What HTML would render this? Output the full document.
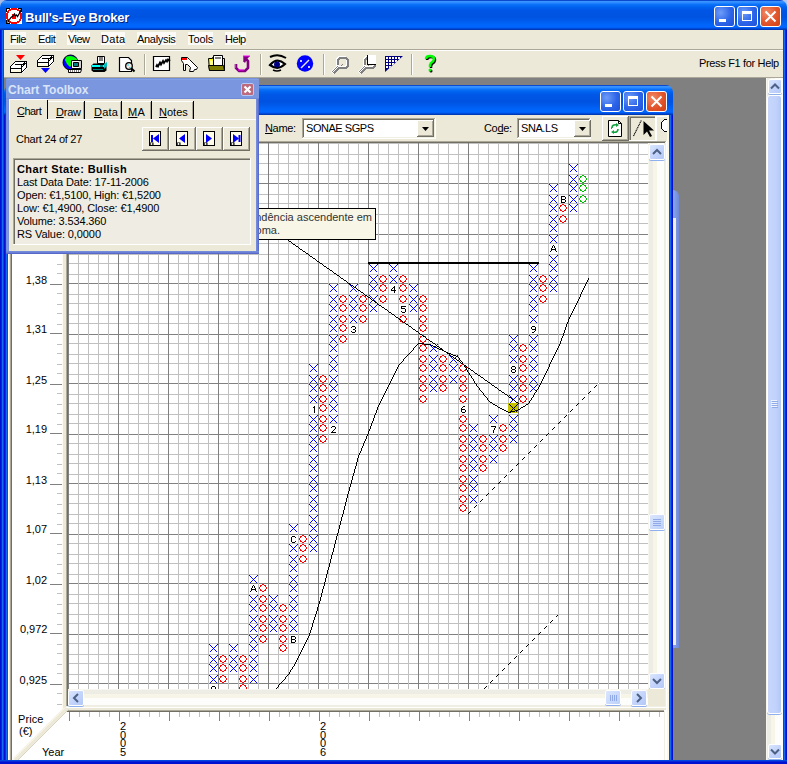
<!DOCTYPE html><html><head><meta charset="utf-8"><style>html,body{margin:0;padding:0}body{width:787px;height:764px;overflow:hidden;position:relative;background:#808080;font-family:"Liberation Sans", sans-serif}div{box-sizing:content-box}</style></head><body>
<div style="position:absolute;left:0px;top:0px;width:8px;height:8px;background:#a8bae6;"></div>
<div style="position:absolute;left:779px;top:0px;width:8px;height:8px;background:#b4c4ec;"></div>
<div style="position:absolute;left:0px;top:0px;width:787px;height:30px;background:linear-gradient(to bottom,#0a4ad0 0px,#0a4ad0 1px,#3d95ff 1px,#2a89ff 3px,#0d74fb 4px,#0062f0 7px,#0056e6 10px,#0053e1 17px,#0059ea 20px,#0064f8 24px,#0066ff 27px,#0058ee 28px,#0040c4 29px,#0033a8 30px);border-radius:7px 7px 0 0"></div>
<div style="position:absolute;left:0px;top:30px;width:4px;height:734px;background:linear-gradient(to right,#0010d0 0,#0010d0 1px,#0828d8 1px,#0828d8 2px,#166af0 2px,#166af0 3px,#0048e0 3px);"></div>
<div style="position:absolute;left:783px;top:30px;width:4px;height:734px;background:linear-gradient(to right,#0048e0 0,#0048e0 1px,#166af0 1px,#166af0 2px,#0828d8 2px,#0828d8 3px,#0010d0 3px);"></div>
<div style="position:absolute;left:0px;top:760px;width:787px;height:4px;background:linear-gradient(to bottom,#0048e0 0,#0048e0 1px,#0828d8 1px,#0828d8 2px,#0010d0 2px);"></div>
<svg style="position:absolute;left:6px;top:8px;" width="16" height="16" viewBox="0 0 16 16"><g shape-rendering="crispEdges"><rect x="0" y="0" width="16" height="16" fill="#fff"/><path d="M0 0h4v1h-3v3h-1z M12 0h4v4h-1v-3h-3z M0 12h1v3h3v1h-4z" fill="#000"/><path d="M5 0h6v1h2v1h1v1h1v2h1v6h-1v2h-1v1h-1v1h-2v1h-6v-1h-2v-1h-1v-1h-1v-2h-1v-6h1v-2h1v-1h1v-1h2z M5 2v1h-2v2h-1v6h1v2h2v1h6v-1h2v-2h1v-6h-1v-2h-2v-1z" fill="#f00" fill-rule="evenodd"/><path d="M6 6h3v2h1v3h-4z" fill="#f00"/></g><path d="M1.5 14.5L5 9.5L7 8L8.5 6L9.5 8L10.5 7L11.5 8.5L13 6L15.5 1" fill="none" stroke="#000" stroke-width="1.3"/></svg>
<div style="position:absolute;left:25.00px;top:11.00px;font-size:13px;line-height:13px;color:#fff;font-weight:bold;white-space:nowrap;letter-spacing:-0.219px;text-shadow:1px 1px 0 #0a1e7a">Bull's-Eye Broker</div>
<div style="position:absolute;left:714px;top:6px;width:21px;height:21px;box-sizing:border-box;border:1px solid #fff;border-radius:3px;background:radial-gradient(circle at 30% 30%,#6d9cf8 0%,#2c64e8 55%,#1f50d8 100%)"></div><div style="position:absolute;left:719px;top:19px;width:7px;height:3px;background:#fff;"></div>
<div style="position:absolute;left:737px;top:6px;width:21px;height:21px;box-sizing:border-box;border:1px solid #fff;border-radius:3px;background:radial-gradient(circle at 30% 30%,#6d9cf8 0%,#2c64e8 55%,#1f50d8 100%)"></div><div style="position:absolute;left:742px;top:11px;width:10px;height:10px;box-sizing:border-box;border:1px solid #fff;border-top-width:3px"></div>
<div style="position:absolute;left:760px;top:6px;width:21px;height:21px;box-sizing:border-box;border:1px solid #fff;border-radius:3px;background:radial-gradient(circle at 30% 30%,#f08a66 0%,#e2542c 55%,#d04010 100%)"></div><svg style="position:absolute;left:760px;top:6px" width="21" height="21"><path d="M5.5 5.5L15.5 15.5M15.5 5.5L5.5 15.5" stroke="#fff" stroke-width="2"/></svg>
<div style="position:absolute;left:4px;top:30px;width:779px;height:48px;background:#ece9d8;"></div>
<div style="position:absolute;left:10px;top:32px;width:16px;height:13px;background:#fbfaf6;"></div>
<div style="position:absolute;left:10.00px;top:33.69px;font-size:11px;line-height:11px;color:#000;font-weight:normal;white-space:nowrap;letter-spacing:-0.467px;">File</div>
<div style="position:absolute;left:38px;top:32px;width:18px;height:13px;background:#fbfaf6;"></div>
<div style="position:absolute;left:38.00px;top:33.69px;font-size:11px;line-height:11px;color:#000;font-weight:normal;white-space:nowrap;letter-spacing:-0.367px;">Edit</div>
<div style="position:absolute;left:67px;top:32px;width:23px;height:13px;background:#fbfaf6;"></div>
<div style="position:absolute;left:68.00px;top:33.69px;font-size:11px;line-height:11px;color:#000;font-weight:normal;white-space:nowrap;letter-spacing:-0.600px;">View</div>
<div style="position:absolute;left:101px;top:32px;width:24px;height:13px;background:#fbfaf6;"></div>
<div style="position:absolute;left:101.00px;top:33.69px;font-size:11px;line-height:11px;color:#000;font-weight:normal;white-space:nowrap;letter-spacing:0.333px;">Data</div>
<div style="position:absolute;left:137px;top:32px;width:39px;height:13px;background:#fbfaf6;"></div>
<div style="position:absolute;left:137.00px;top:33.69px;font-size:11px;line-height:11px;color:#000;font-weight:normal;white-space:nowrap;letter-spacing:-0.300px;">Analysis</div>
<div style="position:absolute;left:188px;top:32px;width:25px;height:13px;background:#fbfaf6;"></div>
<div style="position:absolute;left:188.00px;top:33.69px;font-size:11px;line-height:11px;color:#000;font-weight:normal;white-space:nowrap;letter-spacing:-0.100px;">Tools</div>
<div style="position:absolute;left:225px;top:32px;width:21px;height:13px;background:#fbfaf6;"></div>
<div style="position:absolute;left:225.00px;top:33.69px;font-size:11px;line-height:11px;color:#000;font-weight:normal;white-space:nowrap;letter-spacing:-0.467px;">Help</div>
<div style="position:absolute;left:4px;top:49px;width:779px;height:1px;background:#aca899;"></div>
<div style="position:absolute;left:4px;top:50px;width:779px;height:1px;background:#fff;"></div>
<div style="position:absolute;left:4px;top:77px;width:779px;height:1px;background:#aca899;"></div>
<div style="position:absolute;left:144px;top:54px;width:1px;height:21px;background:#aca899;"></div><div style="position:absolute;left:145px;top:54px;width:1px;height:21px;background:#fff;"></div><div style="position:absolute;left:260px;top:54px;width:1px;height:21px;background:#aca899;"></div><div style="position:absolute;left:261px;top:54px;width:1px;height:21px;background:#fff;"></div><div style="position:absolute;left:323px;top:54px;width:1px;height:21px;background:#aca899;"></div><div style="position:absolute;left:324px;top:54px;width:1px;height:21px;background:#fff;"></div><div style="position:absolute;left:411px;top:54px;width:1px;height:21px;background:#aca899;"></div><div style="position:absolute;left:412px;top:54px;width:1px;height:21px;background:#fff;"></div><svg style="position:absolute;left:0;top:0" width="787" height="80"><defs><clipPath id="tri"><path d="M385 56h18l-18 16z"/></clipPath></defs><path d="M16 55h9l-4.5 5z" fill="#f00"/><g transform="translate(0,0)" shape-rendering="crispEdges"><path d="M15 61h12v7l-5 5h-12v-7z" fill="#fff"/><path d="M11 70h10v2h-10z" fill="#fffbe0"/><path d="M15.5 61.5H26.5V67.5L21.5 72.5H10.5V66.5Z" fill="none" stroke="#000"/><path d="M10.5 68.5H21.5M21.5 65V72M15 64.5H22.5M14.5 62.5L11.5 65.5M26.5 62.5L21.5 67.5M25 62.5L22.5 65" fill="none" stroke="#000"/></g><g transform="translate(27,-6)" shape-rendering="crispEdges"><path d="M15 61h12v7l-5 5h-12v-7z" fill="#fff"/><path d="M11 70h10v2h-10z" fill="#fffbe0"/><path d="M15.5 61.5H26.5V67.5L21.5 72.5H10.5V66.5Z" fill="none" stroke="#000"/><path d="M10.5 68.5H21.5M21.5 65V72M15 64.5H22.5M14.5 62.5L11.5 65.5M26.5 62.5L21.5 67.5M25 62.5L22.5 65" fill="none" stroke="#000"/></g><path d="M41 68h9l-4.5 5z" fill="#00f"/><circle cx="70.5" cy="62.5" r="7.5" fill="#0000ff" stroke="#000"/><path d="M66 57q4-2 8 0q3 1 4 4l-3 1l-2-2l-2 2l1 3l-2 2l-3-3l-2-4z" fill="#00ff00"/><path d="M71.5 60.5h10v8h-10z" fill="#fff" stroke="#000"/><path d="M73.5 62.5h5v4h-5z" fill="#008080" stroke="#000"/><path d="M80 61v7" stroke="#a0a0a0"/><path d="M68.5 69.5h13l-1 3h-12z" fill="#fff" stroke="#000"/><path d="M70 71h10" stroke="#000" stroke-dasharray="1 1"/><path d="M97.5 56.5h7v7h-7z" fill="#fff" stroke="#000"/><path d="M99 58h4M99 60h4" stroke="#000"/><path d="M93.5 63.5h11l2 2v5l-2 1.5h-11l-2-1.5v-5z" fill="#000"/><path d="M92 65h12v2h-12z" fill="#00ffff"/><path d="M100 66h3" stroke="#000"/><path d="M93 69.5h10" stroke="#008080"/><path d="M104 64l3-2v4l-3 3z" fill="#00c0c0"/><path d="M119.5 57.5h9l3 3v11h-12z" fill="#fff" stroke="#000" stroke-width="1.2"/><circle cx="129" cy="66" r="3.3" fill="#f4e8e0" stroke="#000" stroke-width="1.3"/><path d="M127 64.5h2v1h-2zM129 67h1.5v1h-1.5z" fill="#00e0ff"/><path d="M131.5 68.5l3 3" stroke="#000" stroke-width="2"/><path d="M153.5 56.5h16v14h-16z" fill="#fff" stroke="#000" stroke-width="1.2"/><path d="M156 67l1 -2l1 1.5l2 -4l1 2l2 -3.5l1 2l2 -3l1 1.5l1 -2l1 1l1 -1" fill="none" stroke="#000" stroke-width="1.8"/><path d="M181.5 57.5h6l2 2l8 8l-1 2l-2 0l-1 2h-4l1-4l-3-3h-2v6h-2v-7l-2-3z" fill="#fff" stroke="#000"/><path d="M182 58h5v2h-5z" fill="#f00"/><path d="M208.5 58.5h4v-1h3v1h9v12h-15z" fill="#ffff00" stroke="#000"/><path d="M213.5 55.5h9v10h-9z" fill="#fff" stroke="#000"/><path d="M215 58h6" stroke="#000"/><path d="M210.5 60.5h2v5h-2z" fill="#fff"/><path d="M208.5 65.5h15l1 5h-15z" fill="#808000" stroke="#000"/><path d="M236 64v4l3 3h6l3-3v-7l-3-3" fill="none" stroke="#800080" stroke-width="2.6"/><path d="M243 56h7l-3 3l-2 4l-2-2z" fill="#800080"/><path d="M243 56h7" stroke="#ff00ff"/><path d="M243.5 56v6" stroke="#ff00ff"/><path d="M235.5 64v4M238 70h6" stroke="#ff00ff"/><path d="M270 57q8-4 16 1" fill="none" stroke="#000" stroke-width="2"/><path d="M270 65q7-8 15-1q-7 7-15 1z" fill="#fff" stroke="#000" stroke-width="2.2"/><circle cx="277" cy="64.5" r="3" fill="#000080"/><path d="M275 63h1v1h-1z" fill="#0000ff"/><path d="M273 70q4 2 8 0" fill="none" stroke="#000" stroke-width="1.5"/><circle cx="305" cy="63.5" r="8.2" fill="#0000ff"/><path d="M301 68l8-8" stroke="#e8e8e0" stroke-width="1.5"/><path d="M300 60h2v2h-2zM308 66h2v2h-2z" fill="#d0d0c8"/><g transform="translate(329,54)" shape-rendering="crispEdges"><path d="M11 4h6l2 2v6l-2 2h-6l-2-2v-6z" fill="none" stroke="#fff" stroke-width="2" transform="translate(-1,-1)"/><path d="M11 4h6l2 2v6l-2 2h-6l-2-2v-6z" fill="none" stroke="#808080" stroke-width="2"/><path d="M17 3l-2 2M14 10l-2 2" stroke="#808080" stroke-width="1"/><path d="M3 19l7-7" stroke="#fff" stroke-width="3"/><path d="M4.5 19.5l6-6" stroke="#808080" stroke-width="1.5"/><path d="M3 18l6-6" stroke="#808080" stroke-width="1"/></g><g transform="translate(356,54)" shape-rendering="crispEdges"><path d="M11 4h6l2 2v6l-2 2h-6l-2-2v-6z" fill="none" stroke="#fff" stroke-width="2" transform="translate(-1,-1)"/><path d="M11 4h6l2 2v6l-2 2h-6l-2-2v-6z" fill="none" stroke="#808080" stroke-width="2"/><path d="M17 3l-2 2M14 10l-2 2" stroke="#808080" stroke-width="1"/><path d="M3 19l7-7" stroke="#fff" stroke-width="3"/><path d="M4.5 19.5l6-6" stroke="#808080" stroke-width="1.5"/><path d="M3 18l6-6" stroke="#808080" stroke-width="1"/><path d="M12 1h8v9h-8z" fill="#fff"/><path d="M11.5 1v10M11.5 10.5h8" stroke="#000" fill="none"/></g><g clip-path="url(#tri)" shape-rendering="crispEdges"><path d="M385 56h18v16h-18z" fill="#000080"/><path d="M386 57h2v2h-2zM389 57h2v2h-2zM392 57h2v2h-2zM395 57h2v2h-2zM398 57h2v2h-2zM386 60h2v2h-2zM389 60h2v2h-2zM392 60h2v2h-2zM395 60h2v2h-2zM398 60h2v2h-2zM386 63h2v2h-2zM389 63h2v2h-2zM392 63h2v2h-2zM395 63h2v2h-2zM398 63h2v2h-2zM386 66h2v2h-2zM389 66h2v2h-2zM392 66h2v2h-2zM395 66h2v2h-2zM398 66h2v2h-2z" fill="#fff"/></g><path d="M426 59q0-3 4-3q4 0 4 3q0 2-3 4l-1 2v2" fill="none" stroke="#000" stroke-width="2.5" transform="translate(1,1)"/><circle cx="430" cy="70" r="1.5" fill="#000" transform="translate(1,1)"/><path d="M426 59q0-3 4-3q4 0 4 3q0 2-3 4l-1 2v2" fill="none" stroke="#00ff00" stroke-width="2.5"/><circle cx="430" cy="70" r="1.5" fill="#00ff00"/></svg>
<div style="position:absolute;left:699.00px;top:57.69px;font-size:11px;line-height:11px;color:#000;font-weight:normal;white-space:nowrap;letter-spacing:-0.338px;">Press F1 for Help</div>
<div style="position:absolute;left:766px;top:78px;width:17px;height:682px;background:linear-gradient(to right,#f7f6ef 0,#f7f6ef 1px,#eeede5 1px,#eeede5 5px,#f7f5e8 5px,#f7f5e8 9px,#fdfdfb 9px);"></div>
<div style="position:absolute;left:768px;top:79px;width:14px;height:15px;box-sizing:border-box;border:1px solid #fff;border-radius:2px;background:linear-gradient(135deg,#dbe6fd 0%,#c4d5fc 50%,#b3c8f7 100%);box-shadow:0 1px 0 #8fb0ec"></div><svg style="position:absolute;left:0;top:0" width="787" height="764"><path d="M771.0 88.5L775.0 84.5L779.0 88.5" fill="none" stroke="#4d6185" stroke-width="2"/></svg>
<div style="position:absolute;left:767px;top:95px;width:15px;height:619px;box-sizing:border-box;border:1px solid #fff;border-radius:3px;background:linear-gradient(to right,#c8d6fb,#c1d2fb 60%,#b4c8f6);box-shadow:0 1px 0 #8fb0ec"></div>
<div style="position:absolute;left:768px;top:744px;width:14px;height:15px;box-sizing:border-box;border:1px solid #fff;border-radius:2px;background:linear-gradient(135deg,#dbe6fd 0%,#c4d5fc 50%,#b3c8f7 100%);box-shadow:0 1px 0 #8fb0ec"></div><svg style="position:absolute;left:0;top:0" width="787" height="764"><path d="M771.0 749.5L775.0 753.5L779.0 749.5" fill="none" stroke="#4d6185" stroke-width="2"/></svg>
<div style="position:absolute;left:771px;top:400px;width:6px;height:1px;background:#eef3fe;"></div>
<div style="position:absolute;left:772px;top:401px;width:6px;height:1px;background:#8faae6;"></div>
<div style="position:absolute;left:771px;top:402px;width:6px;height:1px;background:#eef3fe;"></div>
<div style="position:absolute;left:772px;top:403px;width:6px;height:1px;background:#8faae6;"></div>
<div style="position:absolute;left:771px;top:404px;width:6px;height:1px;background:#eef3fe;"></div>
<div style="position:absolute;left:772px;top:405px;width:6px;height:1px;background:#8faae6;"></div>
<div style="position:absolute;left:771px;top:406px;width:6px;height:1px;background:#eef3fe;"></div>
<div style="position:absolute;left:772px;top:407px;width:6px;height:1px;background:#8faae6;"></div>
<div style="position:absolute;left:673px;top:190px;width:6px;height:458px;background:linear-gradient(to right,#8aa6e8,#6f88d8);border-radius:0 6px 0 0"></div>
<div style="position:absolute;left:673px;top:218px;width:3px;height:427px;background:#f2efdf;"></div>
<div style="position:absolute;left:4px;top:85px;width:669px;height:30px;background:linear-gradient(to bottom,#0a4ad0 0px,#0a4ad0 1px,#3d95ff 1px,#2a89ff 3px,#0d74fb 4px,#0062f0 7px,#0056e6 10px,#0053e1 17px,#0059ea 20px,#0064f8 24px,#0066ff 27px,#0058ee 28px,#0040c4 29px,#0033a8 30px);border-radius:7px 7px 0 0"></div>
<div style="position:absolute;left:4px;top:115px;width:4px;height:645px;background:linear-gradient(to right,#0010d0 0,#0010d0 1px,#0830d8 1px,#0830d8 2px,#166af0 2px,#166af0 3px,#0050e8 3px);"></div>
<div style="position:absolute;left:669px;top:115px;width:4px;height:645px;background:linear-gradient(to right,#0050e8 0,#0050e8 1px,#166af0 1px,#166af0 2px,#0830d8 2px,#0830d8 3px,#0010d0 3px);"></div>
<div style="position:absolute;left:600px;top:91px;width:21px;height:21px;box-sizing:border-box;border:1px solid #fff;border-radius:3px;background:radial-gradient(circle at 30% 30%,#6d9cf8 0%,#2c64e8 55%,#1f50d8 100%)"></div><div style="position:absolute;left:605px;top:104px;width:7px;height:3px;background:#fff;"></div>
<div style="position:absolute;left:623px;top:91px;width:21px;height:21px;box-sizing:border-box;border:1px solid #fff;border-radius:3px;background:radial-gradient(circle at 30% 30%,#6d9cf8 0%,#2c64e8 55%,#1f50d8 100%)"></div><div style="position:absolute;left:628px;top:96px;width:10px;height:10px;box-sizing:border-box;border:1px solid #fff;border-top-width:3px"></div>
<div style="position:absolute;left:646px;top:91px;width:21px;height:21px;box-sizing:border-box;border:1px solid #fff;border-radius:3px;background:radial-gradient(circle at 30% 30%,#f08a66 0%,#e2542c 55%,#d04010 100%)"></div><svg style="position:absolute;left:646px;top:91px" width="21" height="21"><path d="M5.5 5.5L15.5 15.5M15.5 5.5L5.5 15.5" stroke="#fff" stroke-width="2"/></svg>
<div style="position:absolute;left:8px;top:115px;width:661px;height:645px;background:#ece9d8;"></div>
<div style="position:absolute;left:8px;top:115px;width:1px;height:645px;background:#fffbf0;"></div>
<div style="position:absolute;left:265.00px;top:122.69px;font-size:11px;line-height:11px;color:#000;font-weight:normal;white-space:nowrap;letter-spacing:-0.350px;"><u>N</u>ame:</div>
<div style="position:absolute;left:302px;top:118px;width:134px;height:1px;background:#aca899;"></div><div style="position:absolute;left:302px;top:118px;width:1px;height:21px;background:#aca899;"></div><div style="position:absolute;left:303px;top:119px;width:132px;height:1px;background:#716f64;"></div><div style="position:absolute;left:303px;top:119px;width:1px;height:19px;background:#716f64;"></div><div style="position:absolute;left:302px;top:138px;width:134px;height:1px;background:#fff;"></div><div style="position:absolute;left:435px;top:118px;width:1px;height:21px;background:#fff;"></div><div style="position:absolute;left:303px;top:137px;width:132px;height:1px;background:#f1efe2;"></div><div style="position:absolute;left:434px;top:119px;width:1px;height:19px;background:#f1efe2;"></div>
<div style="position:absolute;left:304px;top:120px;width:130px;height:17px;background:#fff;"></div>
<div style="position:absolute;left:306.00px;top:122.69px;font-size:11px;line-height:11px;color:#000;font-weight:normal;white-space:nowrap;letter-spacing:-0.456px;">SONAE SGPS</div>
<div style="position:absolute;left:417px;top:120px;width:17px;height:17px;background:#ece9d8;"></div><div style="position:absolute;left:417px;top:120px;width:17px;height:1px;background:#fff;"></div><div style="position:absolute;left:417px;top:120px;width:1px;height:17px;background:#fff;"></div><div style="position:absolute;left:417px;top:136px;width:17px;height:1px;background:#716f64;"></div><div style="position:absolute;left:433px;top:120px;width:1px;height:17px;background:#716f64;"></div><div style="position:absolute;left:418px;top:135px;width:15px;height:1px;background:#aca899;"></div><div style="position:absolute;left:432px;top:121px;width:1px;height:15px;background:#aca899;"></div>
<svg style="position:absolute;left:422px;top:127px" width="7" height="4"><path d="M0 0h7L3.5 4z" fill="#000"/></svg>
<div style="position:absolute;left:484.00px;top:122.69px;font-size:11px;line-height:11px;color:#000;font-weight:normal;white-space:nowrap;letter-spacing:-0.350px;">Co<u>d</u>e:</div>
<div style="position:absolute;left:517px;top:118px;width:74px;height:1px;background:#aca899;"></div><div style="position:absolute;left:517px;top:118px;width:1px;height:21px;background:#aca899;"></div><div style="position:absolute;left:518px;top:119px;width:72px;height:1px;background:#716f64;"></div><div style="position:absolute;left:518px;top:119px;width:1px;height:19px;background:#716f64;"></div><div style="position:absolute;left:517px;top:138px;width:74px;height:1px;background:#fff;"></div><div style="position:absolute;left:590px;top:118px;width:1px;height:21px;background:#fff;"></div><div style="position:absolute;left:518px;top:137px;width:72px;height:1px;background:#f1efe2;"></div><div style="position:absolute;left:589px;top:119px;width:1px;height:19px;background:#f1efe2;"></div>
<div style="position:absolute;left:519px;top:120px;width:70px;height:17px;background:#fff;"></div>
<div style="position:absolute;left:521.00px;top:122.69px;font-size:11px;line-height:11px;color:#000;font-weight:normal;white-space:nowrap;letter-spacing:-0.420px;">SNA.LS</div>
<div style="position:absolute;left:574px;top:120px;width:17px;height:17px;background:#ece9d8;"></div><div style="position:absolute;left:574px;top:120px;width:17px;height:1px;background:#fff;"></div><div style="position:absolute;left:574px;top:120px;width:1px;height:17px;background:#fff;"></div><div style="position:absolute;left:574px;top:136px;width:17px;height:1px;background:#716f64;"></div><div style="position:absolute;left:590px;top:120px;width:1px;height:17px;background:#716f64;"></div><div style="position:absolute;left:575px;top:135px;width:15px;height:1px;background:#aca899;"></div><div style="position:absolute;left:589px;top:121px;width:1px;height:15px;background:#aca899;"></div>
<svg style="position:absolute;left:579px;top:127px" width="7" height="4"><path d="M0 0h7L3.5 4z" fill="#000"/></svg>
<div style="position:absolute;left:602px;top:116px;width:27px;height:25px;background:#ece9d8;"></div><div style="position:absolute;left:602px;top:116px;width:27px;height:1px;background:#fff;"></div><div style="position:absolute;left:602px;top:116px;width:1px;height:25px;background:#fff;"></div><div style="position:absolute;left:602px;top:140px;width:27px;height:1px;background:#716f64;"></div><div style="position:absolute;left:628px;top:116px;width:1px;height:25px;background:#716f64;"></div><div style="position:absolute;left:603px;top:139px;width:25px;height:1px;background:#aca899;"></div><div style="position:absolute;left:627px;top:117px;width:1px;height:23px;background:#aca899;"></div><svg style="position:absolute;left:608px;top:120px;" width="14" height="17" viewBox="0 0 14 17"><path d="M0.5 0.5h10l3 3v13h-13z" fill="#fff" stroke="#000"/><path d="M10.5 0.5v3h3" fill="none" stroke="#000"/><path d="M4 8q0-4 5-3" fill="none" stroke="#10a040" stroke-width="1.6"/><path d="M8 3l3 2l-3 2z" fill="#10a040"/><path d="M10 9q0 4-5 3" fill="none" stroke="#10a040" stroke-width="1.6"/><path d="M6 14l-3-2l3-2z" fill="#10a040"/><path d="M3.5 7v2" stroke="#20a0a0"/></svg><div style="position:absolute;left:629px;top:116px;width:27px;height:25px;background:#ece9d8;"></div><div style="position:absolute;left:629px;top:116px;width:27px;height:1px;background:#aca899;"></div><div style="position:absolute;left:629px;top:116px;width:1px;height:25px;background:#aca899;"></div><div style="position:absolute;left:630px;top:117px;width:25px;height:1px;background:#716f64;"></div><div style="position:absolute;left:630px;top:117px;width:1px;height:23px;background:#716f64;"></div><div style="position:absolute;left:629px;top:140px;width:27px;height:1px;background:#fff;"></div><div style="position:absolute;left:655px;top:116px;width:1px;height:25px;background:#fff;"></div><svg style="position:absolute;left:630px;top:118px;" width="26" height="22" viewBox="0 0 26 22"><path d="M3.5 18L11.5 2" stroke="#000" stroke-width="1.1" stroke-dasharray="1.2 0.6"/><path d="M13.5 3v14l3.5 -3.5l3 5.5l2 -1l-3 -5.5h5z" fill="#000"/></svg><div style="position:absolute;left:656px;top:116px;width:13px;height:1px;background:#fff;"></div><div style="position:absolute;left:656px;top:116px;width:1px;height:25px;background:#fff;"></div><div style="position:absolute;left:657px;top:117px;width:12px;height:23px;overflow:hidden"><svg style="position:absolute;left:0px;top:0px;" width="20" height="23" viewBox="0 0 20 23"><path d="M7.5 2.5h5l3 3v6l-3 3h-5l-3-3v-6z" fill="#fff" stroke="#000" shape-rendering="crispEdges"/></svg></div>
<div style="position:absolute;left:667px;top:115px;width:2px;height:645px;background:#fff8e0;"></div>
<div style="position:absolute;left:10px;top:141px;width:657px;height:619px;background:#fff;"></div>
<div style="position:absolute;left:10px;top:141px;width:1px;height:619px;background:#aca899;"></div>
<div style="position:absolute;left:11px;top:142px;width:1px;height:618px;background:#716f64;"></div>
<div style="position:absolute;left:10px;top:141px;width:656px;height:1px;background:#aca899;"></div>
<div style="position:absolute;left:11px;top:142px;width:654px;height:1px;background:#716f64;"></div>
<div style="position:absolute;left:665px;top:142px;width:1px;height:618px;background:#f1efe2;"></div>
<div style="position:absolute;left:666px;top:141px;width:1px;height:619px;background:#fff;"></div>
<div style="position:absolute;left:62px;top:143px;width:1px;height:567px;background:#fffbf0;"></div>
<div style="position:absolute;left:63px;top:143px;width:3px;height:567px;background:#ece9d8;"></div>
<div style="position:absolute;left:66px;top:143px;width:1px;height:564px;background:#aca899;"></div>
<div style="position:absolute;left:67px;top:143px;width:1px;height:564px;background:#716f64;"></div>
<div style="position:absolute;left:66px;top:706px;width:600px;height:1px;background:#f1efe2;"></div>
<div style="position:absolute;left:66px;top:707px;width:600px;height:1px;background:#fff;"></div>
<div style="position:absolute;left:63px;top:708px;width:603px;height:2px;background:#ece9d8;"></div>
<div style="position:absolute;left:66px;top:710px;width:598px;height:1px;background:#aca899;"></div>
<div style="position:absolute;left:67px;top:711px;width:597px;height:1px;background:#716f64;"></div>
<div style="position:absolute;left:664px;top:711px;width:1px;height:49px;background:#f1efe2;"></div>
<div style="position:absolute;left:665px;top:710px;width:1px;height:50px;background:#fff;"></div>
<svg style="position:absolute;left:68px;top:143px" width="580" height="546" viewBox="68 143 580 546" shape-rendering="crispEdges">
<rect x="68" y="143" width="580" height="546" fill="#fff"/>
<path fill="#c0c0c0" d="M68 143h580v1h-580zM68 154h580v1h-580zM68 163h580v1h-580zM68 174h580v1h-580zM68 194h580v1h-580zM68 203h580v1h-580zM68 214h580v1h-580zM68 223h580v1h-580zM68 243h580v1h-580zM68 254h580v1h-580zM68 263h580v1h-580zM68 274h580v1h-580zM68 294h580v1h-580zM68 303h580v1h-580zM68 314h580v1h-580zM68 323h580v1h-580zM68 343h580v1h-580zM68 354h580v1h-580zM68 363h580v1h-580zM68 374h580v1h-580zM68 394h580v1h-580zM68 403h580v1h-580zM68 414h580v1h-580zM68 423h580v1h-580zM68 443h580v1h-580zM68 454h580v1h-580zM68 463h580v1h-580zM68 474h580v1h-580zM68 494h580v1h-580zM68 503h580v1h-580zM68 514h580v1h-580zM68 523h580v1h-580zM68 543h580v1h-580zM68 554h580v1h-580zM68 563h580v1h-580zM68 574h580v1h-580zM68 594h580v1h-580zM68 603h580v1h-580zM68 614h580v1h-580zM68 623h580v1h-580zM68 643h580v1h-580zM68 654h580v1h-580zM68 663h580v1h-580zM68 674h580v1h-580z"/>
<path fill="#808080" d="M68 183h580v1h-580zM68 234h580v1h-580zM68 283h580v1h-580zM68 334h580v1h-580zM68 383h580v1h-580zM68 434h580v1h-580zM68 483h580v1h-580zM68 534h580v1h-580zM68 583h580v1h-580zM68 634h580v1h-580zM68 683h580v1h-580z"/>
<path fill="#c0c0c0" d="M78 143h1v546h-1zM88 143h1v546h-1zM98 143h1v546h-1zM108 143h1v546h-1zM128 143h1v546h-1zM138 143h1v546h-1zM148 143h1v546h-1zM158 143h1v546h-1zM178 143h1v546h-1zM188 143h1v546h-1zM198 143h1v546h-1zM208 143h1v546h-1zM228 143h1v546h-1zM238 143h1v546h-1zM248 143h1v546h-1zM258 143h1v546h-1zM278 143h1v546h-1zM288 143h1v546h-1zM298 143h1v546h-1zM308 143h1v546h-1zM328 143h1v546h-1zM338 143h1v546h-1zM348 143h1v546h-1zM358 143h1v546h-1zM378 143h1v546h-1zM388 143h1v546h-1zM398 143h1v546h-1zM408 143h1v546h-1zM428 143h1v546h-1zM438 143h1v546h-1zM448 143h1v546h-1zM458 143h1v546h-1zM478 143h1v546h-1zM488 143h1v546h-1zM498 143h1v546h-1zM508 143h1v546h-1zM528 143h1v546h-1zM538 143h1v546h-1zM548 143h1v546h-1zM558 143h1v546h-1zM578 143h1v546h-1zM588 143h1v546h-1zM598 143h1v546h-1zM608 143h1v546h-1zM628 143h1v546h-1zM638 143h1v546h-1z"/>
<path fill="#808080" d="M68 143h1v546h-1zM118 143h1v546h-1zM168 143h1v546h-1zM218 143h1v546h-1zM268 143h1v546h-1zM318 143h1v546h-1zM368 143h1v546h-1zM418 143h1v546h-1zM468 143h1v546h-1zM518 143h1v546h-1zM568 143h1v546h-1zM618 143h1v546h-1z"/>
<rect x="508" y="403" width="10" height="10" fill="#c8c400"/>
<path fill="#0000ff" d="M209 644h1v1h-1zM210 645h1v1h-1zM211 646h1v1h-1zM212 647h1v1h-1zM213 648h1v1h-1zM214 649h1v1h-1zM215 650h1v1h-1zM216 651h1v1h-1zM217 644h1v1h-1zM216 645h1v1h-1zM215 646h1v1h-1zM214 647h1v1h-1zM213 648h1v1h-1zM212 649h1v1h-1zM211 650h1v1h-1zM210 651h1v1h-1zM209 655h1v1h-1zM210 656h1v1h-1zM211 657h1v1h-1zM212 658h1v1h-1zM213 659h1v1h-1zM214 660h1v1h-1zM215 661h1v1h-1zM216 662h1v1h-1zM217 655h1v1h-1zM216 656h1v1h-1zM215 657h1v1h-1zM214 658h1v1h-1zM213 659h1v1h-1zM212 660h1v1h-1zM211 661h1v1h-1zM210 662h1v1h-1zM209 664h1v1h-1zM210 665h1v1h-1zM211 666h1v1h-1zM212 667h1v1h-1zM213 668h1v1h-1zM214 669h1v1h-1zM215 670h1v1h-1zM216 671h1v1h-1zM217 664h1v1h-1zM216 665h1v1h-1zM215 666h1v1h-1zM214 667h1v1h-1zM213 668h1v1h-1zM212 669h1v1h-1zM211 670h1v1h-1zM210 671h1v1h-1zM209 675h1v1h-1zM210 676h1v1h-1zM211 677h1v1h-1zM212 678h1v1h-1zM213 679h1v1h-1zM214 680h1v1h-1zM215 681h1v1h-1zM216 682h1v1h-1zM217 675h1v1h-1zM216 676h1v1h-1zM215 677h1v1h-1zM214 678h1v1h-1zM213 679h1v1h-1zM212 680h1v1h-1zM211 681h1v1h-1zM210 682h1v1h-1zM229 644h1v1h-1zM230 645h1v1h-1zM231 646h1v1h-1zM232 647h1v1h-1zM233 648h1v1h-1zM234 649h1v1h-1zM235 650h1v1h-1zM236 651h1v1h-1zM237 644h1v1h-1zM236 645h1v1h-1zM235 646h1v1h-1zM234 647h1v1h-1zM233 648h1v1h-1zM232 649h1v1h-1zM231 650h1v1h-1zM230 651h1v1h-1zM229 655h1v1h-1zM230 656h1v1h-1zM231 657h1v1h-1zM232 658h1v1h-1zM233 659h1v1h-1zM234 660h1v1h-1zM235 661h1v1h-1zM236 662h1v1h-1zM237 655h1v1h-1zM236 656h1v1h-1zM235 657h1v1h-1zM234 658h1v1h-1zM233 659h1v1h-1zM232 660h1v1h-1zM231 661h1v1h-1zM230 662h1v1h-1zM229 664h1v1h-1zM230 665h1v1h-1zM231 666h1v1h-1zM232 667h1v1h-1zM233 668h1v1h-1zM234 669h1v1h-1zM235 670h1v1h-1zM236 671h1v1h-1zM237 664h1v1h-1zM236 665h1v1h-1zM235 666h1v1h-1zM234 667h1v1h-1zM233 668h1v1h-1zM232 669h1v1h-1zM231 670h1v1h-1zM230 671h1v1h-1zM249 575h1v1h-1zM250 576h1v1h-1zM251 577h1v1h-1zM252 578h1v1h-1zM253 579h1v1h-1zM254 580h1v1h-1zM255 581h1v1h-1zM256 582h1v1h-1zM257 575h1v1h-1zM256 576h1v1h-1zM255 577h1v1h-1zM254 578h1v1h-1zM253 579h1v1h-1zM252 580h1v1h-1zM251 581h1v1h-1zM250 582h1v1h-1zM249 595h1v1h-1zM250 596h1v1h-1zM251 597h1v1h-1zM252 598h1v1h-1zM253 599h1v1h-1zM254 600h1v1h-1zM255 601h1v1h-1zM256 602h1v1h-1zM257 595h1v1h-1zM256 596h1v1h-1zM255 597h1v1h-1zM254 598h1v1h-1zM253 599h1v1h-1zM252 600h1v1h-1zM251 601h1v1h-1zM250 602h1v1h-1zM249 604h1v1h-1zM250 605h1v1h-1zM251 606h1v1h-1zM252 607h1v1h-1zM253 608h1v1h-1zM254 609h1v1h-1zM255 610h1v1h-1zM256 611h1v1h-1zM257 604h1v1h-1zM256 605h1v1h-1zM255 606h1v1h-1zM254 607h1v1h-1zM253 608h1v1h-1zM252 609h1v1h-1zM251 610h1v1h-1zM250 611h1v1h-1zM249 615h1v1h-1zM250 616h1v1h-1zM251 617h1v1h-1zM252 618h1v1h-1zM253 619h1v1h-1zM254 620h1v1h-1zM255 621h1v1h-1zM256 622h1v1h-1zM257 615h1v1h-1zM256 616h1v1h-1zM255 617h1v1h-1zM254 618h1v1h-1zM253 619h1v1h-1zM252 620h1v1h-1zM251 621h1v1h-1zM250 622h1v1h-1zM249 624h1v1h-1zM250 625h1v1h-1zM251 626h1v1h-1zM252 627h1v1h-1zM253 628h1v1h-1zM254 629h1v1h-1zM255 630h1v1h-1zM256 631h1v1h-1zM257 624h1v1h-1zM256 625h1v1h-1zM255 626h1v1h-1zM254 627h1v1h-1zM253 628h1v1h-1zM252 629h1v1h-1zM251 630h1v1h-1zM250 631h1v1h-1zM249 635h1v1h-1zM250 636h1v1h-1zM251 637h1v1h-1zM252 638h1v1h-1zM253 639h1v1h-1zM254 640h1v1h-1zM255 641h1v1h-1zM256 642h1v1h-1zM257 635h1v1h-1zM256 636h1v1h-1zM255 637h1v1h-1zM254 638h1v1h-1zM253 639h1v1h-1zM252 640h1v1h-1zM251 641h1v1h-1zM250 642h1v1h-1zM249 644h1v1h-1zM250 645h1v1h-1zM251 646h1v1h-1zM252 647h1v1h-1zM253 648h1v1h-1zM254 649h1v1h-1zM255 650h1v1h-1zM256 651h1v1h-1zM257 644h1v1h-1zM256 645h1v1h-1zM255 646h1v1h-1zM254 647h1v1h-1zM253 648h1v1h-1zM252 649h1v1h-1zM251 650h1v1h-1zM250 651h1v1h-1zM249 655h1v1h-1zM250 656h1v1h-1zM251 657h1v1h-1zM252 658h1v1h-1zM253 659h1v1h-1zM254 660h1v1h-1zM255 661h1v1h-1zM256 662h1v1h-1zM257 655h1v1h-1zM256 656h1v1h-1zM255 657h1v1h-1zM254 658h1v1h-1zM253 659h1v1h-1zM252 660h1v1h-1zM251 661h1v1h-1zM250 662h1v1h-1zM249 664h1v1h-1zM250 665h1v1h-1zM251 666h1v1h-1zM252 667h1v1h-1zM253 668h1v1h-1zM254 669h1v1h-1zM255 670h1v1h-1zM256 671h1v1h-1zM257 664h1v1h-1zM256 665h1v1h-1zM255 666h1v1h-1zM254 667h1v1h-1zM253 668h1v1h-1zM252 669h1v1h-1zM251 670h1v1h-1zM250 671h1v1h-1zM249 675h1v1h-1zM250 676h1v1h-1zM251 677h1v1h-1zM252 678h1v1h-1zM253 679h1v1h-1zM254 680h1v1h-1zM255 681h1v1h-1zM256 682h1v1h-1zM257 675h1v1h-1zM256 676h1v1h-1zM255 677h1v1h-1zM254 678h1v1h-1zM253 679h1v1h-1zM252 680h1v1h-1zM251 681h1v1h-1zM250 682h1v1h-1zM269 595h1v1h-1zM270 596h1v1h-1zM271 597h1v1h-1zM272 598h1v1h-1zM273 599h1v1h-1zM274 600h1v1h-1zM275 601h1v1h-1zM276 602h1v1h-1zM277 595h1v1h-1zM276 596h1v1h-1zM275 597h1v1h-1zM274 598h1v1h-1zM273 599h1v1h-1zM272 600h1v1h-1zM271 601h1v1h-1zM270 602h1v1h-1zM269 604h1v1h-1zM270 605h1v1h-1zM271 606h1v1h-1zM272 607h1v1h-1zM273 608h1v1h-1zM274 609h1v1h-1zM275 610h1v1h-1zM276 611h1v1h-1zM277 604h1v1h-1zM276 605h1v1h-1zM275 606h1v1h-1zM274 607h1v1h-1zM273 608h1v1h-1zM272 609h1v1h-1zM271 610h1v1h-1zM270 611h1v1h-1zM269 615h1v1h-1zM270 616h1v1h-1zM271 617h1v1h-1zM272 618h1v1h-1zM273 619h1v1h-1zM274 620h1v1h-1zM275 621h1v1h-1zM276 622h1v1h-1zM277 615h1v1h-1zM276 616h1v1h-1zM275 617h1v1h-1zM274 618h1v1h-1zM273 619h1v1h-1zM272 620h1v1h-1zM271 621h1v1h-1zM270 622h1v1h-1zM269 624h1v1h-1zM270 625h1v1h-1zM271 626h1v1h-1zM272 627h1v1h-1zM273 628h1v1h-1zM274 629h1v1h-1zM275 630h1v1h-1zM276 631h1v1h-1zM277 624h1v1h-1zM276 625h1v1h-1zM275 626h1v1h-1zM274 627h1v1h-1zM273 628h1v1h-1zM272 629h1v1h-1zM271 630h1v1h-1zM270 631h1v1h-1zM289 524h1v1h-1zM290 525h1v1h-1zM291 526h1v1h-1zM292 527h1v1h-1zM293 528h1v1h-1zM294 529h1v1h-1zM295 530h1v1h-1zM296 531h1v1h-1zM297 524h1v1h-1zM296 525h1v1h-1zM295 526h1v1h-1zM294 527h1v1h-1zM293 528h1v1h-1zM292 529h1v1h-1zM291 530h1v1h-1zM290 531h1v1h-1zM289 544h1v1h-1zM290 545h1v1h-1zM291 546h1v1h-1zM292 547h1v1h-1zM293 548h1v1h-1zM294 549h1v1h-1zM295 550h1v1h-1zM296 551h1v1h-1zM297 544h1v1h-1zM296 545h1v1h-1zM295 546h1v1h-1zM294 547h1v1h-1zM293 548h1v1h-1zM292 549h1v1h-1zM291 550h1v1h-1zM290 551h1v1h-1zM289 555h1v1h-1zM290 556h1v1h-1zM291 557h1v1h-1zM292 558h1v1h-1zM293 559h1v1h-1zM294 560h1v1h-1zM295 561h1v1h-1zM296 562h1v1h-1zM297 555h1v1h-1zM296 556h1v1h-1zM295 557h1v1h-1zM294 558h1v1h-1zM293 559h1v1h-1zM292 560h1v1h-1zM291 561h1v1h-1zM290 562h1v1h-1zM289 564h1v1h-1zM290 565h1v1h-1zM291 566h1v1h-1zM292 567h1v1h-1zM293 568h1v1h-1zM294 569h1v1h-1zM295 570h1v1h-1zM296 571h1v1h-1zM297 564h1v1h-1zM296 565h1v1h-1zM295 566h1v1h-1zM294 567h1v1h-1zM293 568h1v1h-1zM292 569h1v1h-1zM291 570h1v1h-1zM290 571h1v1h-1zM289 575h1v1h-1zM290 576h1v1h-1zM291 577h1v1h-1zM292 578h1v1h-1zM293 579h1v1h-1zM294 580h1v1h-1zM295 581h1v1h-1zM296 582h1v1h-1zM297 575h1v1h-1zM296 576h1v1h-1zM295 577h1v1h-1zM294 578h1v1h-1zM293 579h1v1h-1zM292 580h1v1h-1zM291 581h1v1h-1zM290 582h1v1h-1zM289 584h1v1h-1zM290 585h1v1h-1zM291 586h1v1h-1zM292 587h1v1h-1zM293 588h1v1h-1zM294 589h1v1h-1zM295 590h1v1h-1zM296 591h1v1h-1zM297 584h1v1h-1zM296 585h1v1h-1zM295 586h1v1h-1zM294 587h1v1h-1zM293 588h1v1h-1zM292 589h1v1h-1zM291 590h1v1h-1zM290 591h1v1h-1zM289 595h1v1h-1zM290 596h1v1h-1zM291 597h1v1h-1zM292 598h1v1h-1zM293 599h1v1h-1zM294 600h1v1h-1zM295 601h1v1h-1zM296 602h1v1h-1zM297 595h1v1h-1zM296 596h1v1h-1zM295 597h1v1h-1zM294 598h1v1h-1zM293 599h1v1h-1zM292 600h1v1h-1zM291 601h1v1h-1zM290 602h1v1h-1zM289 604h1v1h-1zM290 605h1v1h-1zM291 606h1v1h-1zM292 607h1v1h-1zM293 608h1v1h-1zM294 609h1v1h-1zM295 610h1v1h-1zM296 611h1v1h-1zM297 604h1v1h-1zM296 605h1v1h-1zM295 606h1v1h-1zM294 607h1v1h-1zM293 608h1v1h-1zM292 609h1v1h-1zM291 610h1v1h-1zM290 611h1v1h-1zM289 615h1v1h-1zM290 616h1v1h-1zM291 617h1v1h-1zM292 618h1v1h-1zM293 619h1v1h-1zM294 620h1v1h-1zM295 621h1v1h-1zM296 622h1v1h-1zM297 615h1v1h-1zM296 616h1v1h-1zM295 617h1v1h-1zM294 618h1v1h-1zM293 619h1v1h-1zM292 620h1v1h-1zM291 621h1v1h-1zM290 622h1v1h-1zM289 624h1v1h-1zM290 625h1v1h-1zM291 626h1v1h-1zM292 627h1v1h-1zM293 628h1v1h-1zM294 629h1v1h-1zM295 630h1v1h-1zM296 631h1v1h-1zM297 624h1v1h-1zM296 625h1v1h-1zM295 626h1v1h-1zM294 627h1v1h-1zM293 628h1v1h-1zM292 629h1v1h-1zM291 630h1v1h-1zM290 631h1v1h-1zM309 364h1v1h-1zM310 365h1v1h-1zM311 366h1v1h-1zM312 367h1v1h-1zM313 368h1v1h-1zM314 369h1v1h-1zM315 370h1v1h-1zM316 371h1v1h-1zM317 364h1v1h-1zM316 365h1v1h-1zM315 366h1v1h-1zM314 367h1v1h-1zM313 368h1v1h-1zM312 369h1v1h-1zM311 370h1v1h-1zM310 371h1v1h-1zM309 375h1v1h-1zM310 376h1v1h-1zM311 377h1v1h-1zM312 378h1v1h-1zM313 379h1v1h-1zM314 380h1v1h-1zM315 381h1v1h-1zM316 382h1v1h-1zM317 375h1v1h-1zM316 376h1v1h-1zM315 377h1v1h-1zM314 378h1v1h-1zM313 379h1v1h-1zM312 380h1v1h-1zM311 381h1v1h-1zM310 382h1v1h-1zM309 384h1v1h-1zM310 385h1v1h-1zM311 386h1v1h-1zM312 387h1v1h-1zM313 388h1v1h-1zM314 389h1v1h-1zM315 390h1v1h-1zM316 391h1v1h-1zM317 384h1v1h-1zM316 385h1v1h-1zM315 386h1v1h-1zM314 387h1v1h-1zM313 388h1v1h-1zM312 389h1v1h-1zM311 390h1v1h-1zM310 391h1v1h-1zM309 395h1v1h-1zM310 396h1v1h-1zM311 397h1v1h-1zM312 398h1v1h-1zM313 399h1v1h-1zM314 400h1v1h-1zM315 401h1v1h-1zM316 402h1v1h-1zM317 395h1v1h-1zM316 396h1v1h-1zM315 397h1v1h-1zM314 398h1v1h-1zM313 399h1v1h-1zM312 400h1v1h-1zM311 401h1v1h-1zM310 402h1v1h-1zM309 415h1v1h-1zM310 416h1v1h-1zM311 417h1v1h-1zM312 418h1v1h-1zM313 419h1v1h-1zM314 420h1v1h-1zM315 421h1v1h-1zM316 422h1v1h-1zM317 415h1v1h-1zM316 416h1v1h-1zM315 417h1v1h-1zM314 418h1v1h-1zM313 419h1v1h-1zM312 420h1v1h-1zM311 421h1v1h-1zM310 422h1v1h-1zM309 424h1v1h-1zM310 425h1v1h-1zM311 426h1v1h-1zM312 427h1v1h-1zM313 428h1v1h-1zM314 429h1v1h-1zM315 430h1v1h-1zM316 431h1v1h-1zM317 424h1v1h-1zM316 425h1v1h-1zM315 426h1v1h-1zM314 427h1v1h-1zM313 428h1v1h-1zM312 429h1v1h-1zM311 430h1v1h-1zM310 431h1v1h-1zM309 435h1v1h-1zM310 436h1v1h-1zM311 437h1v1h-1zM312 438h1v1h-1zM313 439h1v1h-1zM314 440h1v1h-1zM315 441h1v1h-1zM316 442h1v1h-1zM317 435h1v1h-1zM316 436h1v1h-1zM315 437h1v1h-1zM314 438h1v1h-1zM313 439h1v1h-1zM312 440h1v1h-1zM311 441h1v1h-1zM310 442h1v1h-1zM309 444h1v1h-1zM310 445h1v1h-1zM311 446h1v1h-1zM312 447h1v1h-1zM313 448h1v1h-1zM314 449h1v1h-1zM315 450h1v1h-1zM316 451h1v1h-1zM317 444h1v1h-1zM316 445h1v1h-1zM315 446h1v1h-1zM314 447h1v1h-1zM313 448h1v1h-1zM312 449h1v1h-1zM311 450h1v1h-1zM310 451h1v1h-1zM309 455h1v1h-1zM310 456h1v1h-1zM311 457h1v1h-1zM312 458h1v1h-1zM313 459h1v1h-1zM314 460h1v1h-1zM315 461h1v1h-1zM316 462h1v1h-1zM317 455h1v1h-1zM316 456h1v1h-1zM315 457h1v1h-1zM314 458h1v1h-1zM313 459h1v1h-1zM312 460h1v1h-1zM311 461h1v1h-1zM310 462h1v1h-1zM309 464h1v1h-1zM310 465h1v1h-1zM311 466h1v1h-1zM312 467h1v1h-1zM313 468h1v1h-1zM314 469h1v1h-1zM315 470h1v1h-1zM316 471h1v1h-1zM317 464h1v1h-1zM316 465h1v1h-1zM315 466h1v1h-1zM314 467h1v1h-1zM313 468h1v1h-1zM312 469h1v1h-1zM311 470h1v1h-1zM310 471h1v1h-1zM309 475h1v1h-1zM310 476h1v1h-1zM311 477h1v1h-1zM312 478h1v1h-1zM313 479h1v1h-1zM314 480h1v1h-1zM315 481h1v1h-1zM316 482h1v1h-1zM317 475h1v1h-1zM316 476h1v1h-1zM315 477h1v1h-1zM314 478h1v1h-1zM313 479h1v1h-1zM312 480h1v1h-1zM311 481h1v1h-1zM310 482h1v1h-1zM309 484h1v1h-1zM310 485h1v1h-1zM311 486h1v1h-1zM312 487h1v1h-1zM313 488h1v1h-1zM314 489h1v1h-1zM315 490h1v1h-1zM316 491h1v1h-1zM317 484h1v1h-1zM316 485h1v1h-1zM315 486h1v1h-1zM314 487h1v1h-1zM313 488h1v1h-1zM312 489h1v1h-1zM311 490h1v1h-1zM310 491h1v1h-1zM309 495h1v1h-1zM310 496h1v1h-1zM311 497h1v1h-1zM312 498h1v1h-1zM313 499h1v1h-1zM314 500h1v1h-1zM315 501h1v1h-1zM316 502h1v1h-1zM317 495h1v1h-1zM316 496h1v1h-1zM315 497h1v1h-1zM314 498h1v1h-1zM313 499h1v1h-1zM312 500h1v1h-1zM311 501h1v1h-1zM310 502h1v1h-1zM309 504h1v1h-1zM310 505h1v1h-1zM311 506h1v1h-1zM312 507h1v1h-1zM313 508h1v1h-1zM314 509h1v1h-1zM315 510h1v1h-1zM316 511h1v1h-1zM317 504h1v1h-1zM316 505h1v1h-1zM315 506h1v1h-1zM314 507h1v1h-1zM313 508h1v1h-1zM312 509h1v1h-1zM311 510h1v1h-1zM310 511h1v1h-1zM309 515h1v1h-1zM310 516h1v1h-1zM311 517h1v1h-1zM312 518h1v1h-1zM313 519h1v1h-1zM314 520h1v1h-1zM315 521h1v1h-1zM316 522h1v1h-1zM317 515h1v1h-1zM316 516h1v1h-1zM315 517h1v1h-1zM314 518h1v1h-1zM313 519h1v1h-1zM312 520h1v1h-1zM311 521h1v1h-1zM310 522h1v1h-1zM309 524h1v1h-1zM310 525h1v1h-1zM311 526h1v1h-1zM312 527h1v1h-1zM313 528h1v1h-1zM314 529h1v1h-1zM315 530h1v1h-1zM316 531h1v1h-1zM317 524h1v1h-1zM316 525h1v1h-1zM315 526h1v1h-1zM314 527h1v1h-1zM313 528h1v1h-1zM312 529h1v1h-1zM311 530h1v1h-1zM310 531h1v1h-1zM309 535h1v1h-1zM310 536h1v1h-1zM311 537h1v1h-1zM312 538h1v1h-1zM313 539h1v1h-1zM314 540h1v1h-1zM315 541h1v1h-1zM316 542h1v1h-1zM317 535h1v1h-1zM316 536h1v1h-1zM315 537h1v1h-1zM314 538h1v1h-1zM313 539h1v1h-1zM312 540h1v1h-1zM311 541h1v1h-1zM310 542h1v1h-1zM309 544h1v1h-1zM310 545h1v1h-1zM311 546h1v1h-1zM312 547h1v1h-1zM313 548h1v1h-1zM314 549h1v1h-1zM315 550h1v1h-1zM316 551h1v1h-1zM317 544h1v1h-1zM316 545h1v1h-1zM315 546h1v1h-1zM314 547h1v1h-1zM313 548h1v1h-1zM312 549h1v1h-1zM311 550h1v1h-1zM310 551h1v1h-1zM329 284h1v1h-1zM330 285h1v1h-1zM331 286h1v1h-1zM332 287h1v1h-1zM333 288h1v1h-1zM334 289h1v1h-1zM335 290h1v1h-1zM336 291h1v1h-1zM337 284h1v1h-1zM336 285h1v1h-1zM335 286h1v1h-1zM334 287h1v1h-1zM333 288h1v1h-1zM332 289h1v1h-1zM331 290h1v1h-1zM330 291h1v1h-1zM329 295h1v1h-1zM330 296h1v1h-1zM331 297h1v1h-1zM332 298h1v1h-1zM333 299h1v1h-1zM334 300h1v1h-1zM335 301h1v1h-1zM336 302h1v1h-1zM337 295h1v1h-1zM336 296h1v1h-1zM335 297h1v1h-1zM334 298h1v1h-1zM333 299h1v1h-1zM332 300h1v1h-1zM331 301h1v1h-1zM330 302h1v1h-1zM329 304h1v1h-1zM330 305h1v1h-1zM331 306h1v1h-1zM332 307h1v1h-1zM333 308h1v1h-1zM334 309h1v1h-1zM335 310h1v1h-1zM336 311h1v1h-1zM337 304h1v1h-1zM336 305h1v1h-1zM335 306h1v1h-1zM334 307h1v1h-1zM333 308h1v1h-1zM332 309h1v1h-1zM331 310h1v1h-1zM330 311h1v1h-1zM329 315h1v1h-1zM330 316h1v1h-1zM331 317h1v1h-1zM332 318h1v1h-1zM333 319h1v1h-1zM334 320h1v1h-1zM335 321h1v1h-1zM336 322h1v1h-1zM337 315h1v1h-1zM336 316h1v1h-1zM335 317h1v1h-1zM334 318h1v1h-1zM333 319h1v1h-1zM332 320h1v1h-1zM331 321h1v1h-1zM330 322h1v1h-1zM329 324h1v1h-1zM330 325h1v1h-1zM331 326h1v1h-1zM332 327h1v1h-1zM333 328h1v1h-1zM334 329h1v1h-1zM335 330h1v1h-1zM336 331h1v1h-1zM337 324h1v1h-1zM336 325h1v1h-1zM335 326h1v1h-1zM334 327h1v1h-1zM333 328h1v1h-1zM332 329h1v1h-1zM331 330h1v1h-1zM330 331h1v1h-1zM329 335h1v1h-1zM330 336h1v1h-1zM331 337h1v1h-1zM332 338h1v1h-1zM333 339h1v1h-1zM334 340h1v1h-1zM335 341h1v1h-1zM336 342h1v1h-1zM337 335h1v1h-1zM336 336h1v1h-1zM335 337h1v1h-1zM334 338h1v1h-1zM333 339h1v1h-1zM332 340h1v1h-1zM331 341h1v1h-1zM330 342h1v1h-1zM329 344h1v1h-1zM330 345h1v1h-1zM331 346h1v1h-1zM332 347h1v1h-1zM333 348h1v1h-1zM334 349h1v1h-1zM335 350h1v1h-1zM336 351h1v1h-1zM337 344h1v1h-1zM336 345h1v1h-1zM335 346h1v1h-1zM334 347h1v1h-1zM333 348h1v1h-1zM332 349h1v1h-1zM331 350h1v1h-1zM330 351h1v1h-1zM329 355h1v1h-1zM330 356h1v1h-1zM331 357h1v1h-1zM332 358h1v1h-1zM333 359h1v1h-1zM334 360h1v1h-1zM335 361h1v1h-1zM336 362h1v1h-1zM337 355h1v1h-1zM336 356h1v1h-1zM335 357h1v1h-1zM334 358h1v1h-1zM333 359h1v1h-1zM332 360h1v1h-1zM331 361h1v1h-1zM330 362h1v1h-1zM329 364h1v1h-1zM330 365h1v1h-1zM331 366h1v1h-1zM332 367h1v1h-1zM333 368h1v1h-1zM334 369h1v1h-1zM335 370h1v1h-1zM336 371h1v1h-1zM337 364h1v1h-1zM336 365h1v1h-1zM335 366h1v1h-1zM334 367h1v1h-1zM333 368h1v1h-1zM332 369h1v1h-1zM331 370h1v1h-1zM330 371h1v1h-1zM329 375h1v1h-1zM330 376h1v1h-1zM331 377h1v1h-1zM332 378h1v1h-1zM333 379h1v1h-1zM334 380h1v1h-1zM335 381h1v1h-1zM336 382h1v1h-1zM337 375h1v1h-1zM336 376h1v1h-1zM335 377h1v1h-1zM334 378h1v1h-1zM333 379h1v1h-1zM332 380h1v1h-1zM331 381h1v1h-1zM330 382h1v1h-1zM329 384h1v1h-1zM330 385h1v1h-1zM331 386h1v1h-1zM332 387h1v1h-1zM333 388h1v1h-1zM334 389h1v1h-1zM335 390h1v1h-1zM336 391h1v1h-1zM337 384h1v1h-1zM336 385h1v1h-1zM335 386h1v1h-1zM334 387h1v1h-1zM333 388h1v1h-1zM332 389h1v1h-1zM331 390h1v1h-1zM330 391h1v1h-1zM329 395h1v1h-1zM330 396h1v1h-1zM331 397h1v1h-1zM332 398h1v1h-1zM333 399h1v1h-1zM334 400h1v1h-1zM335 401h1v1h-1zM336 402h1v1h-1zM337 395h1v1h-1zM336 396h1v1h-1zM335 397h1v1h-1zM334 398h1v1h-1zM333 399h1v1h-1zM332 400h1v1h-1zM331 401h1v1h-1zM330 402h1v1h-1zM329 404h1v1h-1zM330 405h1v1h-1zM331 406h1v1h-1zM332 407h1v1h-1zM333 408h1v1h-1zM334 409h1v1h-1zM335 410h1v1h-1zM336 411h1v1h-1zM337 404h1v1h-1zM336 405h1v1h-1zM335 406h1v1h-1zM334 407h1v1h-1zM333 408h1v1h-1zM332 409h1v1h-1zM331 410h1v1h-1zM330 411h1v1h-1zM329 415h1v1h-1zM330 416h1v1h-1zM331 417h1v1h-1zM332 418h1v1h-1zM333 419h1v1h-1zM334 420h1v1h-1zM335 421h1v1h-1zM336 422h1v1h-1zM337 415h1v1h-1zM336 416h1v1h-1zM335 417h1v1h-1zM334 418h1v1h-1zM333 419h1v1h-1zM332 420h1v1h-1zM331 421h1v1h-1zM330 422h1v1h-1zM349 284h1v1h-1zM350 285h1v1h-1zM351 286h1v1h-1zM352 287h1v1h-1zM353 288h1v1h-1zM354 289h1v1h-1zM355 290h1v1h-1zM356 291h1v1h-1zM357 284h1v1h-1zM356 285h1v1h-1zM355 286h1v1h-1zM354 287h1v1h-1zM353 288h1v1h-1zM352 289h1v1h-1zM351 290h1v1h-1zM350 291h1v1h-1zM349 295h1v1h-1zM350 296h1v1h-1zM351 297h1v1h-1zM352 298h1v1h-1zM353 299h1v1h-1zM354 300h1v1h-1zM355 301h1v1h-1zM356 302h1v1h-1zM357 295h1v1h-1zM356 296h1v1h-1zM355 297h1v1h-1zM354 298h1v1h-1zM353 299h1v1h-1zM352 300h1v1h-1zM351 301h1v1h-1zM350 302h1v1h-1zM349 304h1v1h-1zM350 305h1v1h-1zM351 306h1v1h-1zM352 307h1v1h-1zM353 308h1v1h-1zM354 309h1v1h-1zM355 310h1v1h-1zM356 311h1v1h-1zM357 304h1v1h-1zM356 305h1v1h-1zM355 306h1v1h-1zM354 307h1v1h-1zM353 308h1v1h-1zM352 309h1v1h-1zM351 310h1v1h-1zM350 311h1v1h-1zM349 315h1v1h-1zM350 316h1v1h-1zM351 317h1v1h-1zM352 318h1v1h-1zM353 319h1v1h-1zM354 320h1v1h-1zM355 321h1v1h-1zM356 322h1v1h-1zM357 315h1v1h-1zM356 316h1v1h-1zM355 317h1v1h-1zM354 318h1v1h-1zM353 319h1v1h-1zM352 320h1v1h-1zM351 321h1v1h-1zM350 322h1v1h-1zM369 264h1v1h-1zM370 265h1v1h-1zM371 266h1v1h-1zM372 267h1v1h-1zM373 268h1v1h-1zM374 269h1v1h-1zM375 270h1v1h-1zM376 271h1v1h-1zM377 264h1v1h-1zM376 265h1v1h-1zM375 266h1v1h-1zM374 267h1v1h-1zM373 268h1v1h-1zM372 269h1v1h-1zM371 270h1v1h-1zM370 271h1v1h-1zM369 275h1v1h-1zM370 276h1v1h-1zM371 277h1v1h-1zM372 278h1v1h-1zM373 279h1v1h-1zM374 280h1v1h-1zM375 281h1v1h-1zM376 282h1v1h-1zM377 275h1v1h-1zM376 276h1v1h-1zM375 277h1v1h-1zM374 278h1v1h-1zM373 279h1v1h-1zM372 280h1v1h-1zM371 281h1v1h-1zM370 282h1v1h-1zM369 284h1v1h-1zM370 285h1v1h-1zM371 286h1v1h-1zM372 287h1v1h-1zM373 288h1v1h-1zM374 289h1v1h-1zM375 290h1v1h-1zM376 291h1v1h-1zM377 284h1v1h-1zM376 285h1v1h-1zM375 286h1v1h-1zM374 287h1v1h-1zM373 288h1v1h-1zM372 289h1v1h-1zM371 290h1v1h-1zM370 291h1v1h-1zM369 295h1v1h-1zM370 296h1v1h-1zM371 297h1v1h-1zM372 298h1v1h-1zM373 299h1v1h-1zM374 300h1v1h-1zM375 301h1v1h-1zM376 302h1v1h-1zM377 295h1v1h-1zM376 296h1v1h-1zM375 297h1v1h-1zM374 298h1v1h-1zM373 299h1v1h-1zM372 300h1v1h-1zM371 301h1v1h-1zM370 302h1v1h-1zM369 304h1v1h-1zM370 305h1v1h-1zM371 306h1v1h-1zM372 307h1v1h-1zM373 308h1v1h-1zM374 309h1v1h-1zM375 310h1v1h-1zM376 311h1v1h-1zM377 304h1v1h-1zM376 305h1v1h-1zM375 306h1v1h-1zM374 307h1v1h-1zM373 308h1v1h-1zM372 309h1v1h-1zM371 310h1v1h-1zM370 311h1v1h-1zM389 264h1v1h-1zM390 265h1v1h-1zM391 266h1v1h-1zM392 267h1v1h-1zM393 268h1v1h-1zM394 269h1v1h-1zM395 270h1v1h-1zM396 271h1v1h-1zM397 264h1v1h-1zM396 265h1v1h-1zM395 266h1v1h-1zM394 267h1v1h-1zM393 268h1v1h-1zM392 269h1v1h-1zM391 270h1v1h-1zM390 271h1v1h-1zM389 275h1v1h-1zM390 276h1v1h-1zM391 277h1v1h-1zM392 278h1v1h-1zM393 279h1v1h-1zM394 280h1v1h-1zM395 281h1v1h-1zM396 282h1v1h-1zM397 275h1v1h-1zM396 276h1v1h-1zM395 277h1v1h-1zM394 278h1v1h-1zM393 279h1v1h-1zM392 280h1v1h-1zM391 281h1v1h-1zM390 282h1v1h-1zM409 284h1v1h-1zM410 285h1v1h-1zM411 286h1v1h-1zM412 287h1v1h-1zM413 288h1v1h-1zM414 289h1v1h-1zM415 290h1v1h-1zM416 291h1v1h-1zM417 284h1v1h-1zM416 285h1v1h-1zM415 286h1v1h-1zM414 287h1v1h-1zM413 288h1v1h-1zM412 289h1v1h-1zM411 290h1v1h-1zM410 291h1v1h-1zM409 295h1v1h-1zM410 296h1v1h-1zM411 297h1v1h-1zM412 298h1v1h-1zM413 299h1v1h-1zM414 300h1v1h-1zM415 301h1v1h-1zM416 302h1v1h-1zM417 295h1v1h-1zM416 296h1v1h-1zM415 297h1v1h-1zM414 298h1v1h-1zM413 299h1v1h-1zM412 300h1v1h-1zM411 301h1v1h-1zM410 302h1v1h-1zM409 304h1v1h-1zM410 305h1v1h-1zM411 306h1v1h-1zM412 307h1v1h-1zM413 308h1v1h-1zM414 309h1v1h-1zM415 310h1v1h-1zM416 311h1v1h-1zM417 304h1v1h-1zM416 305h1v1h-1zM415 306h1v1h-1zM414 307h1v1h-1zM413 308h1v1h-1zM412 309h1v1h-1zM411 310h1v1h-1zM410 311h1v1h-1zM429 344h1v1h-1zM430 345h1v1h-1zM431 346h1v1h-1zM432 347h1v1h-1zM433 348h1v1h-1zM434 349h1v1h-1zM435 350h1v1h-1zM436 351h1v1h-1zM437 344h1v1h-1zM436 345h1v1h-1zM435 346h1v1h-1zM434 347h1v1h-1zM433 348h1v1h-1zM432 349h1v1h-1zM431 350h1v1h-1zM430 351h1v1h-1zM429 355h1v1h-1zM430 356h1v1h-1zM431 357h1v1h-1zM432 358h1v1h-1zM433 359h1v1h-1zM434 360h1v1h-1zM435 361h1v1h-1zM436 362h1v1h-1zM437 355h1v1h-1zM436 356h1v1h-1zM435 357h1v1h-1zM434 358h1v1h-1zM433 359h1v1h-1zM432 360h1v1h-1zM431 361h1v1h-1zM430 362h1v1h-1zM429 364h1v1h-1zM430 365h1v1h-1zM431 366h1v1h-1zM432 367h1v1h-1zM433 368h1v1h-1zM434 369h1v1h-1zM435 370h1v1h-1zM436 371h1v1h-1zM437 364h1v1h-1zM436 365h1v1h-1zM435 366h1v1h-1zM434 367h1v1h-1zM433 368h1v1h-1zM432 369h1v1h-1zM431 370h1v1h-1zM430 371h1v1h-1zM429 375h1v1h-1zM430 376h1v1h-1zM431 377h1v1h-1zM432 378h1v1h-1zM433 379h1v1h-1zM434 380h1v1h-1zM435 381h1v1h-1zM436 382h1v1h-1zM437 375h1v1h-1zM436 376h1v1h-1zM435 377h1v1h-1zM434 378h1v1h-1zM433 379h1v1h-1zM432 380h1v1h-1zM431 381h1v1h-1zM430 382h1v1h-1zM429 384h1v1h-1zM430 385h1v1h-1zM431 386h1v1h-1zM432 387h1v1h-1zM433 388h1v1h-1zM434 389h1v1h-1zM435 390h1v1h-1zM436 391h1v1h-1zM437 384h1v1h-1zM436 385h1v1h-1zM435 386h1v1h-1zM434 387h1v1h-1zM433 388h1v1h-1zM432 389h1v1h-1zM431 390h1v1h-1zM430 391h1v1h-1zM449 355h1v1h-1zM450 356h1v1h-1zM451 357h1v1h-1zM452 358h1v1h-1zM453 359h1v1h-1zM454 360h1v1h-1zM455 361h1v1h-1zM456 362h1v1h-1zM457 355h1v1h-1zM456 356h1v1h-1zM455 357h1v1h-1zM454 358h1v1h-1zM453 359h1v1h-1zM452 360h1v1h-1zM451 361h1v1h-1zM450 362h1v1h-1zM449 364h1v1h-1zM450 365h1v1h-1zM451 366h1v1h-1zM452 367h1v1h-1zM453 368h1v1h-1zM454 369h1v1h-1zM455 370h1v1h-1zM456 371h1v1h-1zM457 364h1v1h-1zM456 365h1v1h-1zM455 366h1v1h-1zM454 367h1v1h-1zM453 368h1v1h-1zM452 369h1v1h-1zM451 370h1v1h-1zM450 371h1v1h-1zM449 375h1v1h-1zM450 376h1v1h-1zM451 377h1v1h-1zM452 378h1v1h-1zM453 379h1v1h-1zM454 380h1v1h-1zM455 381h1v1h-1zM456 382h1v1h-1zM457 375h1v1h-1zM456 376h1v1h-1zM455 377h1v1h-1zM454 378h1v1h-1zM453 379h1v1h-1zM452 380h1v1h-1zM451 381h1v1h-1zM450 382h1v1h-1zM469 424h1v1h-1zM470 425h1v1h-1zM471 426h1v1h-1zM472 427h1v1h-1zM473 428h1v1h-1zM474 429h1v1h-1zM475 430h1v1h-1zM476 431h1v1h-1zM477 424h1v1h-1zM476 425h1v1h-1zM475 426h1v1h-1zM474 427h1v1h-1zM473 428h1v1h-1zM472 429h1v1h-1zM471 430h1v1h-1zM470 431h1v1h-1zM469 435h1v1h-1zM470 436h1v1h-1zM471 437h1v1h-1zM472 438h1v1h-1zM473 439h1v1h-1zM474 440h1v1h-1zM475 441h1v1h-1zM476 442h1v1h-1zM477 435h1v1h-1zM476 436h1v1h-1zM475 437h1v1h-1zM474 438h1v1h-1zM473 439h1v1h-1zM472 440h1v1h-1zM471 441h1v1h-1zM470 442h1v1h-1zM469 444h1v1h-1zM470 445h1v1h-1zM471 446h1v1h-1zM472 447h1v1h-1zM473 448h1v1h-1zM474 449h1v1h-1zM475 450h1v1h-1zM476 451h1v1h-1zM477 444h1v1h-1zM476 445h1v1h-1zM475 446h1v1h-1zM474 447h1v1h-1zM473 448h1v1h-1zM472 449h1v1h-1zM471 450h1v1h-1zM470 451h1v1h-1zM469 455h1v1h-1zM470 456h1v1h-1zM471 457h1v1h-1zM472 458h1v1h-1zM473 459h1v1h-1zM474 460h1v1h-1zM475 461h1v1h-1zM476 462h1v1h-1zM477 455h1v1h-1zM476 456h1v1h-1zM475 457h1v1h-1zM474 458h1v1h-1zM473 459h1v1h-1zM472 460h1v1h-1zM471 461h1v1h-1zM470 462h1v1h-1zM469 464h1v1h-1zM470 465h1v1h-1zM471 466h1v1h-1zM472 467h1v1h-1zM473 468h1v1h-1zM474 469h1v1h-1zM475 470h1v1h-1zM476 471h1v1h-1zM477 464h1v1h-1zM476 465h1v1h-1zM475 466h1v1h-1zM474 467h1v1h-1zM473 468h1v1h-1zM472 469h1v1h-1zM471 470h1v1h-1zM470 471h1v1h-1zM469 475h1v1h-1zM470 476h1v1h-1zM471 477h1v1h-1zM472 478h1v1h-1zM473 479h1v1h-1zM474 480h1v1h-1zM475 481h1v1h-1zM476 482h1v1h-1zM477 475h1v1h-1zM476 476h1v1h-1zM475 477h1v1h-1zM474 478h1v1h-1zM473 479h1v1h-1zM472 480h1v1h-1zM471 481h1v1h-1zM470 482h1v1h-1zM469 484h1v1h-1zM470 485h1v1h-1zM471 486h1v1h-1zM472 487h1v1h-1zM473 488h1v1h-1zM474 489h1v1h-1zM475 490h1v1h-1zM476 491h1v1h-1zM477 484h1v1h-1zM476 485h1v1h-1zM475 486h1v1h-1zM474 487h1v1h-1zM473 488h1v1h-1zM472 489h1v1h-1zM471 490h1v1h-1zM470 491h1v1h-1zM469 495h1v1h-1zM470 496h1v1h-1zM471 497h1v1h-1zM472 498h1v1h-1zM473 499h1v1h-1zM474 500h1v1h-1zM475 501h1v1h-1zM476 502h1v1h-1zM477 495h1v1h-1zM476 496h1v1h-1zM475 497h1v1h-1zM474 498h1v1h-1zM473 499h1v1h-1zM472 500h1v1h-1zM471 501h1v1h-1zM470 502h1v1h-1zM489 415h1v1h-1zM490 416h1v1h-1zM491 417h1v1h-1zM492 418h1v1h-1zM493 419h1v1h-1zM494 420h1v1h-1zM495 421h1v1h-1zM496 422h1v1h-1zM497 415h1v1h-1zM496 416h1v1h-1zM495 417h1v1h-1zM494 418h1v1h-1zM493 419h1v1h-1zM492 420h1v1h-1zM491 421h1v1h-1zM490 422h1v1h-1zM489 435h1v1h-1zM490 436h1v1h-1zM491 437h1v1h-1zM492 438h1v1h-1zM493 439h1v1h-1zM494 440h1v1h-1zM495 441h1v1h-1zM496 442h1v1h-1zM497 435h1v1h-1zM496 436h1v1h-1zM495 437h1v1h-1zM494 438h1v1h-1zM493 439h1v1h-1zM492 440h1v1h-1zM491 441h1v1h-1zM490 442h1v1h-1zM489 444h1v1h-1zM490 445h1v1h-1zM491 446h1v1h-1zM492 447h1v1h-1zM493 448h1v1h-1zM494 449h1v1h-1zM495 450h1v1h-1zM496 451h1v1h-1zM497 444h1v1h-1zM496 445h1v1h-1zM495 446h1v1h-1zM494 447h1v1h-1zM493 448h1v1h-1zM492 449h1v1h-1zM491 450h1v1h-1zM490 451h1v1h-1zM489 455h1v1h-1zM490 456h1v1h-1zM491 457h1v1h-1zM492 458h1v1h-1zM493 459h1v1h-1zM494 460h1v1h-1zM495 461h1v1h-1zM496 462h1v1h-1zM497 455h1v1h-1zM496 456h1v1h-1zM495 457h1v1h-1zM494 458h1v1h-1zM493 459h1v1h-1zM492 460h1v1h-1zM491 461h1v1h-1zM490 462h1v1h-1zM509 335h1v1h-1zM510 336h1v1h-1zM511 337h1v1h-1zM512 338h1v1h-1zM513 339h1v1h-1zM514 340h1v1h-1zM515 341h1v1h-1zM516 342h1v1h-1zM517 335h1v1h-1zM516 336h1v1h-1zM515 337h1v1h-1zM514 338h1v1h-1zM513 339h1v1h-1zM512 340h1v1h-1zM511 341h1v1h-1zM510 342h1v1h-1zM509 344h1v1h-1zM510 345h1v1h-1zM511 346h1v1h-1zM512 347h1v1h-1zM513 348h1v1h-1zM514 349h1v1h-1zM515 350h1v1h-1zM516 351h1v1h-1zM517 344h1v1h-1zM516 345h1v1h-1zM515 346h1v1h-1zM514 347h1v1h-1zM513 348h1v1h-1zM512 349h1v1h-1zM511 350h1v1h-1zM510 351h1v1h-1zM509 355h1v1h-1zM510 356h1v1h-1zM511 357h1v1h-1zM512 358h1v1h-1zM513 359h1v1h-1zM514 360h1v1h-1zM515 361h1v1h-1zM516 362h1v1h-1zM517 355h1v1h-1zM516 356h1v1h-1zM515 357h1v1h-1zM514 358h1v1h-1zM513 359h1v1h-1zM512 360h1v1h-1zM511 361h1v1h-1zM510 362h1v1h-1zM509 375h1v1h-1zM510 376h1v1h-1zM511 377h1v1h-1zM512 378h1v1h-1zM513 379h1v1h-1zM514 380h1v1h-1zM515 381h1v1h-1zM516 382h1v1h-1zM517 375h1v1h-1zM516 376h1v1h-1zM515 377h1v1h-1zM514 378h1v1h-1zM513 379h1v1h-1zM512 380h1v1h-1zM511 381h1v1h-1zM510 382h1v1h-1zM509 384h1v1h-1zM510 385h1v1h-1zM511 386h1v1h-1zM512 387h1v1h-1zM513 388h1v1h-1zM514 389h1v1h-1zM515 390h1v1h-1zM516 391h1v1h-1zM517 384h1v1h-1zM516 385h1v1h-1zM515 386h1v1h-1zM514 387h1v1h-1zM513 388h1v1h-1zM512 389h1v1h-1zM511 390h1v1h-1zM510 391h1v1h-1zM509 395h1v1h-1zM510 396h1v1h-1zM511 397h1v1h-1zM512 398h1v1h-1zM513 399h1v1h-1zM514 400h1v1h-1zM515 401h1v1h-1zM516 402h1v1h-1zM517 395h1v1h-1zM516 396h1v1h-1zM515 397h1v1h-1zM514 398h1v1h-1zM513 399h1v1h-1zM512 400h1v1h-1zM511 401h1v1h-1zM510 402h1v1h-1zM509 415h1v1h-1zM510 416h1v1h-1zM511 417h1v1h-1zM512 418h1v1h-1zM513 419h1v1h-1zM514 420h1v1h-1zM515 421h1v1h-1zM516 422h1v1h-1zM517 415h1v1h-1zM516 416h1v1h-1zM515 417h1v1h-1zM514 418h1v1h-1zM513 419h1v1h-1zM512 420h1v1h-1zM511 421h1v1h-1zM510 422h1v1h-1zM509 424h1v1h-1zM510 425h1v1h-1zM511 426h1v1h-1zM512 427h1v1h-1zM513 428h1v1h-1zM514 429h1v1h-1zM515 430h1v1h-1zM516 431h1v1h-1zM517 424h1v1h-1zM516 425h1v1h-1zM515 426h1v1h-1zM514 427h1v1h-1zM513 428h1v1h-1zM512 429h1v1h-1zM511 430h1v1h-1zM510 431h1v1h-1zM509 435h1v1h-1zM510 436h1v1h-1zM511 437h1v1h-1zM512 438h1v1h-1zM513 439h1v1h-1zM514 440h1v1h-1zM515 441h1v1h-1zM516 442h1v1h-1zM517 435h1v1h-1zM516 436h1v1h-1zM515 437h1v1h-1zM514 438h1v1h-1zM513 439h1v1h-1zM512 440h1v1h-1zM511 441h1v1h-1zM510 442h1v1h-1zM529 264h1v1h-1zM530 265h1v1h-1zM531 266h1v1h-1zM532 267h1v1h-1zM533 268h1v1h-1zM534 269h1v1h-1zM535 270h1v1h-1zM536 271h1v1h-1zM537 264h1v1h-1zM536 265h1v1h-1zM535 266h1v1h-1zM534 267h1v1h-1zM533 268h1v1h-1zM532 269h1v1h-1zM531 270h1v1h-1zM530 271h1v1h-1zM529 275h1v1h-1zM530 276h1v1h-1zM531 277h1v1h-1zM532 278h1v1h-1zM533 279h1v1h-1zM534 280h1v1h-1zM535 281h1v1h-1zM536 282h1v1h-1zM537 275h1v1h-1zM536 276h1v1h-1zM535 277h1v1h-1zM534 278h1v1h-1zM533 279h1v1h-1zM532 280h1v1h-1zM531 281h1v1h-1zM530 282h1v1h-1zM529 284h1v1h-1zM530 285h1v1h-1zM531 286h1v1h-1zM532 287h1v1h-1zM533 288h1v1h-1zM534 289h1v1h-1zM535 290h1v1h-1zM536 291h1v1h-1zM537 284h1v1h-1zM536 285h1v1h-1zM535 286h1v1h-1zM534 287h1v1h-1zM533 288h1v1h-1zM532 289h1v1h-1zM531 290h1v1h-1zM530 291h1v1h-1zM529 295h1v1h-1zM530 296h1v1h-1zM531 297h1v1h-1zM532 298h1v1h-1zM533 299h1v1h-1zM534 300h1v1h-1zM535 301h1v1h-1zM536 302h1v1h-1zM537 295h1v1h-1zM536 296h1v1h-1zM535 297h1v1h-1zM534 298h1v1h-1zM533 299h1v1h-1zM532 300h1v1h-1zM531 301h1v1h-1zM530 302h1v1h-1zM529 304h1v1h-1zM530 305h1v1h-1zM531 306h1v1h-1zM532 307h1v1h-1zM533 308h1v1h-1zM534 309h1v1h-1zM535 310h1v1h-1zM536 311h1v1h-1zM537 304h1v1h-1zM536 305h1v1h-1zM535 306h1v1h-1zM534 307h1v1h-1zM533 308h1v1h-1zM532 309h1v1h-1zM531 310h1v1h-1zM530 311h1v1h-1zM529 315h1v1h-1zM530 316h1v1h-1zM531 317h1v1h-1zM532 318h1v1h-1zM533 319h1v1h-1zM534 320h1v1h-1zM535 321h1v1h-1zM536 322h1v1h-1zM537 315h1v1h-1zM536 316h1v1h-1zM535 317h1v1h-1zM534 318h1v1h-1zM533 319h1v1h-1zM532 320h1v1h-1zM531 321h1v1h-1zM530 322h1v1h-1zM529 335h1v1h-1zM530 336h1v1h-1zM531 337h1v1h-1zM532 338h1v1h-1zM533 339h1v1h-1zM534 340h1v1h-1zM535 341h1v1h-1zM536 342h1v1h-1zM537 335h1v1h-1zM536 336h1v1h-1zM535 337h1v1h-1zM534 338h1v1h-1zM533 339h1v1h-1zM532 340h1v1h-1zM531 341h1v1h-1zM530 342h1v1h-1zM529 344h1v1h-1zM530 345h1v1h-1zM531 346h1v1h-1zM532 347h1v1h-1zM533 348h1v1h-1zM534 349h1v1h-1zM535 350h1v1h-1zM536 351h1v1h-1zM537 344h1v1h-1zM536 345h1v1h-1zM535 346h1v1h-1zM534 347h1v1h-1zM533 348h1v1h-1zM532 349h1v1h-1zM531 350h1v1h-1zM530 351h1v1h-1zM529 355h1v1h-1zM530 356h1v1h-1zM531 357h1v1h-1zM532 358h1v1h-1zM533 359h1v1h-1zM534 360h1v1h-1zM535 361h1v1h-1zM536 362h1v1h-1zM537 355h1v1h-1zM536 356h1v1h-1zM535 357h1v1h-1zM534 358h1v1h-1zM533 359h1v1h-1zM532 360h1v1h-1zM531 361h1v1h-1zM530 362h1v1h-1zM529 364h1v1h-1zM530 365h1v1h-1zM531 366h1v1h-1zM532 367h1v1h-1zM533 368h1v1h-1zM534 369h1v1h-1zM535 370h1v1h-1zM536 371h1v1h-1zM537 364h1v1h-1zM536 365h1v1h-1zM535 366h1v1h-1zM534 367h1v1h-1zM533 368h1v1h-1zM532 369h1v1h-1zM531 370h1v1h-1zM530 371h1v1h-1zM529 375h1v1h-1zM530 376h1v1h-1zM531 377h1v1h-1zM532 378h1v1h-1zM533 379h1v1h-1zM534 380h1v1h-1zM535 381h1v1h-1zM536 382h1v1h-1zM537 375h1v1h-1zM536 376h1v1h-1zM535 377h1v1h-1zM534 378h1v1h-1zM533 379h1v1h-1zM532 380h1v1h-1zM531 381h1v1h-1zM530 382h1v1h-1zM529 384h1v1h-1zM530 385h1v1h-1zM531 386h1v1h-1zM532 387h1v1h-1zM533 388h1v1h-1zM534 389h1v1h-1zM535 390h1v1h-1zM536 391h1v1h-1zM537 384h1v1h-1zM536 385h1v1h-1zM535 386h1v1h-1zM534 387h1v1h-1zM533 388h1v1h-1zM532 389h1v1h-1zM531 390h1v1h-1zM530 391h1v1h-1zM549 184h1v1h-1zM550 185h1v1h-1zM551 186h1v1h-1zM552 187h1v1h-1zM553 188h1v1h-1zM554 189h1v1h-1zM555 190h1v1h-1zM556 191h1v1h-1zM557 184h1v1h-1zM556 185h1v1h-1zM555 186h1v1h-1zM554 187h1v1h-1zM553 188h1v1h-1zM552 189h1v1h-1zM551 190h1v1h-1zM550 191h1v1h-1zM549 195h1v1h-1zM550 196h1v1h-1zM551 197h1v1h-1zM552 198h1v1h-1zM553 199h1v1h-1zM554 200h1v1h-1zM555 201h1v1h-1zM556 202h1v1h-1zM557 195h1v1h-1zM556 196h1v1h-1zM555 197h1v1h-1zM554 198h1v1h-1zM553 199h1v1h-1zM552 200h1v1h-1zM551 201h1v1h-1zM550 202h1v1h-1zM549 204h1v1h-1zM550 205h1v1h-1zM551 206h1v1h-1zM552 207h1v1h-1zM553 208h1v1h-1zM554 209h1v1h-1zM555 210h1v1h-1zM556 211h1v1h-1zM557 204h1v1h-1zM556 205h1v1h-1zM555 206h1v1h-1zM554 207h1v1h-1zM553 208h1v1h-1zM552 209h1v1h-1zM551 210h1v1h-1zM550 211h1v1h-1zM549 215h1v1h-1zM550 216h1v1h-1zM551 217h1v1h-1zM552 218h1v1h-1zM553 219h1v1h-1zM554 220h1v1h-1zM555 221h1v1h-1zM556 222h1v1h-1zM557 215h1v1h-1zM556 216h1v1h-1zM555 217h1v1h-1zM554 218h1v1h-1zM553 219h1v1h-1zM552 220h1v1h-1zM551 221h1v1h-1zM550 222h1v1h-1zM549 224h1v1h-1zM550 225h1v1h-1zM551 226h1v1h-1zM552 227h1v1h-1zM553 228h1v1h-1zM554 229h1v1h-1zM555 230h1v1h-1zM556 231h1v1h-1zM557 224h1v1h-1zM556 225h1v1h-1zM555 226h1v1h-1zM554 227h1v1h-1zM553 228h1v1h-1zM552 229h1v1h-1zM551 230h1v1h-1zM550 231h1v1h-1zM549 235h1v1h-1zM550 236h1v1h-1zM551 237h1v1h-1zM552 238h1v1h-1zM553 239h1v1h-1zM554 240h1v1h-1zM555 241h1v1h-1zM556 242h1v1h-1zM557 235h1v1h-1zM556 236h1v1h-1zM555 237h1v1h-1zM554 238h1v1h-1zM553 239h1v1h-1zM552 240h1v1h-1zM551 241h1v1h-1zM550 242h1v1h-1zM549 255h1v1h-1zM550 256h1v1h-1zM551 257h1v1h-1zM552 258h1v1h-1zM553 259h1v1h-1zM554 260h1v1h-1zM555 261h1v1h-1zM556 262h1v1h-1zM557 255h1v1h-1zM556 256h1v1h-1zM555 257h1v1h-1zM554 258h1v1h-1zM553 259h1v1h-1zM552 260h1v1h-1zM551 261h1v1h-1zM550 262h1v1h-1zM549 264h1v1h-1zM550 265h1v1h-1zM551 266h1v1h-1zM552 267h1v1h-1zM553 268h1v1h-1zM554 269h1v1h-1zM555 270h1v1h-1zM556 271h1v1h-1zM557 264h1v1h-1zM556 265h1v1h-1zM555 266h1v1h-1zM554 267h1v1h-1zM553 268h1v1h-1zM552 269h1v1h-1zM551 270h1v1h-1zM550 271h1v1h-1zM549 275h1v1h-1zM550 276h1v1h-1zM551 277h1v1h-1zM552 278h1v1h-1zM553 279h1v1h-1zM554 280h1v1h-1zM555 281h1v1h-1zM556 282h1v1h-1zM557 275h1v1h-1zM556 276h1v1h-1zM555 277h1v1h-1zM554 278h1v1h-1zM553 279h1v1h-1zM552 280h1v1h-1zM551 281h1v1h-1zM550 282h1v1h-1zM549 284h1v1h-1zM550 285h1v1h-1zM551 286h1v1h-1zM552 287h1v1h-1zM553 288h1v1h-1zM554 289h1v1h-1zM555 290h1v1h-1zM556 291h1v1h-1zM557 284h1v1h-1zM556 285h1v1h-1zM555 286h1v1h-1zM554 287h1v1h-1zM553 288h1v1h-1zM552 289h1v1h-1zM551 290h1v1h-1zM550 291h1v1h-1zM569 164h1v1h-1zM570 165h1v1h-1zM571 166h1v1h-1zM572 167h1v1h-1zM573 168h1v1h-1zM574 169h1v1h-1zM575 170h1v1h-1zM576 171h1v1h-1zM577 164h1v1h-1zM576 165h1v1h-1zM575 166h1v1h-1zM574 167h1v1h-1zM573 168h1v1h-1zM572 169h1v1h-1zM571 170h1v1h-1zM570 171h1v1h-1zM569 175h1v1h-1zM570 176h1v1h-1zM571 177h1v1h-1zM572 178h1v1h-1zM573 179h1v1h-1zM574 180h1v1h-1zM575 181h1v1h-1zM576 182h1v1h-1zM577 175h1v1h-1zM576 176h1v1h-1zM575 177h1v1h-1zM574 178h1v1h-1zM573 179h1v1h-1zM572 180h1v1h-1zM571 181h1v1h-1zM570 182h1v1h-1zM569 184h1v1h-1zM570 185h1v1h-1zM571 186h1v1h-1zM572 187h1v1h-1zM573 188h1v1h-1zM574 189h1v1h-1zM575 190h1v1h-1zM576 191h1v1h-1zM577 184h1v1h-1zM576 185h1v1h-1zM575 186h1v1h-1zM574 187h1v1h-1zM573 188h1v1h-1zM572 189h1v1h-1zM571 190h1v1h-1zM570 191h1v1h-1zM569 195h1v1h-1zM570 196h1v1h-1zM571 197h1v1h-1zM572 198h1v1h-1zM573 199h1v1h-1zM574 200h1v1h-1zM575 201h1v1h-1zM576 202h1v1h-1zM577 195h1v1h-1zM576 196h1v1h-1zM575 197h1v1h-1zM574 198h1v1h-1zM573 199h1v1h-1zM572 200h1v1h-1zM571 201h1v1h-1zM570 202h1v1h-1zM569 204h1v1h-1zM570 205h1v1h-1zM571 206h1v1h-1zM572 207h1v1h-1zM573 208h1v1h-1zM574 209h1v1h-1zM575 210h1v1h-1zM576 211h1v1h-1zM577 204h1v1h-1zM576 205h1v1h-1zM575 206h1v1h-1zM574 207h1v1h-1zM573 208h1v1h-1zM572 209h1v1h-1zM571 210h1v1h-1zM570 211h1v1h-1z"/>
<path fill="#ff0000" d="M222 655h1v1h-1zM223 655h1v1h-1zM220 656h1v1h-1zM221 656h1v1h-1zM224 656h1v1h-1zM225 656h1v1h-1zM220 657h1v1h-1zM225 657h1v1h-1zM219 658h1v1h-1zM226 658h1v1h-1zM219 659h1v1h-1zM226 659h1v1h-1zM220 660h1v1h-1zM225 660h1v1h-1zM220 661h1v1h-1zM221 661h1v1h-1zM224 661h1v1h-1zM225 661h1v1h-1zM222 662h1v1h-1zM223 662h1v1h-1zM222 664h1v1h-1zM223 664h1v1h-1zM220 665h1v1h-1zM221 665h1v1h-1zM224 665h1v1h-1zM225 665h1v1h-1zM220 666h1v1h-1zM225 666h1v1h-1zM219 667h1v1h-1zM226 667h1v1h-1zM219 668h1v1h-1zM226 668h1v1h-1zM220 669h1v1h-1zM225 669h1v1h-1zM220 670h1v1h-1zM221 670h1v1h-1zM224 670h1v1h-1zM225 670h1v1h-1zM222 671h1v1h-1zM223 671h1v1h-1zM222 675h1v1h-1zM223 675h1v1h-1zM220 676h1v1h-1zM221 676h1v1h-1zM224 676h1v1h-1zM225 676h1v1h-1zM220 677h1v1h-1zM225 677h1v1h-1zM219 678h1v1h-1zM226 678h1v1h-1zM219 679h1v1h-1zM226 679h1v1h-1zM220 680h1v1h-1zM225 680h1v1h-1zM220 681h1v1h-1zM221 681h1v1h-1zM224 681h1v1h-1zM225 681h1v1h-1zM222 682h1v1h-1zM223 682h1v1h-1zM242 655h1v1h-1zM243 655h1v1h-1zM240 656h1v1h-1zM241 656h1v1h-1zM244 656h1v1h-1zM245 656h1v1h-1zM240 657h1v1h-1zM245 657h1v1h-1zM239 658h1v1h-1zM246 658h1v1h-1zM239 659h1v1h-1zM246 659h1v1h-1zM240 660h1v1h-1zM245 660h1v1h-1zM240 661h1v1h-1zM241 661h1v1h-1zM244 661h1v1h-1zM245 661h1v1h-1zM242 662h1v1h-1zM243 662h1v1h-1zM242 664h1v1h-1zM243 664h1v1h-1zM240 665h1v1h-1zM241 665h1v1h-1zM244 665h1v1h-1zM245 665h1v1h-1zM240 666h1v1h-1zM245 666h1v1h-1zM239 667h1v1h-1zM246 667h1v1h-1zM239 668h1v1h-1zM246 668h1v1h-1zM240 669h1v1h-1zM245 669h1v1h-1zM240 670h1v1h-1zM241 670h1v1h-1zM244 670h1v1h-1zM245 670h1v1h-1zM242 671h1v1h-1zM243 671h1v1h-1zM242 675h1v1h-1zM243 675h1v1h-1zM240 676h1v1h-1zM241 676h1v1h-1zM244 676h1v1h-1zM245 676h1v1h-1zM240 677h1v1h-1zM245 677h1v1h-1zM239 678h1v1h-1zM246 678h1v1h-1zM239 679h1v1h-1zM246 679h1v1h-1zM240 680h1v1h-1zM245 680h1v1h-1zM240 681h1v1h-1zM241 681h1v1h-1zM244 681h1v1h-1zM245 681h1v1h-1zM242 682h1v1h-1zM243 682h1v1h-1zM242 684h1v1h-1zM243 684h1v1h-1zM240 685h1v1h-1zM241 685h1v1h-1zM244 685h1v1h-1zM245 685h1v1h-1zM240 686h1v1h-1zM245 686h1v1h-1zM239 687h1v1h-1zM246 687h1v1h-1zM239 688h1v1h-1zM246 688h1v1h-1zM240 689h1v1h-1zM245 689h1v1h-1zM240 690h1v1h-1zM241 690h1v1h-1zM244 690h1v1h-1zM245 690h1v1h-1zM242 691h1v1h-1zM243 691h1v1h-1zM262 584h1v1h-1zM263 584h1v1h-1zM260 585h1v1h-1zM261 585h1v1h-1zM264 585h1v1h-1zM265 585h1v1h-1zM260 586h1v1h-1zM265 586h1v1h-1zM259 587h1v1h-1zM266 587h1v1h-1zM259 588h1v1h-1zM266 588h1v1h-1zM260 589h1v1h-1zM265 589h1v1h-1zM260 590h1v1h-1zM261 590h1v1h-1zM264 590h1v1h-1zM265 590h1v1h-1zM262 591h1v1h-1zM263 591h1v1h-1zM262 595h1v1h-1zM263 595h1v1h-1zM260 596h1v1h-1zM261 596h1v1h-1zM264 596h1v1h-1zM265 596h1v1h-1zM260 597h1v1h-1zM265 597h1v1h-1zM259 598h1v1h-1zM266 598h1v1h-1zM259 599h1v1h-1zM266 599h1v1h-1zM260 600h1v1h-1zM265 600h1v1h-1zM260 601h1v1h-1zM261 601h1v1h-1zM264 601h1v1h-1zM265 601h1v1h-1zM262 602h1v1h-1zM263 602h1v1h-1zM262 604h1v1h-1zM263 604h1v1h-1zM260 605h1v1h-1zM261 605h1v1h-1zM264 605h1v1h-1zM265 605h1v1h-1zM260 606h1v1h-1zM265 606h1v1h-1zM259 607h1v1h-1zM266 607h1v1h-1zM259 608h1v1h-1zM266 608h1v1h-1zM260 609h1v1h-1zM265 609h1v1h-1zM260 610h1v1h-1zM261 610h1v1h-1zM264 610h1v1h-1zM265 610h1v1h-1zM262 611h1v1h-1zM263 611h1v1h-1zM262 615h1v1h-1zM263 615h1v1h-1zM260 616h1v1h-1zM261 616h1v1h-1zM264 616h1v1h-1zM265 616h1v1h-1zM260 617h1v1h-1zM265 617h1v1h-1zM259 618h1v1h-1zM266 618h1v1h-1zM259 619h1v1h-1zM266 619h1v1h-1zM260 620h1v1h-1zM265 620h1v1h-1zM260 621h1v1h-1zM261 621h1v1h-1zM264 621h1v1h-1zM265 621h1v1h-1zM262 622h1v1h-1zM263 622h1v1h-1zM262 624h1v1h-1zM263 624h1v1h-1zM260 625h1v1h-1zM261 625h1v1h-1zM264 625h1v1h-1zM265 625h1v1h-1zM260 626h1v1h-1zM265 626h1v1h-1zM259 627h1v1h-1zM266 627h1v1h-1zM259 628h1v1h-1zM266 628h1v1h-1zM260 629h1v1h-1zM265 629h1v1h-1zM260 630h1v1h-1zM261 630h1v1h-1zM264 630h1v1h-1zM265 630h1v1h-1zM262 631h1v1h-1zM263 631h1v1h-1zM262 635h1v1h-1zM263 635h1v1h-1zM260 636h1v1h-1zM261 636h1v1h-1zM264 636h1v1h-1zM265 636h1v1h-1zM260 637h1v1h-1zM265 637h1v1h-1zM259 638h1v1h-1zM266 638h1v1h-1zM259 639h1v1h-1zM266 639h1v1h-1zM260 640h1v1h-1zM265 640h1v1h-1zM260 641h1v1h-1zM261 641h1v1h-1zM264 641h1v1h-1zM265 641h1v1h-1zM262 642h1v1h-1zM263 642h1v1h-1zM282 604h1v1h-1zM283 604h1v1h-1zM280 605h1v1h-1zM281 605h1v1h-1zM284 605h1v1h-1zM285 605h1v1h-1zM280 606h1v1h-1zM285 606h1v1h-1zM279 607h1v1h-1zM286 607h1v1h-1zM279 608h1v1h-1zM286 608h1v1h-1zM280 609h1v1h-1zM285 609h1v1h-1zM280 610h1v1h-1zM281 610h1v1h-1zM284 610h1v1h-1zM285 610h1v1h-1zM282 611h1v1h-1zM283 611h1v1h-1zM282 615h1v1h-1zM283 615h1v1h-1zM280 616h1v1h-1zM281 616h1v1h-1zM284 616h1v1h-1zM285 616h1v1h-1zM280 617h1v1h-1zM285 617h1v1h-1zM279 618h1v1h-1zM286 618h1v1h-1zM279 619h1v1h-1zM286 619h1v1h-1zM280 620h1v1h-1zM285 620h1v1h-1zM280 621h1v1h-1zM281 621h1v1h-1zM284 621h1v1h-1zM285 621h1v1h-1zM282 622h1v1h-1zM283 622h1v1h-1zM282 624h1v1h-1zM283 624h1v1h-1zM280 625h1v1h-1zM281 625h1v1h-1zM284 625h1v1h-1zM285 625h1v1h-1zM280 626h1v1h-1zM285 626h1v1h-1zM279 627h1v1h-1zM286 627h1v1h-1zM279 628h1v1h-1zM286 628h1v1h-1zM280 629h1v1h-1zM285 629h1v1h-1zM280 630h1v1h-1zM281 630h1v1h-1zM284 630h1v1h-1zM285 630h1v1h-1zM282 631h1v1h-1zM283 631h1v1h-1zM282 635h1v1h-1zM283 635h1v1h-1zM280 636h1v1h-1zM281 636h1v1h-1zM284 636h1v1h-1zM285 636h1v1h-1zM280 637h1v1h-1zM285 637h1v1h-1zM279 638h1v1h-1zM286 638h1v1h-1zM279 639h1v1h-1zM286 639h1v1h-1zM280 640h1v1h-1zM285 640h1v1h-1zM280 641h1v1h-1zM281 641h1v1h-1zM284 641h1v1h-1zM285 641h1v1h-1zM282 642h1v1h-1zM283 642h1v1h-1zM282 644h1v1h-1zM283 644h1v1h-1zM280 645h1v1h-1zM281 645h1v1h-1zM284 645h1v1h-1zM285 645h1v1h-1zM280 646h1v1h-1zM285 646h1v1h-1zM279 647h1v1h-1zM286 647h1v1h-1zM279 648h1v1h-1zM286 648h1v1h-1zM280 649h1v1h-1zM285 649h1v1h-1zM280 650h1v1h-1zM281 650h1v1h-1zM284 650h1v1h-1zM285 650h1v1h-1zM282 651h1v1h-1zM283 651h1v1h-1zM302 535h1v1h-1zM303 535h1v1h-1zM300 536h1v1h-1zM301 536h1v1h-1zM304 536h1v1h-1zM305 536h1v1h-1zM300 537h1v1h-1zM305 537h1v1h-1zM299 538h1v1h-1zM306 538h1v1h-1zM299 539h1v1h-1zM306 539h1v1h-1zM300 540h1v1h-1zM305 540h1v1h-1zM300 541h1v1h-1zM301 541h1v1h-1zM304 541h1v1h-1zM305 541h1v1h-1zM302 542h1v1h-1zM303 542h1v1h-1zM302 544h1v1h-1zM303 544h1v1h-1zM300 545h1v1h-1zM301 545h1v1h-1zM304 545h1v1h-1zM305 545h1v1h-1zM300 546h1v1h-1zM305 546h1v1h-1zM299 547h1v1h-1zM306 547h1v1h-1zM299 548h1v1h-1zM306 548h1v1h-1zM300 549h1v1h-1zM305 549h1v1h-1zM300 550h1v1h-1zM301 550h1v1h-1zM304 550h1v1h-1zM305 550h1v1h-1zM302 551h1v1h-1zM303 551h1v1h-1zM302 555h1v1h-1zM303 555h1v1h-1zM300 556h1v1h-1zM301 556h1v1h-1zM304 556h1v1h-1zM305 556h1v1h-1zM300 557h1v1h-1zM305 557h1v1h-1zM299 558h1v1h-1zM306 558h1v1h-1zM299 559h1v1h-1zM306 559h1v1h-1zM300 560h1v1h-1zM305 560h1v1h-1zM300 561h1v1h-1zM301 561h1v1h-1zM304 561h1v1h-1zM305 561h1v1h-1zM302 562h1v1h-1zM303 562h1v1h-1zM322 375h1v1h-1zM323 375h1v1h-1zM320 376h1v1h-1zM321 376h1v1h-1zM324 376h1v1h-1zM325 376h1v1h-1zM320 377h1v1h-1zM325 377h1v1h-1zM319 378h1v1h-1zM326 378h1v1h-1zM319 379h1v1h-1zM326 379h1v1h-1zM320 380h1v1h-1zM325 380h1v1h-1zM320 381h1v1h-1zM321 381h1v1h-1zM324 381h1v1h-1zM325 381h1v1h-1zM322 382h1v1h-1zM323 382h1v1h-1zM322 384h1v1h-1zM323 384h1v1h-1zM320 385h1v1h-1zM321 385h1v1h-1zM324 385h1v1h-1zM325 385h1v1h-1zM320 386h1v1h-1zM325 386h1v1h-1zM319 387h1v1h-1zM326 387h1v1h-1zM319 388h1v1h-1zM326 388h1v1h-1zM320 389h1v1h-1zM325 389h1v1h-1zM320 390h1v1h-1zM321 390h1v1h-1zM324 390h1v1h-1zM325 390h1v1h-1zM322 391h1v1h-1zM323 391h1v1h-1zM322 395h1v1h-1zM323 395h1v1h-1zM320 396h1v1h-1zM321 396h1v1h-1zM324 396h1v1h-1zM325 396h1v1h-1zM320 397h1v1h-1zM325 397h1v1h-1zM319 398h1v1h-1zM326 398h1v1h-1zM319 399h1v1h-1zM326 399h1v1h-1zM320 400h1v1h-1zM325 400h1v1h-1zM320 401h1v1h-1zM321 401h1v1h-1zM324 401h1v1h-1zM325 401h1v1h-1zM322 402h1v1h-1zM323 402h1v1h-1zM322 404h1v1h-1zM323 404h1v1h-1zM320 405h1v1h-1zM321 405h1v1h-1zM324 405h1v1h-1zM325 405h1v1h-1zM320 406h1v1h-1zM325 406h1v1h-1zM319 407h1v1h-1zM326 407h1v1h-1zM319 408h1v1h-1zM326 408h1v1h-1zM320 409h1v1h-1zM325 409h1v1h-1zM320 410h1v1h-1zM321 410h1v1h-1zM324 410h1v1h-1zM325 410h1v1h-1zM322 411h1v1h-1zM323 411h1v1h-1zM322 415h1v1h-1zM323 415h1v1h-1zM320 416h1v1h-1zM321 416h1v1h-1zM324 416h1v1h-1zM325 416h1v1h-1zM320 417h1v1h-1zM325 417h1v1h-1zM319 418h1v1h-1zM326 418h1v1h-1zM319 419h1v1h-1zM326 419h1v1h-1zM320 420h1v1h-1zM325 420h1v1h-1zM320 421h1v1h-1zM321 421h1v1h-1zM324 421h1v1h-1zM325 421h1v1h-1zM322 422h1v1h-1zM323 422h1v1h-1zM322 424h1v1h-1zM323 424h1v1h-1zM320 425h1v1h-1zM321 425h1v1h-1zM324 425h1v1h-1zM325 425h1v1h-1zM320 426h1v1h-1zM325 426h1v1h-1zM319 427h1v1h-1zM326 427h1v1h-1zM319 428h1v1h-1zM326 428h1v1h-1zM320 429h1v1h-1zM325 429h1v1h-1zM320 430h1v1h-1zM321 430h1v1h-1zM324 430h1v1h-1zM325 430h1v1h-1zM322 431h1v1h-1zM323 431h1v1h-1zM322 435h1v1h-1zM323 435h1v1h-1zM320 436h1v1h-1zM321 436h1v1h-1zM324 436h1v1h-1zM325 436h1v1h-1zM320 437h1v1h-1zM325 437h1v1h-1zM319 438h1v1h-1zM326 438h1v1h-1zM319 439h1v1h-1zM326 439h1v1h-1zM320 440h1v1h-1zM325 440h1v1h-1zM320 441h1v1h-1zM321 441h1v1h-1zM324 441h1v1h-1zM325 441h1v1h-1zM322 442h1v1h-1zM323 442h1v1h-1zM342 295h1v1h-1zM343 295h1v1h-1zM340 296h1v1h-1zM341 296h1v1h-1zM344 296h1v1h-1zM345 296h1v1h-1zM340 297h1v1h-1zM345 297h1v1h-1zM339 298h1v1h-1zM346 298h1v1h-1zM339 299h1v1h-1zM346 299h1v1h-1zM340 300h1v1h-1zM345 300h1v1h-1zM340 301h1v1h-1zM341 301h1v1h-1zM344 301h1v1h-1zM345 301h1v1h-1zM342 302h1v1h-1zM343 302h1v1h-1zM342 304h1v1h-1zM343 304h1v1h-1zM340 305h1v1h-1zM341 305h1v1h-1zM344 305h1v1h-1zM345 305h1v1h-1zM340 306h1v1h-1zM345 306h1v1h-1zM339 307h1v1h-1zM346 307h1v1h-1zM339 308h1v1h-1zM346 308h1v1h-1zM340 309h1v1h-1zM345 309h1v1h-1zM340 310h1v1h-1zM341 310h1v1h-1zM344 310h1v1h-1zM345 310h1v1h-1zM342 311h1v1h-1zM343 311h1v1h-1zM342 315h1v1h-1zM343 315h1v1h-1zM340 316h1v1h-1zM341 316h1v1h-1zM344 316h1v1h-1zM345 316h1v1h-1zM340 317h1v1h-1zM345 317h1v1h-1zM339 318h1v1h-1zM346 318h1v1h-1zM339 319h1v1h-1zM346 319h1v1h-1zM340 320h1v1h-1zM345 320h1v1h-1zM340 321h1v1h-1zM341 321h1v1h-1zM344 321h1v1h-1zM345 321h1v1h-1zM342 322h1v1h-1zM343 322h1v1h-1zM342 324h1v1h-1zM343 324h1v1h-1zM340 325h1v1h-1zM341 325h1v1h-1zM344 325h1v1h-1zM345 325h1v1h-1zM340 326h1v1h-1zM345 326h1v1h-1zM339 327h1v1h-1zM346 327h1v1h-1zM339 328h1v1h-1zM346 328h1v1h-1zM340 329h1v1h-1zM345 329h1v1h-1zM340 330h1v1h-1zM341 330h1v1h-1zM344 330h1v1h-1zM345 330h1v1h-1zM342 331h1v1h-1zM343 331h1v1h-1zM342 335h1v1h-1zM343 335h1v1h-1zM340 336h1v1h-1zM341 336h1v1h-1zM344 336h1v1h-1zM345 336h1v1h-1zM340 337h1v1h-1zM345 337h1v1h-1zM339 338h1v1h-1zM346 338h1v1h-1zM339 339h1v1h-1zM346 339h1v1h-1zM340 340h1v1h-1zM345 340h1v1h-1zM340 341h1v1h-1zM341 341h1v1h-1zM344 341h1v1h-1zM345 341h1v1h-1zM342 342h1v1h-1zM343 342h1v1h-1zM362 295h1v1h-1zM363 295h1v1h-1zM360 296h1v1h-1zM361 296h1v1h-1zM364 296h1v1h-1zM365 296h1v1h-1zM360 297h1v1h-1zM365 297h1v1h-1zM359 298h1v1h-1zM366 298h1v1h-1zM359 299h1v1h-1zM366 299h1v1h-1zM360 300h1v1h-1zM365 300h1v1h-1zM360 301h1v1h-1zM361 301h1v1h-1zM364 301h1v1h-1zM365 301h1v1h-1zM362 302h1v1h-1zM363 302h1v1h-1zM362 304h1v1h-1zM363 304h1v1h-1zM360 305h1v1h-1zM361 305h1v1h-1zM364 305h1v1h-1zM365 305h1v1h-1zM360 306h1v1h-1zM365 306h1v1h-1zM359 307h1v1h-1zM366 307h1v1h-1zM359 308h1v1h-1zM366 308h1v1h-1zM360 309h1v1h-1zM365 309h1v1h-1zM360 310h1v1h-1zM361 310h1v1h-1zM364 310h1v1h-1zM365 310h1v1h-1zM362 311h1v1h-1zM363 311h1v1h-1zM362 315h1v1h-1zM363 315h1v1h-1zM360 316h1v1h-1zM361 316h1v1h-1zM364 316h1v1h-1zM365 316h1v1h-1zM360 317h1v1h-1zM365 317h1v1h-1zM359 318h1v1h-1zM366 318h1v1h-1zM359 319h1v1h-1zM366 319h1v1h-1zM360 320h1v1h-1zM365 320h1v1h-1zM360 321h1v1h-1zM361 321h1v1h-1zM364 321h1v1h-1zM365 321h1v1h-1zM362 322h1v1h-1zM363 322h1v1h-1zM382 275h1v1h-1zM383 275h1v1h-1zM380 276h1v1h-1zM381 276h1v1h-1zM384 276h1v1h-1zM385 276h1v1h-1zM380 277h1v1h-1zM385 277h1v1h-1zM379 278h1v1h-1zM386 278h1v1h-1zM379 279h1v1h-1zM386 279h1v1h-1zM380 280h1v1h-1zM385 280h1v1h-1zM380 281h1v1h-1zM381 281h1v1h-1zM384 281h1v1h-1zM385 281h1v1h-1zM382 282h1v1h-1zM383 282h1v1h-1zM382 284h1v1h-1zM383 284h1v1h-1zM380 285h1v1h-1zM381 285h1v1h-1zM384 285h1v1h-1zM385 285h1v1h-1zM380 286h1v1h-1zM385 286h1v1h-1zM379 287h1v1h-1zM386 287h1v1h-1zM379 288h1v1h-1zM386 288h1v1h-1zM380 289h1v1h-1zM385 289h1v1h-1zM380 290h1v1h-1zM381 290h1v1h-1zM384 290h1v1h-1zM385 290h1v1h-1zM382 291h1v1h-1zM383 291h1v1h-1zM382 295h1v1h-1zM383 295h1v1h-1zM380 296h1v1h-1zM381 296h1v1h-1zM384 296h1v1h-1zM385 296h1v1h-1zM380 297h1v1h-1zM385 297h1v1h-1zM379 298h1v1h-1zM386 298h1v1h-1zM379 299h1v1h-1zM386 299h1v1h-1zM380 300h1v1h-1zM385 300h1v1h-1zM380 301h1v1h-1zM381 301h1v1h-1zM384 301h1v1h-1zM385 301h1v1h-1zM382 302h1v1h-1zM383 302h1v1h-1zM402 275h1v1h-1zM403 275h1v1h-1zM400 276h1v1h-1zM401 276h1v1h-1zM404 276h1v1h-1zM405 276h1v1h-1zM400 277h1v1h-1zM405 277h1v1h-1zM399 278h1v1h-1zM406 278h1v1h-1zM399 279h1v1h-1zM406 279h1v1h-1zM400 280h1v1h-1zM405 280h1v1h-1zM400 281h1v1h-1zM401 281h1v1h-1zM404 281h1v1h-1zM405 281h1v1h-1zM402 282h1v1h-1zM403 282h1v1h-1zM402 284h1v1h-1zM403 284h1v1h-1zM400 285h1v1h-1zM401 285h1v1h-1zM404 285h1v1h-1zM405 285h1v1h-1zM400 286h1v1h-1zM405 286h1v1h-1zM399 287h1v1h-1zM406 287h1v1h-1zM399 288h1v1h-1zM406 288h1v1h-1zM400 289h1v1h-1zM405 289h1v1h-1zM400 290h1v1h-1zM401 290h1v1h-1zM404 290h1v1h-1zM405 290h1v1h-1zM402 291h1v1h-1zM403 291h1v1h-1zM402 295h1v1h-1zM403 295h1v1h-1zM400 296h1v1h-1zM401 296h1v1h-1zM404 296h1v1h-1zM405 296h1v1h-1zM400 297h1v1h-1zM405 297h1v1h-1zM399 298h1v1h-1zM406 298h1v1h-1zM399 299h1v1h-1zM406 299h1v1h-1zM400 300h1v1h-1zM405 300h1v1h-1zM400 301h1v1h-1zM401 301h1v1h-1zM404 301h1v1h-1zM405 301h1v1h-1zM402 302h1v1h-1zM403 302h1v1h-1zM402 315h1v1h-1zM403 315h1v1h-1zM400 316h1v1h-1zM401 316h1v1h-1zM404 316h1v1h-1zM405 316h1v1h-1zM400 317h1v1h-1zM405 317h1v1h-1zM399 318h1v1h-1zM406 318h1v1h-1zM399 319h1v1h-1zM406 319h1v1h-1zM400 320h1v1h-1zM405 320h1v1h-1zM400 321h1v1h-1zM401 321h1v1h-1zM404 321h1v1h-1zM405 321h1v1h-1zM402 322h1v1h-1zM403 322h1v1h-1zM422 295h1v1h-1zM423 295h1v1h-1zM420 296h1v1h-1zM421 296h1v1h-1zM424 296h1v1h-1zM425 296h1v1h-1zM420 297h1v1h-1zM425 297h1v1h-1zM419 298h1v1h-1zM426 298h1v1h-1zM419 299h1v1h-1zM426 299h1v1h-1zM420 300h1v1h-1zM425 300h1v1h-1zM420 301h1v1h-1zM421 301h1v1h-1zM424 301h1v1h-1zM425 301h1v1h-1zM422 302h1v1h-1zM423 302h1v1h-1zM422 304h1v1h-1zM423 304h1v1h-1zM420 305h1v1h-1zM421 305h1v1h-1zM424 305h1v1h-1zM425 305h1v1h-1zM420 306h1v1h-1zM425 306h1v1h-1zM419 307h1v1h-1zM426 307h1v1h-1zM419 308h1v1h-1zM426 308h1v1h-1zM420 309h1v1h-1zM425 309h1v1h-1zM420 310h1v1h-1zM421 310h1v1h-1zM424 310h1v1h-1zM425 310h1v1h-1zM422 311h1v1h-1zM423 311h1v1h-1zM422 315h1v1h-1zM423 315h1v1h-1zM420 316h1v1h-1zM421 316h1v1h-1zM424 316h1v1h-1zM425 316h1v1h-1zM420 317h1v1h-1zM425 317h1v1h-1zM419 318h1v1h-1zM426 318h1v1h-1zM419 319h1v1h-1zM426 319h1v1h-1zM420 320h1v1h-1zM425 320h1v1h-1zM420 321h1v1h-1zM421 321h1v1h-1zM424 321h1v1h-1zM425 321h1v1h-1zM422 322h1v1h-1zM423 322h1v1h-1zM422 324h1v1h-1zM423 324h1v1h-1zM420 325h1v1h-1zM421 325h1v1h-1zM424 325h1v1h-1zM425 325h1v1h-1zM420 326h1v1h-1zM425 326h1v1h-1zM419 327h1v1h-1zM426 327h1v1h-1zM419 328h1v1h-1zM426 328h1v1h-1zM420 329h1v1h-1zM425 329h1v1h-1zM420 330h1v1h-1zM421 330h1v1h-1zM424 330h1v1h-1zM425 330h1v1h-1zM422 331h1v1h-1zM423 331h1v1h-1zM422 335h1v1h-1zM423 335h1v1h-1zM420 336h1v1h-1zM421 336h1v1h-1zM424 336h1v1h-1zM425 336h1v1h-1zM420 337h1v1h-1zM425 337h1v1h-1zM419 338h1v1h-1zM426 338h1v1h-1zM419 339h1v1h-1zM426 339h1v1h-1zM420 340h1v1h-1zM425 340h1v1h-1zM420 341h1v1h-1zM421 341h1v1h-1zM424 341h1v1h-1zM425 341h1v1h-1zM422 342h1v1h-1zM423 342h1v1h-1zM422 344h1v1h-1zM423 344h1v1h-1zM420 345h1v1h-1zM421 345h1v1h-1zM424 345h1v1h-1zM425 345h1v1h-1zM420 346h1v1h-1zM425 346h1v1h-1zM419 347h1v1h-1zM426 347h1v1h-1zM419 348h1v1h-1zM426 348h1v1h-1zM420 349h1v1h-1zM425 349h1v1h-1zM420 350h1v1h-1zM421 350h1v1h-1zM424 350h1v1h-1zM425 350h1v1h-1zM422 351h1v1h-1zM423 351h1v1h-1zM422 355h1v1h-1zM423 355h1v1h-1zM420 356h1v1h-1zM421 356h1v1h-1zM424 356h1v1h-1zM425 356h1v1h-1zM420 357h1v1h-1zM425 357h1v1h-1zM419 358h1v1h-1zM426 358h1v1h-1zM419 359h1v1h-1zM426 359h1v1h-1zM420 360h1v1h-1zM425 360h1v1h-1zM420 361h1v1h-1zM421 361h1v1h-1zM424 361h1v1h-1zM425 361h1v1h-1zM422 362h1v1h-1zM423 362h1v1h-1zM422 364h1v1h-1zM423 364h1v1h-1zM420 365h1v1h-1zM421 365h1v1h-1zM424 365h1v1h-1zM425 365h1v1h-1zM420 366h1v1h-1zM425 366h1v1h-1zM419 367h1v1h-1zM426 367h1v1h-1zM419 368h1v1h-1zM426 368h1v1h-1zM420 369h1v1h-1zM425 369h1v1h-1zM420 370h1v1h-1zM421 370h1v1h-1zM424 370h1v1h-1zM425 370h1v1h-1zM422 371h1v1h-1zM423 371h1v1h-1zM422 375h1v1h-1zM423 375h1v1h-1zM420 376h1v1h-1zM421 376h1v1h-1zM424 376h1v1h-1zM425 376h1v1h-1zM420 377h1v1h-1zM425 377h1v1h-1zM419 378h1v1h-1zM426 378h1v1h-1zM419 379h1v1h-1zM426 379h1v1h-1zM420 380h1v1h-1zM425 380h1v1h-1zM420 381h1v1h-1zM421 381h1v1h-1zM424 381h1v1h-1zM425 381h1v1h-1zM422 382h1v1h-1zM423 382h1v1h-1zM422 384h1v1h-1zM423 384h1v1h-1zM420 385h1v1h-1zM421 385h1v1h-1zM424 385h1v1h-1zM425 385h1v1h-1zM420 386h1v1h-1zM425 386h1v1h-1zM419 387h1v1h-1zM426 387h1v1h-1zM419 388h1v1h-1zM426 388h1v1h-1zM420 389h1v1h-1zM425 389h1v1h-1zM420 390h1v1h-1zM421 390h1v1h-1zM424 390h1v1h-1zM425 390h1v1h-1zM422 391h1v1h-1zM423 391h1v1h-1zM422 395h1v1h-1zM423 395h1v1h-1zM420 396h1v1h-1zM421 396h1v1h-1zM424 396h1v1h-1zM425 396h1v1h-1zM420 397h1v1h-1zM425 397h1v1h-1zM419 398h1v1h-1zM426 398h1v1h-1zM419 399h1v1h-1zM426 399h1v1h-1zM420 400h1v1h-1zM425 400h1v1h-1zM420 401h1v1h-1zM421 401h1v1h-1zM424 401h1v1h-1zM425 401h1v1h-1zM422 402h1v1h-1zM423 402h1v1h-1zM442 355h1v1h-1zM443 355h1v1h-1zM440 356h1v1h-1zM441 356h1v1h-1zM444 356h1v1h-1zM445 356h1v1h-1zM440 357h1v1h-1zM445 357h1v1h-1zM439 358h1v1h-1zM446 358h1v1h-1zM439 359h1v1h-1zM446 359h1v1h-1zM440 360h1v1h-1zM445 360h1v1h-1zM440 361h1v1h-1zM441 361h1v1h-1zM444 361h1v1h-1zM445 361h1v1h-1zM442 362h1v1h-1zM443 362h1v1h-1zM442 364h1v1h-1zM443 364h1v1h-1zM440 365h1v1h-1zM441 365h1v1h-1zM444 365h1v1h-1zM445 365h1v1h-1zM440 366h1v1h-1zM445 366h1v1h-1zM439 367h1v1h-1zM446 367h1v1h-1zM439 368h1v1h-1zM446 368h1v1h-1zM440 369h1v1h-1zM445 369h1v1h-1zM440 370h1v1h-1zM441 370h1v1h-1zM444 370h1v1h-1zM445 370h1v1h-1zM442 371h1v1h-1zM443 371h1v1h-1zM442 375h1v1h-1zM443 375h1v1h-1zM440 376h1v1h-1zM441 376h1v1h-1zM444 376h1v1h-1zM445 376h1v1h-1zM440 377h1v1h-1zM445 377h1v1h-1zM439 378h1v1h-1zM446 378h1v1h-1zM439 379h1v1h-1zM446 379h1v1h-1zM440 380h1v1h-1zM445 380h1v1h-1zM440 381h1v1h-1zM441 381h1v1h-1zM444 381h1v1h-1zM445 381h1v1h-1zM442 382h1v1h-1zM443 382h1v1h-1zM442 384h1v1h-1zM443 384h1v1h-1zM440 385h1v1h-1zM441 385h1v1h-1zM444 385h1v1h-1zM445 385h1v1h-1zM440 386h1v1h-1zM445 386h1v1h-1zM439 387h1v1h-1zM446 387h1v1h-1zM439 388h1v1h-1zM446 388h1v1h-1zM440 389h1v1h-1zM445 389h1v1h-1zM440 390h1v1h-1zM441 390h1v1h-1zM444 390h1v1h-1zM445 390h1v1h-1zM442 391h1v1h-1zM443 391h1v1h-1zM462 364h1v1h-1zM463 364h1v1h-1zM460 365h1v1h-1zM461 365h1v1h-1zM464 365h1v1h-1zM465 365h1v1h-1zM460 366h1v1h-1zM465 366h1v1h-1zM459 367h1v1h-1zM466 367h1v1h-1zM459 368h1v1h-1zM466 368h1v1h-1zM460 369h1v1h-1zM465 369h1v1h-1zM460 370h1v1h-1zM461 370h1v1h-1zM464 370h1v1h-1zM465 370h1v1h-1zM462 371h1v1h-1zM463 371h1v1h-1zM462 375h1v1h-1zM463 375h1v1h-1zM460 376h1v1h-1zM461 376h1v1h-1zM464 376h1v1h-1zM465 376h1v1h-1zM460 377h1v1h-1zM465 377h1v1h-1zM459 378h1v1h-1zM466 378h1v1h-1zM459 379h1v1h-1zM466 379h1v1h-1zM460 380h1v1h-1zM465 380h1v1h-1zM460 381h1v1h-1zM461 381h1v1h-1zM464 381h1v1h-1zM465 381h1v1h-1zM462 382h1v1h-1zM463 382h1v1h-1zM462 384h1v1h-1zM463 384h1v1h-1zM460 385h1v1h-1zM461 385h1v1h-1zM464 385h1v1h-1zM465 385h1v1h-1zM460 386h1v1h-1zM465 386h1v1h-1zM459 387h1v1h-1zM466 387h1v1h-1zM459 388h1v1h-1zM466 388h1v1h-1zM460 389h1v1h-1zM465 389h1v1h-1zM460 390h1v1h-1zM461 390h1v1h-1zM464 390h1v1h-1zM465 390h1v1h-1zM462 391h1v1h-1zM463 391h1v1h-1zM462 395h1v1h-1zM463 395h1v1h-1zM460 396h1v1h-1zM461 396h1v1h-1zM464 396h1v1h-1zM465 396h1v1h-1zM460 397h1v1h-1zM465 397h1v1h-1zM459 398h1v1h-1zM466 398h1v1h-1zM459 399h1v1h-1zM466 399h1v1h-1zM460 400h1v1h-1zM465 400h1v1h-1zM460 401h1v1h-1zM461 401h1v1h-1zM464 401h1v1h-1zM465 401h1v1h-1zM462 402h1v1h-1zM463 402h1v1h-1zM462 415h1v1h-1zM463 415h1v1h-1zM460 416h1v1h-1zM461 416h1v1h-1zM464 416h1v1h-1zM465 416h1v1h-1zM460 417h1v1h-1zM465 417h1v1h-1zM459 418h1v1h-1zM466 418h1v1h-1zM459 419h1v1h-1zM466 419h1v1h-1zM460 420h1v1h-1zM465 420h1v1h-1zM460 421h1v1h-1zM461 421h1v1h-1zM464 421h1v1h-1zM465 421h1v1h-1zM462 422h1v1h-1zM463 422h1v1h-1zM462 424h1v1h-1zM463 424h1v1h-1zM460 425h1v1h-1zM461 425h1v1h-1zM464 425h1v1h-1zM465 425h1v1h-1zM460 426h1v1h-1zM465 426h1v1h-1zM459 427h1v1h-1zM466 427h1v1h-1zM459 428h1v1h-1zM466 428h1v1h-1zM460 429h1v1h-1zM465 429h1v1h-1zM460 430h1v1h-1zM461 430h1v1h-1zM464 430h1v1h-1zM465 430h1v1h-1zM462 431h1v1h-1zM463 431h1v1h-1zM462 435h1v1h-1zM463 435h1v1h-1zM460 436h1v1h-1zM461 436h1v1h-1zM464 436h1v1h-1zM465 436h1v1h-1zM460 437h1v1h-1zM465 437h1v1h-1zM459 438h1v1h-1zM466 438h1v1h-1zM459 439h1v1h-1zM466 439h1v1h-1zM460 440h1v1h-1zM465 440h1v1h-1zM460 441h1v1h-1zM461 441h1v1h-1zM464 441h1v1h-1zM465 441h1v1h-1zM462 442h1v1h-1zM463 442h1v1h-1zM462 444h1v1h-1zM463 444h1v1h-1zM460 445h1v1h-1zM461 445h1v1h-1zM464 445h1v1h-1zM465 445h1v1h-1zM460 446h1v1h-1zM465 446h1v1h-1zM459 447h1v1h-1zM466 447h1v1h-1zM459 448h1v1h-1zM466 448h1v1h-1zM460 449h1v1h-1zM465 449h1v1h-1zM460 450h1v1h-1zM461 450h1v1h-1zM464 450h1v1h-1zM465 450h1v1h-1zM462 451h1v1h-1zM463 451h1v1h-1zM462 455h1v1h-1zM463 455h1v1h-1zM460 456h1v1h-1zM461 456h1v1h-1zM464 456h1v1h-1zM465 456h1v1h-1zM460 457h1v1h-1zM465 457h1v1h-1zM459 458h1v1h-1zM466 458h1v1h-1zM459 459h1v1h-1zM466 459h1v1h-1zM460 460h1v1h-1zM465 460h1v1h-1zM460 461h1v1h-1zM461 461h1v1h-1zM464 461h1v1h-1zM465 461h1v1h-1zM462 462h1v1h-1zM463 462h1v1h-1zM462 464h1v1h-1zM463 464h1v1h-1zM460 465h1v1h-1zM461 465h1v1h-1zM464 465h1v1h-1zM465 465h1v1h-1zM460 466h1v1h-1zM465 466h1v1h-1zM459 467h1v1h-1zM466 467h1v1h-1zM459 468h1v1h-1zM466 468h1v1h-1zM460 469h1v1h-1zM465 469h1v1h-1zM460 470h1v1h-1zM461 470h1v1h-1zM464 470h1v1h-1zM465 470h1v1h-1zM462 471h1v1h-1zM463 471h1v1h-1zM462 475h1v1h-1zM463 475h1v1h-1zM460 476h1v1h-1zM461 476h1v1h-1zM464 476h1v1h-1zM465 476h1v1h-1zM460 477h1v1h-1zM465 477h1v1h-1zM459 478h1v1h-1zM466 478h1v1h-1zM459 479h1v1h-1zM466 479h1v1h-1zM460 480h1v1h-1zM465 480h1v1h-1zM460 481h1v1h-1zM461 481h1v1h-1zM464 481h1v1h-1zM465 481h1v1h-1zM462 482h1v1h-1zM463 482h1v1h-1zM462 484h1v1h-1zM463 484h1v1h-1zM460 485h1v1h-1zM461 485h1v1h-1zM464 485h1v1h-1zM465 485h1v1h-1zM460 486h1v1h-1zM465 486h1v1h-1zM459 487h1v1h-1zM466 487h1v1h-1zM459 488h1v1h-1zM466 488h1v1h-1zM460 489h1v1h-1zM465 489h1v1h-1zM460 490h1v1h-1zM461 490h1v1h-1zM464 490h1v1h-1zM465 490h1v1h-1zM462 491h1v1h-1zM463 491h1v1h-1zM462 495h1v1h-1zM463 495h1v1h-1zM460 496h1v1h-1zM461 496h1v1h-1zM464 496h1v1h-1zM465 496h1v1h-1zM460 497h1v1h-1zM465 497h1v1h-1zM459 498h1v1h-1zM466 498h1v1h-1zM459 499h1v1h-1zM466 499h1v1h-1zM460 500h1v1h-1zM465 500h1v1h-1zM460 501h1v1h-1zM461 501h1v1h-1zM464 501h1v1h-1zM465 501h1v1h-1zM462 502h1v1h-1zM463 502h1v1h-1zM462 504h1v1h-1zM463 504h1v1h-1zM460 505h1v1h-1zM461 505h1v1h-1zM464 505h1v1h-1zM465 505h1v1h-1zM460 506h1v1h-1zM465 506h1v1h-1zM459 507h1v1h-1zM466 507h1v1h-1zM459 508h1v1h-1zM466 508h1v1h-1zM460 509h1v1h-1zM465 509h1v1h-1zM460 510h1v1h-1zM461 510h1v1h-1zM464 510h1v1h-1zM465 510h1v1h-1zM462 511h1v1h-1zM463 511h1v1h-1zM482 435h1v1h-1zM483 435h1v1h-1zM480 436h1v1h-1zM481 436h1v1h-1zM484 436h1v1h-1zM485 436h1v1h-1zM480 437h1v1h-1zM485 437h1v1h-1zM479 438h1v1h-1zM486 438h1v1h-1zM479 439h1v1h-1zM486 439h1v1h-1zM480 440h1v1h-1zM485 440h1v1h-1zM480 441h1v1h-1zM481 441h1v1h-1zM484 441h1v1h-1zM485 441h1v1h-1zM482 442h1v1h-1zM483 442h1v1h-1zM482 444h1v1h-1zM483 444h1v1h-1zM480 445h1v1h-1zM481 445h1v1h-1zM484 445h1v1h-1zM485 445h1v1h-1zM480 446h1v1h-1zM485 446h1v1h-1zM479 447h1v1h-1zM486 447h1v1h-1zM479 448h1v1h-1zM486 448h1v1h-1zM480 449h1v1h-1zM485 449h1v1h-1zM480 450h1v1h-1zM481 450h1v1h-1zM484 450h1v1h-1zM485 450h1v1h-1zM482 451h1v1h-1zM483 451h1v1h-1zM482 455h1v1h-1zM483 455h1v1h-1zM480 456h1v1h-1zM481 456h1v1h-1zM484 456h1v1h-1zM485 456h1v1h-1zM480 457h1v1h-1zM485 457h1v1h-1zM479 458h1v1h-1zM486 458h1v1h-1zM479 459h1v1h-1zM486 459h1v1h-1zM480 460h1v1h-1zM485 460h1v1h-1zM480 461h1v1h-1zM481 461h1v1h-1zM484 461h1v1h-1zM485 461h1v1h-1zM482 462h1v1h-1zM483 462h1v1h-1zM482 464h1v1h-1zM483 464h1v1h-1zM480 465h1v1h-1zM481 465h1v1h-1zM484 465h1v1h-1zM485 465h1v1h-1zM480 466h1v1h-1zM485 466h1v1h-1zM479 467h1v1h-1zM486 467h1v1h-1zM479 468h1v1h-1zM486 468h1v1h-1zM480 469h1v1h-1zM485 469h1v1h-1zM480 470h1v1h-1zM481 470h1v1h-1zM484 470h1v1h-1zM485 470h1v1h-1zM482 471h1v1h-1zM483 471h1v1h-1zM502 424h1v1h-1zM503 424h1v1h-1zM500 425h1v1h-1zM501 425h1v1h-1zM504 425h1v1h-1zM505 425h1v1h-1zM500 426h1v1h-1zM505 426h1v1h-1zM499 427h1v1h-1zM506 427h1v1h-1zM499 428h1v1h-1zM506 428h1v1h-1zM500 429h1v1h-1zM505 429h1v1h-1zM500 430h1v1h-1zM501 430h1v1h-1zM504 430h1v1h-1zM505 430h1v1h-1zM502 431h1v1h-1zM503 431h1v1h-1zM502 435h1v1h-1zM503 435h1v1h-1zM500 436h1v1h-1zM501 436h1v1h-1zM504 436h1v1h-1zM505 436h1v1h-1zM500 437h1v1h-1zM505 437h1v1h-1zM499 438h1v1h-1zM506 438h1v1h-1zM499 439h1v1h-1zM506 439h1v1h-1zM500 440h1v1h-1zM505 440h1v1h-1zM500 441h1v1h-1zM501 441h1v1h-1zM504 441h1v1h-1zM505 441h1v1h-1zM502 442h1v1h-1zM503 442h1v1h-1zM502 444h1v1h-1zM503 444h1v1h-1zM500 445h1v1h-1zM501 445h1v1h-1zM504 445h1v1h-1zM505 445h1v1h-1zM500 446h1v1h-1zM505 446h1v1h-1zM499 447h1v1h-1zM506 447h1v1h-1zM499 448h1v1h-1zM506 448h1v1h-1zM500 449h1v1h-1zM505 449h1v1h-1zM500 450h1v1h-1zM501 450h1v1h-1zM504 450h1v1h-1zM505 450h1v1h-1zM502 451h1v1h-1zM503 451h1v1h-1zM522 344h1v1h-1zM523 344h1v1h-1zM520 345h1v1h-1zM521 345h1v1h-1zM524 345h1v1h-1zM525 345h1v1h-1zM520 346h1v1h-1zM525 346h1v1h-1zM519 347h1v1h-1zM526 347h1v1h-1zM519 348h1v1h-1zM526 348h1v1h-1zM520 349h1v1h-1zM525 349h1v1h-1zM520 350h1v1h-1zM521 350h1v1h-1zM524 350h1v1h-1zM525 350h1v1h-1zM522 351h1v1h-1zM523 351h1v1h-1zM522 355h1v1h-1zM523 355h1v1h-1zM520 356h1v1h-1zM521 356h1v1h-1zM524 356h1v1h-1zM525 356h1v1h-1zM520 357h1v1h-1zM525 357h1v1h-1zM519 358h1v1h-1zM526 358h1v1h-1zM519 359h1v1h-1zM526 359h1v1h-1zM520 360h1v1h-1zM525 360h1v1h-1zM520 361h1v1h-1zM521 361h1v1h-1zM524 361h1v1h-1zM525 361h1v1h-1zM522 362h1v1h-1zM523 362h1v1h-1zM522 364h1v1h-1zM523 364h1v1h-1zM520 365h1v1h-1zM521 365h1v1h-1zM524 365h1v1h-1zM525 365h1v1h-1zM520 366h1v1h-1zM525 366h1v1h-1zM519 367h1v1h-1zM526 367h1v1h-1zM519 368h1v1h-1zM526 368h1v1h-1zM520 369h1v1h-1zM525 369h1v1h-1zM520 370h1v1h-1zM521 370h1v1h-1zM524 370h1v1h-1zM525 370h1v1h-1zM522 371h1v1h-1zM523 371h1v1h-1zM522 375h1v1h-1zM523 375h1v1h-1zM520 376h1v1h-1zM521 376h1v1h-1zM524 376h1v1h-1zM525 376h1v1h-1zM520 377h1v1h-1zM525 377h1v1h-1zM519 378h1v1h-1zM526 378h1v1h-1zM519 379h1v1h-1zM526 379h1v1h-1zM520 380h1v1h-1zM525 380h1v1h-1zM520 381h1v1h-1zM521 381h1v1h-1zM524 381h1v1h-1zM525 381h1v1h-1zM522 382h1v1h-1zM523 382h1v1h-1zM522 384h1v1h-1zM523 384h1v1h-1zM520 385h1v1h-1zM521 385h1v1h-1zM524 385h1v1h-1zM525 385h1v1h-1zM520 386h1v1h-1zM525 386h1v1h-1zM519 387h1v1h-1zM526 387h1v1h-1zM519 388h1v1h-1zM526 388h1v1h-1zM520 389h1v1h-1zM525 389h1v1h-1zM520 390h1v1h-1zM521 390h1v1h-1zM524 390h1v1h-1zM525 390h1v1h-1zM522 391h1v1h-1zM523 391h1v1h-1zM522 395h1v1h-1zM523 395h1v1h-1zM520 396h1v1h-1zM521 396h1v1h-1zM524 396h1v1h-1zM525 396h1v1h-1zM520 397h1v1h-1zM525 397h1v1h-1zM519 398h1v1h-1zM526 398h1v1h-1zM519 399h1v1h-1zM526 399h1v1h-1zM520 400h1v1h-1zM525 400h1v1h-1zM520 401h1v1h-1zM521 401h1v1h-1zM524 401h1v1h-1zM525 401h1v1h-1zM522 402h1v1h-1zM523 402h1v1h-1zM542 275h1v1h-1zM543 275h1v1h-1zM540 276h1v1h-1zM541 276h1v1h-1zM544 276h1v1h-1zM545 276h1v1h-1zM540 277h1v1h-1zM545 277h1v1h-1zM539 278h1v1h-1zM546 278h1v1h-1zM539 279h1v1h-1zM546 279h1v1h-1zM540 280h1v1h-1zM545 280h1v1h-1zM540 281h1v1h-1zM541 281h1v1h-1zM544 281h1v1h-1zM545 281h1v1h-1zM542 282h1v1h-1zM543 282h1v1h-1zM542 284h1v1h-1zM543 284h1v1h-1zM540 285h1v1h-1zM541 285h1v1h-1zM544 285h1v1h-1zM545 285h1v1h-1zM540 286h1v1h-1zM545 286h1v1h-1zM539 287h1v1h-1zM546 287h1v1h-1zM539 288h1v1h-1zM546 288h1v1h-1zM540 289h1v1h-1zM545 289h1v1h-1zM540 290h1v1h-1zM541 290h1v1h-1zM544 290h1v1h-1zM545 290h1v1h-1zM542 291h1v1h-1zM543 291h1v1h-1zM542 295h1v1h-1zM543 295h1v1h-1zM540 296h1v1h-1zM541 296h1v1h-1zM544 296h1v1h-1zM545 296h1v1h-1zM540 297h1v1h-1zM545 297h1v1h-1zM539 298h1v1h-1zM546 298h1v1h-1zM539 299h1v1h-1zM546 299h1v1h-1zM540 300h1v1h-1zM545 300h1v1h-1zM540 301h1v1h-1zM541 301h1v1h-1zM544 301h1v1h-1zM545 301h1v1h-1zM542 302h1v1h-1zM543 302h1v1h-1zM562 204h1v1h-1zM563 204h1v1h-1zM560 205h1v1h-1zM561 205h1v1h-1zM564 205h1v1h-1zM565 205h1v1h-1zM560 206h1v1h-1zM565 206h1v1h-1zM559 207h1v1h-1zM566 207h1v1h-1zM559 208h1v1h-1zM566 208h1v1h-1zM560 209h1v1h-1zM565 209h1v1h-1zM560 210h1v1h-1zM561 210h1v1h-1zM564 210h1v1h-1zM565 210h1v1h-1zM562 211h1v1h-1zM563 211h1v1h-1zM562 215h1v1h-1zM563 215h1v1h-1zM560 216h1v1h-1zM561 216h1v1h-1zM564 216h1v1h-1zM565 216h1v1h-1zM560 217h1v1h-1zM565 217h1v1h-1zM559 218h1v1h-1zM566 218h1v1h-1zM559 219h1v1h-1zM566 219h1v1h-1zM560 220h1v1h-1zM565 220h1v1h-1zM560 221h1v1h-1zM561 221h1v1h-1zM564 221h1v1h-1zM565 221h1v1h-1zM562 222h1v1h-1zM563 222h1v1h-1z"/>
<path fill="#00c000" d="M582 175h1v1h-1zM583 175h1v1h-1zM580 176h1v1h-1zM581 176h1v1h-1zM584 176h1v1h-1zM585 176h1v1h-1zM580 177h1v1h-1zM585 177h1v1h-1zM579 178h1v1h-1zM586 178h1v1h-1zM579 179h1v1h-1zM586 179h1v1h-1zM580 180h1v1h-1zM585 180h1v1h-1zM580 181h1v1h-1zM581 181h1v1h-1zM584 181h1v1h-1zM585 181h1v1h-1zM582 182h1v1h-1zM583 182h1v1h-1zM582 184h1v1h-1zM583 184h1v1h-1zM580 185h1v1h-1zM581 185h1v1h-1zM584 185h1v1h-1zM585 185h1v1h-1zM580 186h1v1h-1zM585 186h1v1h-1zM579 187h1v1h-1zM586 187h1v1h-1zM579 188h1v1h-1zM586 188h1v1h-1zM580 189h1v1h-1zM585 189h1v1h-1zM580 190h1v1h-1zM581 190h1v1h-1zM584 190h1v1h-1zM585 190h1v1h-1zM582 191h1v1h-1zM583 191h1v1h-1zM582 195h1v1h-1zM583 195h1v1h-1zM580 196h1v1h-1zM581 196h1v1h-1zM584 196h1v1h-1zM585 196h1v1h-1zM580 197h1v1h-1zM585 197h1v1h-1zM579 198h1v1h-1zM586 198h1v1h-1zM579 199h1v1h-1zM586 199h1v1h-1zM580 200h1v1h-1zM585 200h1v1h-1zM580 201h1v1h-1zM581 201h1v1h-1zM584 201h1v1h-1zM585 201h1v1h-1zM582 202h1v1h-1zM583 202h1v1h-1z"/>
<path fill="#000" d="M509 404h1v1h-1zM510 405h1v1h-1zM511 406h1v1h-1zM512 407h1v1h-1zM513 408h1v1h-1zM514 409h1v1h-1zM515 410h1v1h-1zM516 411h1v1h-1zM517 404h1v1h-1zM516 405h1v1h-1zM515 406h1v1h-1zM514 407h1v1h-1zM513 408h1v1h-1zM512 409h1v1h-1zM511 410h1v1h-1zM510 411h1v1h-1z"/>
<path fill="#000" d="M212 686h1v1h-1zM213 686h1v1h-1zM214 686h1v1h-1zM211 687h1v1h-1zM215 687h1v1h-1zM211 688h1v1h-1zM215 688h1v1h-1zM253 585h1v1h-1zM252 586h1v1h-1zM254 586h1v1h-1zM252 587h1v1h-1zM254 587h1v1h-1zM251 588h1v1h-1zM255 588h1v1h-1zM251 589h1v1h-1zM252 589h1v1h-1zM253 589h1v1h-1zM254 589h1v1h-1zM255 589h1v1h-1zM251 590h1v1h-1zM255 590h1v1h-1zM250 591h1v1h-1zM256 591h1v1h-1zM292 536h1v1h-1zM293 536h1v1h-1zM294 536h1v1h-1zM291 537h1v1h-1zM295 537h1v1h-1zM291 538h1v1h-1zM291 539h1v1h-1zM291 540h1v1h-1zM291 541h1v1h-1zM295 541h1v1h-1zM292 542h1v1h-1zM293 542h1v1h-1zM294 542h1v1h-1zM291 636h1v1h-1zM292 636h1v1h-1zM293 636h1v1h-1zM294 636h1v1h-1zM291 637h1v1h-1zM295 637h1v1h-1zM291 638h1v1h-1zM295 638h1v1h-1zM291 639h1v1h-1zM292 639h1v1h-1zM293 639h1v1h-1zM294 639h1v1h-1zM291 640h1v1h-1zM295 640h1v1h-1zM291 641h1v1h-1zM295 641h1v1h-1zM291 642h1v1h-1zM292 642h1v1h-1zM293 642h1v1h-1zM294 642h1v1h-1zM314 406h1v1h-1zM313 407h1v1h-1zM314 407h1v1h-1zM314 408h1v1h-1zM314 409h1v1h-1zM314 410h1v1h-1zM314 411h1v1h-1zM314 412h1v1h-1zM332 426h1v1h-1zM333 426h1v1h-1zM334 426h1v1h-1zM331 427h1v1h-1zM335 427h1v1h-1zM335 428h1v1h-1zM334 429h1v1h-1zM333 430h1v1h-1zM332 431h1v1h-1zM331 432h1v1h-1zM332 432h1v1h-1zM333 432h1v1h-1zM334 432h1v1h-1zM335 432h1v1h-1zM352 326h1v1h-1zM353 326h1v1h-1zM354 326h1v1h-1zM351 327h1v1h-1zM355 327h1v1h-1zM355 328h1v1h-1zM353 329h1v1h-1zM354 329h1v1h-1zM355 330h1v1h-1zM351 331h1v1h-1zM355 331h1v1h-1zM352 332h1v1h-1zM353 332h1v1h-1zM354 332h1v1h-1zM394 286h1v1h-1zM393 287h1v1h-1zM394 287h1v1h-1zM392 288h1v1h-1zM394 288h1v1h-1zM391 289h1v1h-1zM394 289h1v1h-1zM391 290h1v1h-1zM392 290h1v1h-1zM393 290h1v1h-1zM394 290h1v1h-1zM395 290h1v1h-1zM394 291h1v1h-1zM394 292h1v1h-1zM401 306h1v1h-1zM402 306h1v1h-1zM403 306h1v1h-1zM404 306h1v1h-1zM405 306h1v1h-1zM401 307h1v1h-1zM401 308h1v1h-1zM402 308h1v1h-1zM403 308h1v1h-1zM404 308h1v1h-1zM405 309h1v1h-1zM405 310h1v1h-1zM401 311h1v1h-1zM405 311h1v1h-1zM402 312h1v1h-1zM403 312h1v1h-1zM404 312h1v1h-1zM463 406h1v1h-1zM464 406h1v1h-1zM462 407h1v1h-1zM461 408h1v1h-1zM461 409h1v1h-1zM462 409h1v1h-1zM463 409h1v1h-1zM464 409h1v1h-1zM461 410h1v1h-1zM465 410h1v1h-1zM461 411h1v1h-1zM465 411h1v1h-1zM462 412h1v1h-1zM463 412h1v1h-1zM464 412h1v1h-1zM491 426h1v1h-1zM492 426h1v1h-1zM493 426h1v1h-1zM494 426h1v1h-1zM495 426h1v1h-1zM495 427h1v1h-1zM494 428h1v1h-1zM494 429h1v1h-1zM493 430h1v1h-1zM493 431h1v1h-1zM493 432h1v1h-1zM512 366h1v1h-1zM513 366h1v1h-1zM514 366h1v1h-1zM511 367h1v1h-1zM515 367h1v1h-1zM511 368h1v1h-1zM515 368h1v1h-1zM512 369h1v1h-1zM513 369h1v1h-1zM514 369h1v1h-1zM511 370h1v1h-1zM515 370h1v1h-1zM511 371h1v1h-1zM515 371h1v1h-1zM512 372h1v1h-1zM513 372h1v1h-1zM514 372h1v1h-1zM532 326h1v1h-1zM533 326h1v1h-1zM534 326h1v1h-1zM531 327h1v1h-1zM535 327h1v1h-1zM531 328h1v1h-1zM535 328h1v1h-1zM532 329h1v1h-1zM533 329h1v1h-1zM534 329h1v1h-1zM535 329h1v1h-1zM535 330h1v1h-1zM534 331h1v1h-1zM532 332h1v1h-1zM533 332h1v1h-1zM553 245h1v1h-1zM552 246h1v1h-1zM554 246h1v1h-1zM552 247h1v1h-1zM554 247h1v1h-1zM551 248h1v1h-1zM555 248h1v1h-1zM551 249h1v1h-1zM552 249h1v1h-1zM553 249h1v1h-1zM554 249h1v1h-1zM555 249h1v1h-1zM551 250h1v1h-1zM555 250h1v1h-1zM550 251h1v1h-1zM556 251h1v1h-1zM561 196h1v1h-1zM562 196h1v1h-1zM563 196h1v1h-1zM564 196h1v1h-1zM561 197h1v1h-1zM565 197h1v1h-1zM561 198h1v1h-1zM565 198h1v1h-1zM561 199h1v1h-1zM562 199h1v1h-1zM563 199h1v1h-1zM564 199h1v1h-1zM561 200h1v1h-1zM565 200h1v1h-1zM561 201h1v1h-1zM565 201h1v1h-1zM561 202h1v1h-1zM562 202h1v1h-1zM563 202h1v1h-1zM564 202h1v1h-1z"/>
<rect x="368" y="262" width="171" height="2" fill="#000"/>
<path fill="#000" d="M351 483h1v1h-1zM278 233h1v1h-1zM434 346h1v1h-1zM304 645h1v1h-1zM560 342h1v1h-1zM333 550h1v1h-1zM371 424h1v1h-1zM380 402h1v1h-1zM346 498h1v1h-1zM548 367h1v1h-1zM564 330h1v1h-1zM395 372h1v1h-1zM457 356h1v1h-1zM576 304h1v1h-1zM509 412h1v1h-1zM407 355h1v1h-1zM588 278h1v1h-1zM350 486h1v1h-1zM309 634h1v1h-1zM338 530h1v1h-1zM471 376h1v1h-1zM479 389h1v1h-1zM442 349h1v1h-1zM325 578h1v1h-1zM363 443h1v1h-1zM313 622h1v1h-1zM280 683h1v1h-1zM404 322h1v1h-1zM559 345h1v1h-1zM475 373h1v1h-1zM581 293h1v1h-1zM494 386h1v1h-1zM355 466h1v1h-1zM329 566h1v1h-1zM539 385h1v1h-1zM295 662h1v1h-1zM497 388h1v1h-1zM342 514h1v1h-1zM391 379h1v1h-1zM255 217h1v1h-1zM405 323h1v1h-1zM274 230h1v1h-1zM505 410h1v1h-1zM359 454h1v1h-1zM516 410h1v1h-1zM497 406h1v1h-1zM368 432h1v1h-1zM563 333h1v1h-1zM572 311h1v1h-1zM308 637h1v1h-1zM367 296h1v1h-1zM386 309h1v1h-1zM334 546h1v1h-1zM457 360h1v1h-1zM362 446h1v1h-1zM347 494h1v1h-1zM460 362h1v1h-1zM321 594h1v1h-1zM479 375h1v1h-1zM297 246h1v1h-1zM312 625h1v1h-1zM368 297h1v1h-1zM419 333h1v1h-1zM384 394h1v1h-1zM256 217h1v1h-1zM543 378h1v1h-1zM552 359h1v1h-1zM555 352h1v1h-1zM580 296h1v1h-1zM535 392h1v1h-1zM291 669h1v1h-1zM441 348h1v1h-1zM259 219h1v1h-1zM512 399h1v1h-1zM330 270h1v1h-1zM381 306h1v1h-1zM349 283h1v1h-1zM351 482h1v1h-1zM501 408h1v1h-1zM289 241h1v1h-1zM341 517h1v1h-1zM493 404h1v1h-1zM571 314h1v1h-1zM367 435h1v1h-1zM311 256h1v1h-1zM382 307h1v1h-1zM474 381h1v1h-1zM304 644h1v1h-1zM345 505h1v1h-1zM560 341h1v1h-1zM333 549h1v1h-1zM371 423h1v1h-1zM344 280h1v1h-1zM380 401h1v1h-1zM252 215h1v1h-1zM320 597h1v1h-1zM395 371h1v1h-1zM478 387h1v1h-1zM576 303h1v1h-1zM456 359h1v1h-1zM531 399h1v1h-1zM350 485h1v1h-1zM324 585h1v1h-1zM374 415h1v1h-1zM511 411h1v1h-1zM337 533h1v1h-1zM547 370h1v1h-1zM303 647h1v1h-1zM559 344h1v1h-1zM399 364h1v1h-1zM329 565h1v1h-1zM379 404h1v1h-1zM354 469h1v1h-1zM328 569h1v1h-1zM316 613h1v1h-1zM326 267h1v1h-1zM575 306h1v1h-1zM587 280h1v1h-1zM358 457h1v1h-1zM346 501h1v1h-1zM288 240h1v1h-1zM307 253h1v1h-1zM336 536h1v1h-1zM400 319h1v1h-1zM543 377h1v1h-1zM471 370h1v1h-1zM340 277h1v1h-1zM299 654h1v1h-1zM311 628h1v1h-1zM558 347h1v1h-1zM340 524h1v1h-1zM493 385h1v1h-1zM362 292h1v1h-1zM433 343h1v1h-1zM251 214h1v1h-1zM452 356h1v1h-1zM270 227h1v1h-1zM422 343h1v1h-1zM390 381h1v1h-1zM315 616h1v1h-1zM571 313h1v1h-1zM363 293h1v1h-1zM303 251h1v1h-1zM357 460h1v1h-1zM366 438h1v1h-1zM307 639h1v1h-1zM345 504h1v1h-1zM411 351h1v1h-1zM325 266h1v1h-1zM396 317h1v1h-1zM265 224h1v1h-1zM415 330h1v1h-1zM332 552h1v1h-1zM488 400h1v1h-1zM370 426h1v1h-1zM542 380h1v1h-1zM298 657h1v1h-1zM554 354h1v1h-1zM310 631h1v1h-1zM508 396h1v1h-1zM377 303h1v1h-1zM287 675h1v1h-1zM394 374h1v1h-1zM531 398h1v1h-1zM285 238h1v1h-1zM324 584h1v1h-1zM489 401h1v1h-1zM349 488h1v1h-1zM323 588h1v1h-1zM470 369h1v1h-1zM314 619h1v1h-1zM570 316h1v1h-1zM582 290h1v1h-1zM547 369h1v1h-1zM303 646h1v1h-1zM341 520h1v1h-1zM526 404h1v1h-1zM282 681h1v1h-1zM331 555h1v1h-1zM518 409h1v1h-1zM328 568h1v1h-1zM538 387h1v1h-1zM369 429h1v1h-1zM294 664h1v1h-1zM575 305h1v1h-1zM358 456h1v1h-1zM459 359h1v1h-1zM385 391h1v1h-1zM348 491h1v1h-1zM527 404h1v1h-1zM519 409h1v1h-1zM279 684h1v1h-1zM361 448h1v1h-1zM352 479h1v1h-1zM311 627h1v1h-1zM558 346h1v1h-1zM340 523h1v1h-1zM398 366h1v1h-1zM414 329h1v1h-1zM579 298h1v1h-1zM485 380h1v1h-1zM378 406h1v1h-1zM504 393h1v1h-1zM481 391h1v1h-1zM327 571h1v1h-1zM290 671h1v1h-1zM534 394h1v1h-1zM315 615h1v1h-1zM414 347h1v1h-1zM549 364h1v1h-1zM447 353h1v1h-1zM466 366h1v1h-1zM284 237h1v1h-1zM357 459h1v1h-1zM506 411h1v1h-1zM243 208h1v1h-1zM366 437h1v1h-1zM319 603h1v1h-1zM344 507h1v1h-1zM428 339h1v1h-1zM246 210h1v1h-1zM499 390h1v1h-1zM317 261h1v1h-1zM336 274h1v1h-1zM542 379h1v1h-1zM298 656h1v1h-1zM409 353h1v1h-1zM489 382h1v1h-1zM310 630h1v1h-1zM394 373h1v1h-1zM429 340h1v1h-1zM247 211h1v1h-1zM298 247h1v1h-1zM448 353h1v1h-1zM336 539h1v1h-1zM440 349h1v1h-1zM406 356h1v1h-1zM349 487h1v1h-1zM323 587h1v1h-1zM314 618h1v1h-1zM391 313h1v1h-1zM410 326h1v1h-1zM570 315h1v1h-1zM481 377h1v1h-1zM299 248h1v1h-1zM502 409h1v1h-1zM514 411h1v1h-1zM353 475h1v1h-1zM365 440h1v1h-1zM503 392h1v1h-1zM321 263h1v1h-1zM392 314h1v1h-1zM261 221h1v1h-1zM411 327h1v1h-1zM302 649h1v1h-1zM546 372h1v1h-1zM328 567h1v1h-1zM354 287h1v1h-1zM373 300h1v1h-1zM322 591h1v1h-1zM444 351h1v1h-1zM436 347h1v1h-1zM530 400h1v1h-1zM459 358h1v1h-1zM574 308h1v1h-1zM480 390h1v1h-1zM586 282h1v1h-1zM406 324h1v1h-1zM429 344h1v1h-1zM352 478h1v1h-1zM454 355h1v1h-1zM389 384h1v1h-1zM557 349h1v1h-1zM339 526h1v1h-1zM534 393h1v1h-1zM327 570h1v1h-1zM290 670h1v1h-1zM537 389h1v1h-1zM293 666h1v1h-1zM432 345h1v1h-1zM377 409h1v1h-1zM447 352h1v1h-1zM518 403h1v1h-1zM331 558h1v1h-1zM356 462h1v1h-1zM306 641h1v1h-1zM480 376h1v1h-1zM344 506h1v1h-1zM458 357h1v1h-1zM326 574h1v1h-1zM450 353h1v1h-1zM541 382h1v1h-1zM350 284h1v1h-1zM566 326h1v1h-1zM369 297h1v1h-1zM553 356h1v1h-1zM578 300h1v1h-1zM335 542h1v1h-1zM533 396h1v1h-1zM289 673h1v1h-1zM323 586h1v1h-1zM451 354h1v1h-1zM314 617h1v1h-1zM443 350h1v1h-1zM312 257h1v1h-1zM462 363h1v1h-1zM280 234h1v1h-1zM331 270h1v1h-1zM402 321h1v1h-1zM317 610h1v1h-1zM343 510h1v1h-1zM494 404h1v1h-1zM569 318h1v1h-1zM401 362h1v1h-1zM365 439h1v1h-1zM404 358h1v1h-1zM424 336h1v1h-1zM242 207h1v1h-1zM495 387h1v1h-1zM313 258h1v1h-1zM364 294h1v1h-1zM332 271h1v1h-1zM302 648h1v1h-1zM393 376h1v1h-1zM546 371h1v1h-1zM495 405h1v1h-1zM517 402h1v1h-1zM275 231h1v1h-1zM425 337h1v1h-1zM294 244h1v1h-1zM322 590h1v1h-1zM365 295h1v1h-1zM565 329h1v1h-1zM574 307h1v1h-1zM387 310h1v1h-1zM276 232h1v1h-1zM327 268h1v1h-1zM477 374h1v1h-1zM490 402h1v1h-1zM420 334h1v1h-1zM257 218h1v1h-1zM352 477h1v1h-1zM364 442h1v1h-1zM420 343h1v1h-1zM373 420h1v1h-1zM545 374h1v1h-1zM278 686h1v1h-1zM389 383h1v1h-1zM525 405h1v1h-1zM281 682h1v1h-1zM557 348h1v1h-1zM339 525h1v1h-1zM585 285h1v1h-1zM377 408h1v1h-1zM330 562h1v1h-1zM318 606h1v1h-1zM413 349h1v1h-1zM416 345h1v1h-1zM573 310h1v1h-1zM297 659h1v1h-1zM309 633h1v1h-1zM338 529h1v1h-1zM479 388h1v1h-1zM376 412h1v1h-1zM513 399h1v1h-1zM461 361h1v1h-1zM469 374h1v1h-1zM510 412h1v1h-1zM541 381h1v1h-1zM388 386h1v1h-1zM313 621h1v1h-1zM335 541h1v1h-1zM533 395h1v1h-1zM289 672h1v1h-1zM581 292h1v1h-1zM383 307h1v1h-1zM423 343h1v1h-1zM454 358h1v1h-1zM317 609h1v1h-1zM483 394h1v1h-1zM569 317h1v1h-1zM284 679h1v1h-1zM476 373h1v1h-1zM345 280h1v1h-1zM359 453h1v1h-1zM416 331h1v1h-1zM368 431h1v1h-1zM435 344h1v1h-1zM253 215h1v1h-1zM424 344h1v1h-1zM308 636h1v1h-1zM438 346h1v1h-1zM334 545h1v1h-1zM509 397h1v1h-1zM378 304h1v1h-1zM517 410h1v1h-1zM346 281h1v1h-1zM322 589h1v1h-1zM356 465h1v1h-1zM286 239h1v1h-1zM540 384h1v1h-1zM384 393h1v1h-1zM321 593h1v1h-1zM312 624h1v1h-1zM552 358h1v1h-1zM529 402h1v1h-1zM490 383h1v1h-1zM439 347h1v1h-1zM308 254h1v1h-1zM379 305h1v1h-1zM248 212h1v1h-1zM398 318h1v1h-1zM458 360h1v1h-1zM521 407h1v1h-1zM568 321h1v1h-1zM580 295h1v1h-1zM301 651h1v1h-1zM351 481h1v1h-1zM325 581h1v1h-1zM401 320h1v1h-1zM341 278h1v1h-1zM491 384h1v1h-1zM309 255h1v1h-1zM360 291h1v1h-1zM551 360h1v1h-1zM367 434h1v1h-1zM343 513h1v1h-1zM453 357h1v1h-1zM271 228h1v1h-1zM290 241h1v1h-1zM361 292h1v1h-1zM333 548h1v1h-1zM585 284h1v1h-1zM330 561h1v1h-1zM536 391h1v1h-1zM383 396h1v1h-1zM323 265h1v1h-1zM465 367h1v1h-1zM297 658h1v1h-1zM350 484h1v1h-1zM347 497h1v1h-1zM556 351h1v1h-1zM376 411h1v1h-1zM408 354h1v1h-1zM544 376h1v1h-1zM388 385h1v1h-1zM313 620h1v1h-1zM512 411h1v1h-1zM584 287h1v1h-1zM329 564h1v1h-1zM317 608h1v1h-1zM379 403h1v1h-1zM316 612h1v1h-1zM426 344h1v1h-1zM397 317h1v1h-1zM468 368h1v1h-1zM403 360h1v1h-1zM296 661h1v1h-1zM346 500h1v1h-1zM320 600h1v1h-1zM392 378h1v1h-1zM359 290h1v1h-1zM334 544h1v1h-1zM430 341h1v1h-1zM564 332h1v1h-1zM449 354h1v1h-1zM267 225h1v1h-1zM540 383h1v1h-1zM460 360h1v1h-1zM312 623h1v1h-1zM276 688h1v1h-1zM338 532h1v1h-1zM427 344h1v1h-1zM568 320h1v1h-1zM300 249h1v1h-1zM580 294h1v1h-1zM319 262h1v1h-1zM351 480h1v1h-1zM325 580h1v1h-1zM363 445h1v1h-1zM322 264h1v1h-1zM472 370h1v1h-1zM523 406h1v1h-1zM262 222h1v1h-1zM412 328h1v1h-1zM281 235h1v1h-1zM464 366h1v1h-1zM355 468h1v1h-1zM292 668h1v1h-1zM434 343h1v1h-1zM505 394h1v1h-1zM374 301h1v1h-1zM354 472h1v1h-1zM307 638h1v1h-1zM345 503h1v1h-1zM342 516h1v1h-1zM282 236h1v1h-1zM482 392h1v1h-1zM551 361h1v1h-1zM563 335h1v1h-1zM536 390h1v1h-1zM467 367h1v1h-1zM383 395h1v1h-1zM486 380h1v1h-1zM304 251h1v1h-1zM375 302h1v1h-1zM244 209h1v1h-1zM266 224h1v1h-1zM300 653h1v1h-1zM337 275h1v1h-1zM324 583h1v1h-1zM356 288h1v1h-1zM321 596h1v1h-1zM427 339h1v1h-1zM245 210h1v1h-1zM347 496h1v1h-1zM375 414h1v1h-1zM433 346h1v1h-1zM387 388h1v1h-1zM341 519h1v1h-1zM584 286h1v1h-1zM329 563h1v1h-1zM316 611h1v1h-1zM560 343h1v1h-1zM333 551h1v1h-1zM403 359h1v1h-1zM296 660h1v1h-1zM358 455h1v1h-1zM467 371h1v1h-1zM346 499h1v1h-1zM320 599h1v1h-1zM564 331h1v1h-1zM437 348h1v1h-1zM588 279h1v1h-1zM374 417h1v1h-1zM471 377h1v1h-1zM340 522h1v1h-1zM337 535h1v1h-1zM398 365h1v1h-1zM567 323h1v1h-1zM363 444h1v1h-1zM579 297h1v1h-1zM378 405h1v1h-1zM452 354h1v1h-1zM393 314h1v1h-1zM333 272h1v1h-1zM315 614h1v1h-1zM504 410h1v1h-1zM292 667h1v1h-1zM539 386h1v1h-1zM295 663h1v1h-1zM355 287h1v1h-1zM357 458h1v1h-1zM426 338h1v1h-1zM295 245h1v1h-1zM445 351h1v1h-1zM314 258h1v1h-1zM319 602h1v1h-1zM385 309h1v1h-1zM342 515h1v1h-1zM345 502h1v1h-1zM354 471h1v1h-1zM366 436h1v1h-1zM391 380h1v1h-1zM563 334h1v1h-1zM572 312h1v1h-1zM388 311h1v1h-1zM407 324h1v1h-1zM478 375h1v1h-1zM296 246h1v1h-1zM507 411h1v1h-1zM499 407h1v1h-1zM382 398h1v1h-1zM415 346h1v1h-1zM456 356h1v1h-1zM336 538h1v1h-1zM500 390h1v1h-1zM318 261h1v1h-1zM389 312h1v1h-1zM258 219h1v1h-1zM408 325h1v1h-1zM277 232h1v1h-1zM440 348h1v1h-1zM348 283h1v1h-1zM324 582h1v1h-1zM362 447h1v1h-1zM500 408h1v1h-1zM508 412h1v1h-1zM555 353h1v1h-1zM351 285h1v1h-1zM501 391h1v1h-1zM370 298h1v1h-1zM441 349h1v1h-1zM310 256h1v1h-1zM375 413h1v1h-1zM353 474h1v1h-1zM387 387h1v1h-1zM410 352h1v1h-1zM341 518h1v1h-1zM463 364h1v1h-1zM482 377h1v1h-1zM403 322h1v1h-1zM503 409h1v1h-1zM240 206h1v1h-1zM583 289h1v1h-1zM466 369h1v1h-1zM474 382h1v1h-1zM515 401h1v1h-1zM283 680h1v1h-1zM286 676h1v1h-1zM515 410h1v1h-1zM332 554h1v1h-1zM467 370h1v1h-1zM320 598h1v1h-1zM370 428h1v1h-1zM418 343h1v1h-1zM374 416h1v1h-1zM386 390h1v1h-1zM349 490h1v1h-1zM340 521h1v1h-1zM337 534h1v1h-1zM567 322h1v1h-1zM485 396h1v1h-1zM455 355h1v1h-1zM402 361h1v1h-1zM331 557h1v1h-1zM354 470h1v1h-1zM319 601h1v1h-1zM550 363h1v1h-1zM306 640h1v1h-1zM397 368h1v1h-1zM562 337h1v1h-1zM587 281h1v1h-1zM459 361h1v1h-1zM382 397h1v1h-1zM348 493h1v1h-1zM336 537h1v1h-1zM566 325h1v1h-1zM421 334h1v1h-1zM492 385h1v1h-1zM511 398h1v1h-1zM329 269h1v1h-1zM421 343h1v1h-1zM578 299h1v1h-1zM269 227h1v1h-1zM299 655h1v1h-1zM361 450h1v1h-1zM492 403h1v1h-1zM311 629h1v1h-1zM514 400h1v1h-1zM462 362h1v1h-1zM470 375h1v1h-1zM272 229h1v1h-1zM422 335h1v1h-1zM291 242h1v1h-1zM473 371h1v1h-1zM473 380h1v1h-1zM353 473h1v1h-1zM327 573h1v1h-1zM390 382h1v1h-1zM384 308h1v1h-1zM549 366h1v1h-1zM393 375h1v1h-1zM324 266h1v1h-1zM474 372h1v1h-1zM292 243h1v1h-1zM484 395h1v1h-1zM466 368h1v1h-1zM561 340h1v1h-1zM583 288h1v1h-1zM357 461h1v1h-1zM381 400h1v1h-1zM496 387h1v1h-1zM436 345h1v1h-1zM254 216h1v1h-1zM344 509h1v1h-1zM273 229h1v1h-1zM565 328h1v1h-1zM332 553h1v1h-1zM496 405h1v1h-1zM577 302h1v1h-1zM370 427h1v1h-1zM326 577h1v1h-1zM347 282h1v1h-1zM366 295h1v1h-1zM554 355h1v1h-1zM437 346h1v1h-1zM306 253h1v1h-1zM310 632h1v1h-1zM352 476h1v1h-1zM328 268h1v1h-1zM349 489h1v1h-1zM399 319h1v1h-1zM268 226h1v1h-1zM364 441h1v1h-1zM373 419h1v1h-1zM278 685h1v1h-1zM386 389h1v1h-1zM491 402h1v1h-1zM545 373h1v1h-1zM582 291h1v1h-1zM377 407h1v1h-1zM318 605h1v1h-1zM413 348h1v1h-1zM331 556h1v1h-1zM573 309h1v1h-1zM538 388h1v1h-1zM369 430h1v1h-1zM294 665h1v1h-1zM550 362h1v1h-1zM397 367h1v1h-1zM562 336h1v1h-1zM385 392h1v1h-1zM348 492h1v1h-1zM469 373h1v1h-1zM566 324h1v1h-1zM477 386h1v1h-1zM250 213h1v1h-1zM335 540h1v1h-1zM361 449h1v1h-1zM305 643h1v1h-1zM483 393h1v1h-1zM343 279h1v1h-1zM339 528h1v1h-1zM473 379h1v1h-1zM327 572h1v1h-1zM487 381h1v1h-1zM305 252h1v1h-1zM455 358h1v1h-1zM506 394h1v1h-1zM549 365h1v1h-1zM395 316h1v1h-1zM561 339h1v1h-1zM487 399h1v1h-1zM405 357h1v1h-1zM381 399h1v1h-1zM417 331h1v1h-1zM356 464h1v1h-1zM488 382h1v1h-1zM357 289h1v1h-1zM507 395h1v1h-1zM344 508h1v1h-1zM425 344h1v1h-1zM565 327h1v1h-1zM577 301h1v1h-1zM529 401h1v1h-1zM285 678h1v1h-1zM510 397h1v1h-1zM326 576h1v1h-1zM532 397h1v1h-1zM450 355h1v1h-1zM360 452h1v1h-1zM418 332h1v1h-1zM287 239h1v1h-1zM469 368h1v1h-1zM358 290h1v1h-1zM301 650h1v1h-1zM513 411h1v1h-1zM400 363h1v1h-1zM380 305h1v1h-1zM249 212h1v1h-1zM431 341h1v1h-1zM320 263h1v1h-1zM451 356h1v1h-1zM339 276h1v1h-1zM502 392h1v1h-1zM373 418h1v1h-1zM522 407h1v1h-1zM343 512h1v1h-1zM342 278h1v1h-1zM413 329h1v1h-1zM432 342h1v1h-1zM330 560h1v1h-1zM318 604h1v1h-1zM468 372h1v1h-1zM435 347h1v1h-1zM476 385h1v1h-1zM394 315h1v1h-1zM302 250h1v1h-1zM322 592h1v1h-1zM372 422h1v1h-1zM417 344h1v1h-1zM428 344h1v1h-1zM556 350h1v1h-1zM396 370h1v1h-1zM264 223h1v1h-1zM586 283h1v1h-1zM376 410h1v1h-1zM544 375h1v1h-1zM277 687h1v1h-1zM431 345h1v1h-1zM305 642h1v1h-1zM317 607h1v1h-1zM412 350h1v1h-1zM339 527h1v1h-1zM371 425h1v1h-1zM376 302h1v1h-1zM561 338h1v1h-1zM548 368h1v1h-1zM487 398h1v1h-1zM392 377h1v1h-1zM288 674h1v1h-1zM449 353h1v1h-1zM356 463h1v1h-1zM338 275h1v1h-1zM409 326h1v1h-1zM309 635h1v1h-1zM338 531h1v1h-1zM568 319h1v1h-1zM285 677h1v1h-1zM326 575h1v1h-1zM360 451h1v1h-1zM371 299h1v1h-1zM390 312h1v1h-1zM442 350h1v1h-1zM461 363h1v1h-1zM279 234h1v1h-1zM325 579h1v1h-1zM553 357h1v1h-1zM464 365h1v1h-1zM335 543h1v1h-1zM483 378h1v1h-1zM301 249h1v1h-1zM352 285h1v1h-1zM372 300h1v1h-1zM241 207h1v1h-1zM423 336h1v1h-1zM260 220h1v1h-1zM355 467h1v1h-1zM472 378h1v1h-1zM475 383h1v1h-1zM343 511h1v1h-1zM453 355h1v1h-1zM524 406h1v1h-1zM263 222h1v1h-1zM516 402h1v1h-1zM334 273h1v1h-1zM484 379h1v1h-1zM353 286h1v1h-1zM330 559h1v1h-1zM293 244h1v1h-1zM368 433h1v1h-1zM476 384h1v1h-1zM446 352h1v1h-1zM315 259h1v1h-1zM465 365h1v1h-1zM283 236h1v1h-1zM334 547h1v1h-1zM438 348h1v1h-1zM430 344h1v1h-1zM486 397h1v1h-1zM528 403h1v1h-1zM372 421h1v1h-1zM520 408h1v1h-1zM300 652h1v1h-1zM347 495h1v1h-1zM321 595h1v1h-1zM312 626h1v1h-1zM498 389h1v1h-1zM316 260h1v1h-1zM396 369h1v1h-1zM335 273h1v1h-1zM439 349h1v1h-1zM419 343h1v1h-1zM498 407h1v1h-1z"/>
<path fill="#fff" d="M471 510h1v1h-1zM472 509h1v1h-1zM473 508h1v1h-1zM477 504h1v1h-1zM478 503h1v1h-1zM479 502h1v1h-1zM483 498h1v1h-1zM484 497h1v1h-1zM485 496h1v1h-1zM489 492h1v1h-1zM490 491h1v1h-1zM491 490h1v1h-1zM495 486h1v1h-1zM496 485h1v1h-1zM497 484h1v1h-1zM501 480h1v1h-1zM502 479h1v1h-1zM503 478h1v1h-1zM507 474h1v1h-1zM508 473h1v1h-1zM509 472h1v1h-1zM513 468h1v1h-1zM514 467h1v1h-1zM515 466h1v1h-1zM519 462h1v1h-1zM520 461h1v1h-1zM521 460h1v1h-1zM525 456h1v1h-1zM526 455h1v1h-1zM527 454h1v1h-1zM531 450h1v1h-1zM532 449h1v1h-1zM533 448h1v1h-1zM537 444h1v1h-1zM538 443h1v1h-1zM539 442h1v1h-1zM543 438h1v1h-1zM544 437h1v1h-1zM545 436h1v1h-1zM549 432h1v1h-1zM550 431h1v1h-1zM551 430h1v1h-1zM555 426h1v1h-1zM556 425h1v1h-1zM557 424h1v1h-1zM561 420h1v1h-1zM562 419h1v1h-1zM563 418h1v1h-1zM567 414h1v1h-1zM568 413h1v1h-1zM569 412h1v1h-1zM573 408h1v1h-1zM574 407h1v1h-1zM575 406h1v1h-1zM579 402h1v1h-1zM580 401h1v1h-1zM581 400h1v1h-1zM585 396h1v1h-1zM586 395h1v1h-1zM587 394h1v1h-1zM591 390h1v1h-1zM592 389h1v1h-1zM593 388h1v1h-1zM597 384h1v1h-1zM598 383h1v1h-1zM487 685h1v1h-1zM488 684h1v1h-1zM489 683h1v1h-1zM493 679h1v1h-1zM494 678h1v1h-1zM495 677h1v1h-1zM499 673h1v1h-1zM500 672h1v1h-1zM501 671h1v1h-1zM505 667h1v1h-1zM506 666h1v1h-1zM507 665h1v1h-1zM511 661h1v1h-1zM512 660h1v1h-1zM513 659h1v1h-1zM517 655h1v1h-1zM518 654h1v1h-1zM519 653h1v1h-1zM523 649h1v1h-1zM524 648h1v1h-1zM525 647h1v1h-1zM529 643h1v1h-1zM530 642h1v1h-1zM531 641h1v1h-1zM535 637h1v1h-1zM536 636h1v1h-1zM537 635h1v1h-1zM541 631h1v1h-1zM542 630h1v1h-1zM543 629h1v1h-1zM547 625h1v1h-1zM548 624h1v1h-1zM549 623h1v1h-1zM553 619h1v1h-1zM554 618h1v1h-1zM555 617h1v1h-1z"/>
<path fill="#000" d="M468 513h1v1h-1zM469 512h1v1h-1zM470 511h1v1h-1zM474 507h1v1h-1zM475 506h1v1h-1zM476 505h1v1h-1zM480 501h1v1h-1zM481 500h1v1h-1zM482 499h1v1h-1zM486 495h1v1h-1zM487 494h1v1h-1zM488 493h1v1h-1zM492 489h1v1h-1zM493 488h1v1h-1zM494 487h1v1h-1zM498 483h1v1h-1zM499 482h1v1h-1zM500 481h1v1h-1zM504 477h1v1h-1zM505 476h1v1h-1zM506 475h1v1h-1zM510 471h1v1h-1zM511 470h1v1h-1zM512 469h1v1h-1zM516 465h1v1h-1zM517 464h1v1h-1zM518 463h1v1h-1zM522 459h1v1h-1zM523 458h1v1h-1zM524 457h1v1h-1zM528 453h1v1h-1zM529 452h1v1h-1zM530 451h1v1h-1zM534 447h1v1h-1zM535 446h1v1h-1zM536 445h1v1h-1zM540 441h1v1h-1zM541 440h1v1h-1zM542 439h1v1h-1zM546 435h1v1h-1zM547 434h1v1h-1zM548 433h1v1h-1zM552 429h1v1h-1zM553 428h1v1h-1zM554 427h1v1h-1zM558 423h1v1h-1zM559 422h1v1h-1zM560 421h1v1h-1zM564 417h1v1h-1zM565 416h1v1h-1zM566 415h1v1h-1zM570 411h1v1h-1zM571 410h1v1h-1zM572 409h1v1h-1zM576 405h1v1h-1zM577 404h1v1h-1zM578 403h1v1h-1zM582 399h1v1h-1zM583 398h1v1h-1zM584 397h1v1h-1zM588 393h1v1h-1zM589 392h1v1h-1zM590 391h1v1h-1zM594 387h1v1h-1zM595 386h1v1h-1zM596 385h1v1h-1zM484 688h1v1h-1zM485 687h1v1h-1zM486 686h1v1h-1zM490 682h1v1h-1zM491 681h1v1h-1zM492 680h1v1h-1zM496 676h1v1h-1zM497 675h1v1h-1zM498 674h1v1h-1zM502 670h1v1h-1zM503 669h1v1h-1zM504 668h1v1h-1zM508 664h1v1h-1zM509 663h1v1h-1zM510 662h1v1h-1zM514 658h1v1h-1zM515 657h1v1h-1zM516 656h1v1h-1zM520 652h1v1h-1zM521 651h1v1h-1zM522 650h1v1h-1zM526 646h1v1h-1zM527 645h1v1h-1zM528 644h1v1h-1zM532 640h1v1h-1zM533 639h1v1h-1zM534 638h1v1h-1zM538 634h1v1h-1zM539 633h1v1h-1zM540 632h1v1h-1zM544 628h1v1h-1zM545 627h1v1h-1zM546 626h1v1h-1zM550 622h1v1h-1zM551 621h1v1h-1zM552 620h1v1h-1zM556 616h1v1h-1zM557 615h1v1h-1z"/>
</svg>
<div style="position:absolute;left:648px;top:143px;width:17px;height:546px;background:linear-gradient(to right,#f7f6ef 0,#f7f6ef 1px,#eeede5 1px,#eeede5 5px,#f7f5e8 5px,#f7f5e8 9px,#fdfdfb 9px,#fdfdfb 16px,#eeede5 16px);"></div>
<div style="position:absolute;left:649px;top:144px;width:16px;height:16px;box-sizing:border-box;border:1px solid #fff;border-radius:2px;background:linear-gradient(135deg,#dbe6fd 0%,#c4d5fc 50%,#b3c8f7 100%);box-shadow:0 1px 0 #8fb0ec"></div><svg style="position:absolute;left:0;top:0" width="787" height="764"><path d="M653.0 154.0L657.0 150.0L661.0 154.0" fill="none" stroke="#4d6185" stroke-width="2"/></svg>
<div style="position:absolute;left:649px;top:673px;width:16px;height:16px;box-sizing:border-box;border:1px solid #fff;border-radius:2px;background:linear-gradient(135deg,#dbe6fd 0%,#c4d5fc 50%,#b3c8f7 100%);box-shadow:0 1px 0 #8fb0ec"></div><svg style="position:absolute;left:0;top:0" width="787" height="764"><path d="M653.0 679.0L657.0 683.0L661.0 679.0" fill="none" stroke="#4d6185" stroke-width="2"/></svg>
<div style="position:absolute;left:649px;top:514px;width:16px;height:16px;box-sizing:border-box;border:1px solid #fff;border-radius:2px;background:linear-gradient(135deg,#dbe6fd,#bcd0fa);box-shadow:0 1px 0 #8fb0ec"></div><div style="position:absolute;left:653px;top:519px;width:8px;height:1px;background:#8faae6;"></div><div style="position:absolute;left:653px;top:521px;width:8px;height:1px;background:#8faae6;"></div><div style="position:absolute;left:653px;top:523px;width:8px;height:1px;background:#8faae6;"></div><div style="position:absolute;left:653px;top:525px;width:8px;height:1px;background:#8faae6;"></div>
<div style="position:absolute;left:68px;top:689px;width:580px;height:17px;background:linear-gradient(to bottom,#f7f6ef 0,#f7f6ef 1px,#eeede5 1px,#eeede5 5px,#f7f5e8 5px,#f7f5e8 9px,#fdfdfb 9px,#fdfdfb 16px,#eeede5 16px);"></div>
<div style="position:absolute;left:68px;top:690px;width:16px;height:16px;box-sizing:border-box;border:1px solid #fff;border-radius:2px;background:linear-gradient(135deg,#dbe6fd 0%,#c4d5fc 50%,#b3c8f7 100%);box-shadow:0 1px 0 #8fb0ec"></div><svg style="position:absolute;left:0;top:0" width="787" height="764"><path d="M78.0 694.0L74.0 698.0L78.0 702.0" fill="none" stroke="#4d6185" stroke-width="2"/></svg>
<div style="position:absolute;left:631px;top:690px;width:16px;height:16px;box-sizing:border-box;border:1px solid #fff;border-radius:2px;background:linear-gradient(135deg,#dbe6fd 0%,#c4d5fc 50%,#b3c8f7 100%);box-shadow:0 1px 0 #8fb0ec"></div><svg style="position:absolute;left:0;top:0" width="787" height="764"><path d="M637.0 694.0L641.0 698.0L637.0 702.0" fill="none" stroke="#4d6185" stroke-width="2"/></svg>
<div style="position:absolute;left:605px;top:690px;width:16px;height:15px;box-sizing:border-box;border:1px solid #fff;border-radius:2px;background:linear-gradient(135deg,#dbe6fd,#bcd0fa);box-shadow:0 1px 0 #8fb0ec"></div><div style="position:absolute;left:610px;top:695px;width:1px;height:6px;background:#8faae6;"></div><div style="position:absolute;left:612px;top:695px;width:1px;height:6px;background:#8faae6;"></div><div style="position:absolute;left:614px;top:695px;width:1px;height:6px;background:#8faae6;"></div><div style="position:absolute;left:616px;top:695px;width:1px;height:6px;background:#8faae6;"></div>
<div style="position:absolute;left:648px;top:689px;width:17px;height:17px;background:#ece9d8;"></div>
<div style="position:absolute;right:740.00px;top:274.69px;font-size:11px;line-height:11px;color:#000;font-weight:normal;white-space:nowrap;letter-spacing:-0.025px;">1,38</div>
<div style="position:absolute;right:740.00px;top:323.69px;font-size:11px;line-height:11px;color:#000;font-weight:normal;white-space:nowrap;letter-spacing:-0.025px;">1,31</div>
<div style="position:absolute;right:740.00px;top:374.69px;font-size:11px;line-height:11px;color:#000;font-weight:normal;white-space:nowrap;letter-spacing:-0.025px;">1,25</div>
<div style="position:absolute;right:740.00px;top:423.69px;font-size:11px;line-height:11px;color:#000;font-weight:normal;white-space:nowrap;letter-spacing:-0.025px;">1,19</div>
<div style="position:absolute;right:740.00px;top:474.69px;font-size:11px;line-height:11px;color:#000;font-weight:normal;white-space:nowrap;letter-spacing:-0.025px;">1,13</div>
<div style="position:absolute;right:740.00px;top:523.69px;font-size:11px;line-height:11px;color:#000;font-weight:normal;white-space:nowrap;letter-spacing:-0.025px;">1,07</div>
<div style="position:absolute;right:740.00px;top:574.69px;font-size:11px;line-height:11px;color:#000;font-weight:normal;white-space:nowrap;letter-spacing:-0.025px;">1,02</div>
<div style="position:absolute;left:20.00px;top:623.69px;font-size:11px;line-height:11px;color:#000;font-weight:normal;white-space:nowrap;letter-spacing:-0.025px;">0,972</div>
<div style="position:absolute;right:740.00px;top:674.69px;font-size:11px;line-height:11px;color:#000;font-weight:normal;white-space:nowrap;letter-spacing:-0.025px;">0,925</div>
<svg style="position:absolute;left:0;top:0" width="787" height="764" shape-rendering="crispEdges"><path fill="#808080" d="M50 284h12v1h-12zM50 333h12v1h-12zM50 384h12v1h-12zM50 433h12v1h-12zM50 484h12v1h-12zM50 533h12v1h-12zM50 584h12v1h-12zM50 633h12v1h-12zM50 684h12v1h-12z"/><path fill="#c0c0c0" d="M57 264h5v1h-5zM57 273h5v1h-5zM57 293h5v1h-5zM57 304h5v1h-5zM57 313h5v1h-5zM57 324h5v1h-5zM57 344h5v1h-5zM57 353h5v1h-5zM57 364h5v1h-5zM57 373h5v1h-5zM57 393h5v1h-5zM57 404h5v1h-5zM57 413h5v1h-5zM57 424h5v1h-5zM57 444h5v1h-5zM57 453h5v1h-5zM57 464h5v1h-5zM57 473h5v1h-5zM57 493h5v1h-5zM57 504h5v1h-5zM57 513h5v1h-5zM57 524h5v1h-5zM57 544h5v1h-5zM57 553h5v1h-5zM57 564h5v1h-5zM57 573h5v1h-5zM57 593h5v1h-5zM57 604h5v1h-5zM57 613h5v1h-5zM57 624h5v1h-5zM57 644h5v1h-5zM57 653h5v1h-5zM57 664h5v1h-5zM57 673h5v1h-5zM57 693h5v1h-5zM57 704h5v1h-5z"/></svg>
<svg style="position:absolute;left:0;top:0" width="787" height="764" shape-rendering="crispEdges"><path fill="#808080" d="M69 712h1v9h-1zM119 712h1v9h-1zM169 712h1v9h-1zM219 712h1v9h-1zM269 712h1v9h-1zM319 712h1v9h-1zM369 712h1v9h-1zM419 712h1v9h-1zM469 712h1v9h-1zM519 712h1v9h-1zM569 712h1v9h-1zM619 712h1v9h-1z"/><path fill="#c0c0c0" d="M79 712h1v5h-1zM89 712h1v5h-1zM99 712h1v5h-1zM109 712h1v5h-1zM129 712h1v5h-1zM139 712h1v5h-1zM149 712h1v5h-1zM159 712h1v5h-1zM179 712h1v5h-1zM189 712h1v5h-1zM199 712h1v5h-1zM209 712h1v5h-1zM229 712h1v5h-1zM239 712h1v5h-1zM249 712h1v5h-1zM259 712h1v5h-1zM279 712h1v5h-1zM289 712h1v5h-1zM299 712h1v5h-1zM309 712h1v5h-1zM329 712h1v5h-1zM339 712h1v5h-1zM349 712h1v5h-1zM359 712h1v5h-1zM379 712h1v5h-1zM389 712h1v5h-1zM399 712h1v5h-1zM409 712h1v5h-1zM429 712h1v5h-1zM439 712h1v5h-1zM449 712h1v5h-1zM459 712h1v5h-1zM479 712h1v5h-1zM489 712h1v5h-1zM499 712h1v5h-1zM509 712h1v5h-1zM529 712h1v5h-1zM539 712h1v5h-1zM549 712h1v5h-1zM559 712h1v5h-1zM579 712h1v5h-1zM589 712h1v5h-1zM599 712h1v5h-1zM609 712h1v5h-1zM629 712h1v5h-1zM639 712h1v5h-1zM649 712h1v5h-1zM659 712h1v5h-1z"/></svg>
<div style="position:absolute;left:118px;top:720.69px;width:10px;font-size:11px;line-height:11px;text-align:center">2</div>
<div style="position:absolute;left:118px;top:729.69px;width:10px;font-size:11px;line-height:11px;text-align:center">0</div>
<div style="position:absolute;left:118px;top:737.69px;width:10px;font-size:11px;line-height:11px;text-align:center">0</div>
<div style="position:absolute;left:118px;top:746.69px;width:10px;font-size:11px;line-height:11px;text-align:center">5</div>
<div style="position:absolute;left:318px;top:720.69px;width:10px;font-size:11px;line-height:11px;text-align:center">2</div>
<div style="position:absolute;left:318px;top:729.69px;width:10px;font-size:11px;line-height:11px;text-align:center">0</div>
<div style="position:absolute;left:318px;top:737.69px;width:10px;font-size:11px;line-height:11px;text-align:center">0</div>
<div style="position:absolute;left:318px;top:746.69px;width:10px;font-size:11px;line-height:11px;text-align:center">6</div>
<svg style="position:absolute;left:0;top:0" width="787" height="764"><defs><clipPath id="dg"><rect x="12" y="706" width="60" height="54"/></clipPath></defs><g clip-path="url(#dg)"><path d="M66.5 708L14.5 760" stroke="#ece9d8" stroke-width="4.5"/><path d="M65 707.5L12 760.5" stroke="#fffbf0" stroke-width="1"/><path d="M68.5 709.5L17.5 760.5" stroke="#d8d4c2" stroke-width="1"/></g></svg>
<div style="position:absolute;left:18.00px;top:713.69px;font-size:11px;line-height:11px;color:#000;font-weight:normal;white-space:nowrap;letter-spacing:0.075px;">Price</div>
<div style="position:absolute;left:19.00px;top:725.69px;font-size:11px;line-height:11px;color:#000;font-weight:normal;white-space:nowrap;letter-spacing:0.000px;">(&euro;)</div>
<div style="position:absolute;left:42.00px;top:746.69px;font-size:11px;line-height:11px;color:#000;font-weight:normal;white-space:nowrap;letter-spacing:-0.025px;">Year</div>
<div style="position:absolute;left:200px;top:208px;width:174px;height:30px;border:1px solid #000;background:#f8f6e6"></div>
<div style="position:absolute;right:415.00px;top:211.69px;font-size:11px;line-height:11px;color:#333;font-weight:normal;white-space:nowrap;letter-spacing:0.000px;">Linha de tend&ecirc;ncia ascendente em</div>
<div style="position:absolute;right:507.00px;top:224.69px;font-size:11px;line-height:11px;color:#333;font-weight:normal;white-space:nowrap;letter-spacing:0.000px;">aaaaaaaaaa soma.</div>
<div style="position:absolute;left:6px;top:78px;width:253px;height:176px;background:#7a96df;border-radius:3px 3px 0 0"></div><div style="position:absolute;left:6px;top:78px;width:253px;height:2px;background:linear-gradient(to bottom,#6c88d8,#8aa8e8);border-radius:3px 3px 0 0"></div><div style="position:absolute;left:6px;top:98px;width:253px;height:1px;background:#6f8ad8;"></div><div style="position:absolute;left:6px;top:99px;width:3px;height:155px;background:linear-gradient(to right,#7088d8,#8098e0 50%,#7890dc);"></div><div style="position:absolute;left:256px;top:99px;width:3px;height:155px;background:linear-gradient(to right,#7890dc,#6a80d4 50%,#5262c8);"></div><div style="position:absolute;left:6px;top:251px;width:253px;height:3px;background:linear-gradient(to bottom,#7890dc,#6a80d4 50%,#4e5cc4);"></div><div style="position:absolute;left:8.00px;top:83.84px;font-size:12px;line-height:12px;color:#d8e4f8;font-weight:bold;white-space:nowrap;letter-spacing:0.000px;">Chart Toolbox</div><div style="position:absolute;left:241px;top:83px;width:13px;height:13px;box-sizing:border-box;border:1px solid #b6c8f4;border-radius:2px;background:#bd6a7c"></div><svg style="position:absolute;left:241px;top:83px;" width="13" height="13" viewBox="0 0 13 13"><path d="M3.5 3.5L9.5 9.5M9.5 3.5L3.5 9.5" stroke="#fff" stroke-width="2.2"/></svg><div style="position:absolute;left:9px;top:99px;width:247px;height:152px;background:#ece9d8;"></div><div style="position:absolute;left:15px;top:160px;width:235px;height:84px;background:#efede3;"></div><div style="position:absolute;left:9px;top:119px;width:247px;height:1px;background:#fff;"></div><div style="position:absolute;left:9px;top:99px;width:38px;height:21px;background:#ece9d8;"></div><div style="position:absolute;left:9px;top:99px;width:38px;height:1px;background:#fff;"></div><div style="position:absolute;left:9px;top:99px;width:1px;height:21px;background:#fff;"></div><div style="position:absolute;left:47px;top:100px;width:1px;height:19px;background:#000;"></div><div style="position:absolute;left:17.00px;top:105.69px;font-size:11px;line-height:11px;color:#000;font-weight:normal;white-space:nowrap;letter-spacing:-0.525px;"><u>C</u>hart</div><div style="position:absolute;left:48px;top:101px;width:36px;height:1px;background:#fff;"></div><div style="position:absolute;left:84px;top:101px;width:1px;height:18px;background:#000;"></div><div style="position:absolute;left:83px;top:102px;width:1px;height:17px;background:#aca899;"></div><div style="position:absolute;left:56.00px;top:106.69px;font-size:11px;line-height:11px;color:#000;font-weight:normal;white-space:nowrap;letter-spacing:-0.233px;"><u>D</u>raw</div><div style="position:absolute;left:85px;top:101px;width:36px;height:1px;background:#fff;"></div><div style="position:absolute;left:121px;top:101px;width:1px;height:18px;background:#000;"></div><div style="position:absolute;left:120px;top:102px;width:1px;height:17px;background:#aca899;"></div><div style="position:absolute;left:94.00px;top:106.69px;font-size:11px;line-height:11px;color:#000;font-weight:normal;white-space:nowrap;letter-spacing:0.233px;"><u>D</u>ata</div><div style="position:absolute;left:122px;top:101px;width:29px;height:1px;background:#fff;"></div><div style="position:absolute;left:151px;top:101px;width:1px;height:18px;background:#000;"></div><div style="position:absolute;left:150px;top:102px;width:1px;height:17px;background:#aca899;"></div><div style="position:absolute;left:128.00px;top:106.69px;font-size:11px;line-height:11px;color:#000;font-weight:normal;white-space:nowrap;letter-spacing:0.300px;"><u>M</u>A</div><div style="position:absolute;left:152px;top:101px;width:41px;height:1px;background:#fff;"></div><div style="position:absolute;left:193px;top:101px;width:1px;height:18px;background:#000;"></div><div style="position:absolute;left:192px;top:102px;width:1px;height:17px;background:#aca899;"></div><div style="position:absolute;left:159.00px;top:106.69px;font-size:11px;line-height:11px;color:#000;font-weight:normal;white-space:nowrap;letter-spacing:-0.000px;"><u>N</u>otes</div><div style="position:absolute;left:16.00px;top:133.69px;font-size:11px;line-height:11px;color:#000;font-weight:normal;white-space:nowrap;letter-spacing:-0.262px;">Chart 24 of 27</div><div style="position:absolute;left:142px;top:127px;width:27px;height:24px;background:#ece9d8;"></div><div style="position:absolute;left:142px;top:127px;width:27px;height:1px;background:#fff;"></div><div style="position:absolute;left:142px;top:127px;width:1px;height:24px;background:#fff;"></div><div style="position:absolute;left:142px;top:150px;width:27px;height:1px;background:#716f64;"></div><div style="position:absolute;left:168px;top:127px;width:1px;height:24px;background:#716f64;"></div><div style="position:absolute;left:143px;top:149px;width:25px;height:1px;background:#aca899;"></div><div style="position:absolute;left:167px;top:128px;width:1px;height:22px;background:#aca899;"></div><svg style="position:absolute;left:149px;top:131px;" width="12" height="16" viewBox="0 0 12 16"><rect x="0.5" y="0.5" width="11" height="14" fill="#fffde8" stroke="#000"/><path d="M3 4v7" stroke="#00f" stroke-width="2"/><path d="M10 3v9l-6 -4.5z" fill="#00f"/><path d="M0.5 11.5h4v3h-4z" fill="#000"/><circle cx="2.5" cy="13" r="1" fill="#fff"/></svg><div style="position:absolute;left:169px;top:127px;width:27px;height:24px;background:#ece9d8;"></div><div style="position:absolute;left:169px;top:127px;width:27px;height:1px;background:#fff;"></div><div style="position:absolute;left:169px;top:127px;width:1px;height:24px;background:#fff;"></div><div style="position:absolute;left:169px;top:150px;width:27px;height:1px;background:#716f64;"></div><div style="position:absolute;left:195px;top:127px;width:1px;height:24px;background:#716f64;"></div><div style="position:absolute;left:170px;top:149px;width:25px;height:1px;background:#aca899;"></div><div style="position:absolute;left:194px;top:128px;width:1px;height:22px;background:#aca899;"></div><svg style="position:absolute;left:176px;top:131px;" width="12" height="16" viewBox="0 0 12 16"><rect x="0.5" y="0.5" width="11" height="14" fill="#fffde8" stroke="#000"/><path d="M9 3v9l-6 -4.5z" fill="#00f"/><path d="M0.5 11.5h4v3h-4z" fill="#000"/><circle cx="2.5" cy="13" r="1" fill="#fff"/></svg><div style="position:absolute;left:196px;top:127px;width:27px;height:24px;background:#ece9d8;"></div><div style="position:absolute;left:196px;top:127px;width:27px;height:1px;background:#fff;"></div><div style="position:absolute;left:196px;top:127px;width:1px;height:24px;background:#fff;"></div><div style="position:absolute;left:196px;top:150px;width:27px;height:1px;background:#716f64;"></div><div style="position:absolute;left:222px;top:127px;width:1px;height:24px;background:#716f64;"></div><div style="position:absolute;left:197px;top:149px;width:25px;height:1px;background:#aca899;"></div><div style="position:absolute;left:221px;top:128px;width:1px;height:22px;background:#aca899;"></div><svg style="position:absolute;left:203px;top:131px;" width="12" height="16" viewBox="0 0 12 16"><rect x="0.5" y="0.5" width="11" height="14" fill="#fffde8" stroke="#000"/><path d="M3 3v9l6 -4.5z" fill="#00f"/><path d="M0.5 11.5h4v3h-4z" fill="#000"/><circle cx="2.5" cy="13" r="1" fill="#fff"/></svg><div style="position:absolute;left:223px;top:127px;width:27px;height:24px;background:#ece9d8;"></div><div style="position:absolute;left:223px;top:127px;width:27px;height:1px;background:#fff;"></div><div style="position:absolute;left:223px;top:127px;width:1px;height:24px;background:#fff;"></div><div style="position:absolute;left:223px;top:150px;width:27px;height:1px;background:#716f64;"></div><div style="position:absolute;left:249px;top:127px;width:1px;height:24px;background:#716f64;"></div><div style="position:absolute;left:224px;top:149px;width:25px;height:1px;background:#aca899;"></div><div style="position:absolute;left:248px;top:128px;width:1px;height:22px;background:#aca899;"></div><svg style="position:absolute;left:230px;top:131px;" width="12" height="16" viewBox="0 0 12 16"><rect x="0.5" y="0.5" width="11" height="14" fill="#fffde8" stroke="#000"/><path d="M3 3v9l6 -4.5z" fill="#00f"/><path d="M9.5 4v7" stroke="#00f" stroke-width="2"/><path d="M0.5 11.5h4v3h-4z" fill="#000"/><circle cx="2.5" cy="13" r="1" fill="#fff"/></svg><div style="position:absolute;left:13px;top:158px;width:238px;height:1px;background:#aca899;"></div><div style="position:absolute;left:13px;top:158px;width:1px;height:87px;background:#aca899;"></div><div style="position:absolute;left:14px;top:159px;width:236px;height:1px;background:#716f64;"></div><div style="position:absolute;left:14px;top:159px;width:1px;height:85px;background:#716f64;"></div><div style="position:absolute;left:13px;top:244px;width:238px;height:1px;background:#fff;"></div><div style="position:absolute;left:250px;top:158px;width:1px;height:87px;background:#fff;"></div><div style="position:absolute;left:17.00px;top:163.69px;font-size:11px;line-height:11px;color:#000;font-weight:bold;white-space:nowrap;letter-spacing:0.405px;">Chart State: Bullish</div><div style="position:absolute;left:17.00px;top:176.69px;font-size:11px;line-height:11px;color:#000;font-weight:normal;white-space:nowrap;letter-spacing:-0.124px;">Last Data Date: 17-11-2006</div><div style="position:absolute;left:17.00px;top:189.69px;font-size:11px;line-height:11px;color:#000;font-weight:normal;white-space:nowrap;letter-spacing:-0.126px;">Open: &euro;1,5100, High: &euro;1,5200</div><div style="position:absolute;left:17.00px;top:202.69px;font-size:11px;line-height:11px;color:#000;font-weight:normal;white-space:nowrap;letter-spacing:-0.141px;">Low: &euro;1,4900, Close: &euro;1,4900</div><div style="position:absolute;left:17.00px;top:215.69px;font-size:11px;line-height:11px;color:#000;font-weight:normal;white-space:nowrap;letter-spacing:-0.150px;">Volume: 3.534.360</div><div style="position:absolute;left:17.00px;top:228.69px;font-size:11px;line-height:11px;color:#000;font-weight:normal;white-space:nowrap;letter-spacing:-0.093px;">RS Value: 0,0000</div>
</body></html>
